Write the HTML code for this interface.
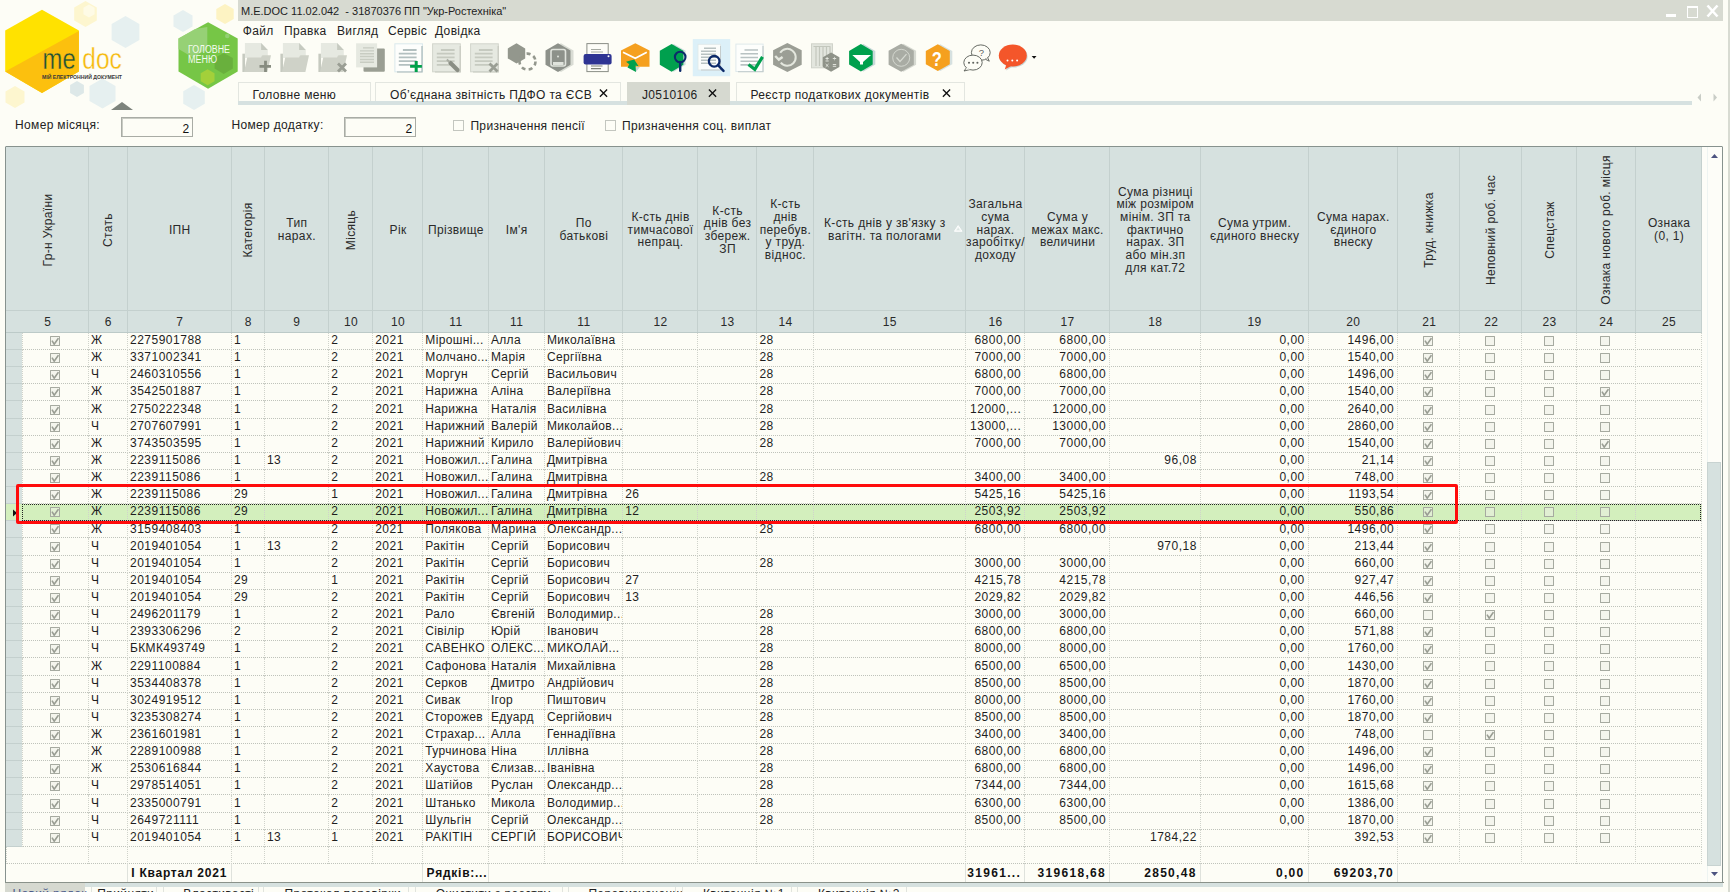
<!DOCTYPE html><html><head><meta charset="utf-8"><style>
html,body{margin:0;padding:0}
body{width:1730px;height:892px;overflow:hidden;position:relative;background:#fdfdf6;font-family:"Liberation Sans",sans-serif;font-size:12px;letter-spacing:0.35px;color:#222;}
svg{letter-spacing:0}
.a{position:absolute}
.t{position:absolute;white-space:pre;}
.hd{position:absolute;top:147px;height:164px;display:flex;align-items:center;justify-content:center;text-align:center;line-height:12.7px;color:#2a2a2a;overflow:hidden;white-space:pre}
.rot{position:absolute;white-space:pre;transform:rotate(-90deg);transform-origin:center center;color:#2a2a2a}
.num{position:absolute;top:312px;height:21px;line-height:21px;text-align:center;color:#2a2a2a}
.row{position:absolute;left:6px;width:1696px;height:17.13px}
.c{position:absolute;top:0;height:14px;line-height:14px;padding-top:0;white-space:pre;overflow:hidden;color:#1e1e1e;font-size:12px;letter-spacing:0.35px}
.r{text-align:right}
.cb{position:absolute;width:8px;height:8px;border:1px solid #a6aaa0;background:rgba(236,239,230,0.55);border-radius:0.5px}
.cb svg{position:absolute;left:0;top:0}
.tb{position:absolute;top:43px;width:29px;height:29px}
</style></head><body><svg class="a" style="left:0;top:0" width="238" height="112" viewBox="0 0 238 112"><polygon points="85.5,1.0 96.8,7.5 96.8,20.5 85.5,27.0 74.2,20.5 74.2,7.5" fill="#fdf6cf"/><polygon points="89.0,4.5 94.6,7.8 94.6,14.2 89.0,17.5 83.4,14.2 83.4,7.7" fill="#fefbe6"/><polygon points="125.5,16.0 139.4,24.0 139.4,40.0 125.5,48.0 111.6,40.0 111.6,24.0" fill="#e6f0f0"/><polygon points="183.0,10.0 192.5,15.5 192.5,26.5 183.0,32.0 173.5,26.5 173.5,15.5" fill="#e6f0f0"/><polygon points="225.0,4.0 233.7,9.0 233.7,19.0 225.0,24.0 216.3,19.0 216.3,9.0" fill="#fdf3c3"/><polygon points="15.0,86.0 24.5,91.5 24.5,102.5 15.0,108.0 5.5,102.5 5.5,91.5" fill="#fdf6cf"/><polygon points="77.0,81.0 83.9,85.0 83.9,93.0 77.0,97.0 70.1,93.0 70.1,85.0" fill="#dde8e8"/><polygon points="102.5,78.5 115.5,86.0 115.5,101.0 102.5,108.5 89.5,101.0 89.5,86.0" fill="#e6f0f0"/><polygon points="194.0,85.0 204.8,91.2 204.8,103.8 194.0,110.0 183.2,103.8 183.2,91.2" fill="#e6f0f0"/><polygon points="42,9.7 78.9,30.6 78.9,71.6 42,92.9 5.2,71.6 5.2,30.6" fill="#ffe200"/><polygon points="78.9,31 78.9,71.6 42,92.9 5.2,71.6" fill="#fcc00e"/><text x="42.6" y="69" font-family="Liberation Sans" font-size="29.5" fill="#1d5236" stroke="#fcc00e" stroke-width="0.35" textLength="33" lengthAdjust="spacingAndGlyphs">me</text><text x="82.3" y="69" font-family="Liberation Sans" font-size="29" fill="#f6b90a" stroke="#fdfdf6" stroke-width="0.35" textLength="39.6" lengthAdjust="spacingAndGlyphs">doc</text><text x="42" y="79" font-family="Liberation Sans" font-size="5.6" font-weight="bold" fill="#3a3a3a" textLength="80" lengthAdjust="spacingAndGlyphs">МІЙ ЕЛЕКТРОННИЙ ДОКУМЕНТ</text><polygon points="208.1,22.2 237.7,38.5 237.7,71.5 208.1,88.7 178.5,71.5 178.5,38.5" fill="#76c646"/><polygon points="207.3,27 207.3,49 193,57.5 178.5,49 178.5,38.5 195,29" fill="#9ad27a" opacity="0.9"/><polygon points="223.7,52.9 232.8,58.1 232.8,68.6 223.7,73.9 214.6,68.6 214.6,58.1" fill="#68ad3c" opacity="0.9"/><polygon points="207.6,69.3 214.5,73.3 214.5,81.3 207.6,85.3 200.7,81.3 200.7,73.3" fill="#a3d03a"/><circle cx="227.3" cy="36" r="2.3" fill="#92d072"/><text x="188" y="53.2" font-family="Liberation Sans" font-size="10" fill="#f4fbef" textLength="42" lengthAdjust="spacingAndGlyphs">ГОЛОВНЕ</text><text x="188" y="63.1" font-family="Liberation Sans" font-size="10" fill="#f4fbef" textLength="29" lengthAdjust="spacingAndGlyphs">МЕНЮ</text><polygon points="122,101.9 133,110 111,110" fill="#7d837c"/></svg><div class="a" style="left:238px;top:0;width:1485px;height:21px;background:#d7dad1"></div><div class="t" style="left:241px;top:4.5px;font-size:11px;letter-spacing:0;line-height:13px;color:#222">M.E.DOC 11.02.042  - 31870376 ПП "Укр-Ростехніка"</div><div class="a" style="left:1666px;top:14px;width:10px;height:3px;background:#fff"></div><div class="a" style="left:1687px;top:6px;width:9px;height:9px;border:1px solid #fff;border-top-width:2px"></div><svg class="a" style="left:1706px;top:4px" width="13" height="14" viewBox="0 0 13 14"><path d="M1.5 1.5 L11.5 12.5 M11.5 1.5 L1.5 12.5" stroke="#fff" stroke-width="2.6"/></svg><div class="a" style="left:1728px;top:0;width:2px;height:892px;background:#d8dbd2"></div><div class="t" style="left:242.8px;top:24px;line-height:14px;color:#222">Файл</div><div class="t" style="left:284.0px;top:24px;line-height:14px;color:#222">Правка</div><div class="t" style="left:337.0px;top:24px;line-height:14px;color:#222">Вигляд</div><div class="t" style="left:388.0px;top:24px;line-height:14px;color:#222">Сервіс</div><div class="t" style="left:435.0px;top:24px;line-height:14px;color:#222">Довідка</div><svg class="a" style="left:0;top:0" width="1050" height="80" viewBox="0 0 1050 80"><path d="M242.4 53.7 h2.6 v18.3 h-2.6z" fill="#c6cac0"/><path d="M244.9 43.1 h16.2 l6.7 6.9 v8 h-22.9z" fill="#e6e9e1"/><path d="M261.1 43.1 l6.7 6.9 h-6.7z" fill="#c6cac0"/><path d="M244.0 72 L247.3 57.4 H261.1 Q261.8 55.3 262.8 55.3 H271.0 L267.4 72z" fill="#cfd2c8"/><path d="M264.1 60.7 h2.8 v11.3 h-2.8z M259.5 65 h11.5 v2.8 h-11.5z" fill="#878c80"/><path d="M280.4 53.7 h2.6 v18.3 h-2.6z" fill="#c6cac0"/><path d="M282.9 43.1 h16.2 l6.7 6.9 v8 h-22.9z" fill="#e6e9e1"/><path d="M299.1 43.1 l6.7 6.9 h-6.7z" fill="#c6cac0"/><path d="M282.0 72 L285.3 57.4 H299.1 Q299.8 55.3 300.8 55.3 H309.0 L305.4 72z" fill="#cfd2c8"/><path d="M318.4 53.7 h2.6 v18.3 h-2.6z" fill="#c6cac0"/><path d="M320.9 43.1 h16.2 l6.7 6.9 v8 h-22.9z" fill="#e6e9e1"/><path d="M337.1 43.1 l6.7 6.9 h-6.7z" fill="#c6cac0"/><path d="M320.0 72 L323.3 57.4 H337.1 Q337.8 55.3 338.8 55.3 H347.0 L343.4 72z" fill="#cfd2c8"/><path d="M338.0 63.5 L346.0 71.5 M346.0 63.5 L338.0 71.5" stroke="#9a9e94" stroke-width="2.8"/><rect x="363.5" y="48.4" width="21.3" height="23.4" rx="1" fill="#9a9e93"/><rect x="356.1" y="43.3" width="21" height="24.1" fill="#e6e9e1"/><path d="M363 47.9 h11 M360 50.9 h14 M360 53.7 h14 M360 56.5 h14 M360 59.5 h14 M360 62.3 h14" stroke="#c8ccc2" stroke-width="1.4"/><rect x="394.9" y="43.8" width="27.5" height="28" fill="#fdfefc" stroke="#d9e8ec" stroke-width="1"/><path d="M422.0 46 V72 H397.0" fill="none" stroke="#a9b8b8" stroke-width="1.2"/><path d="M402.9 50 h13.7 M398.8 53.7 h17.8 M398.8 57.4 h17.8 M398.8 61.1 h17.8 M398.8 64.8 h17.8" stroke="#b3c0c0" stroke-width="1.8"/><path d="M414.7 60.9 h3 v11.1 h-3z M410.1 65 h11.8 v2.8 h-11.8z" fill="#00a04a"/><rect x="432.6" y="43.8" width="27.7" height="28" fill="#e6e9e1" stroke="#d2d5cc" stroke-width="1"/><path d="M460.2 46 V72 H435.0" fill="none" stroke="#c8cbc2" stroke-width="1.2"/><path d="M440.9 50 h13.7 M436.8 53.7 h17.8 M436.8 57.4 h17.8 M436.8 61.1 h17.8 M436.8 64.8 h17.8" stroke="#c6cac0" stroke-width="1.8"/><path d="M450.5 63 L457.5 70" stroke="#8a8e84" stroke-width="4.2" stroke-linecap="round"/><path d="M449.5 62 L446.8 59.5" stroke="#a9ada3" stroke-width="2"/><rect x="470.6" y="43.8" width="27.7" height="28" fill="#e6e9e1" stroke="#d2d5cc" stroke-width="1"/><path d="M498.2 46 V72 H473.0" fill="none" stroke="#c8cbc2" stroke-width="1.2"/><path d="M478.9 50 h13.7 M474.8 53.7 h17.8 M474.8 57.4 h17.8 M474.8 61.1 h17.8 M474.8 64.8 h17.8" stroke="#c6cac0" stroke-width="1.8"/><path d="M489.5 63.5 L497.5 71.5 M497.5 63.5 L489.5 71.5" stroke="#9a9e94" stroke-width="2.8"/><polygon points="516.5,43.3 525.2,48.4 525.2,58.4 516.5,63.5 507.8,58.4 507.8,48.4" fill="#93978d"/><circle cx="527.5" cy="61.6" r="8" fill="none" stroke="#93978d" stroke-width="2.6" stroke-dasharray="4 3.3"/><polygon points="561.0,43.2 573.5,50.4 573.5,64.8 561.0,72.0 548.5,64.8 548.5,50.4" fill="#d9dcd4"/><polygon points="558.0,43.2 570.5,50.4 570.5,64.8 558.0,72.0 545.5,64.8 545.5,50.4" fill="#8d918a"/><rect x="551" y="49.5" width="14.5" height="16.5" rx="2" fill="none" stroke="#e0e3dc" stroke-width="1.6"/><rect x="553" y="62" width="10.5" height="3" fill="#e0e3dc"/><circle cx="558" cy="56.5" r="1" fill="#e0e3dc"/><rect x="586.9" y="43.6" width="21.3" height="28" fill="#fdfdf8" stroke="#8a8e86" stroke-width="1"/><path d="M591 49.5 h10 M591 52 h12" stroke="#a6aaa2" stroke-width="1.2"/><rect x="583.6" y="54" width="28" height="10.4" rx="2" fill="#2e3493"/><circle cx="608.5" cy="56.2" r="1" fill="#fff"/><path d="M591 66 h11.5 M591 68.7 h10" stroke="#7d8179" stroke-width="1.2"/><path d="M635.3 43.2 L649.5 50.6 V66.8 H621 V50.6Z" fill="#f5a01f"/><path d="M623 52.3 L635.3 58.3 L646.8 52.3" fill="none" stroke="#fff" stroke-width="1.8"/><path d="M635.5 67 L640 67 L635.8 72Z" fill="#c9d3d3"/><path d="M626 61.8 L634.2 59.6 L638.6 66.2 L635.6 65.6 L636 72 L627.5 67.6 L629.3 64.3 Z" fill="#00a04e"/><polygon points="673.8,43.9 685.6,50.8 685.6,64.8 673.8,71.7 662.0,64.8 662.0,50.8" fill="#d0dede"/><polygon points="671.6,43.9 683.4,50.8 683.4,64.8 671.6,71.7 659.8,64.8 659.8,50.8" fill="#00a04e"/><circle cx="680.2" cy="57" r="5.3" fill="none" stroke="#0c2a6a" stroke-width="2.1"/><path d="M680.2 62 V70.8" stroke="#0c2a6a" stroke-width="2.4" stroke-linecap="round"/><rect x="692.8" y="39.1" width="37.4" height="37.1" fill="#dcf0f8"/><rect x="698" y="44.3" width="22.5" height="25.7" fill="#fbfdfb" stroke="#dfe8e8" stroke-width="0.8"/><path d="M701 70 H720.5 V46" fill="none" stroke="#c5cccc" stroke-width="1"/><path d="M704 48.3 h12 M701 51.3 h15 M701 54.3 h15 M701 57.3 h15 M701 60.3 h15 M701 63.3 h15" stroke="#b8c2c2" stroke-width="1.4"/><circle cx="714.2" cy="61.3" r="5.3" fill="none" stroke="#0c2a6a" stroke-width="2.3"/><path d="M718 65.2 L723.5 70.8" stroke="#0c2a6a" stroke-width="2.5" stroke-linecap="round"/><rect x="735.9" y="44.1" width="27.2" height="27.4" fill="#fdfefc" stroke="#dfe9ec" stroke-width="1"/><path d="M763 46 V71.8 H738" fill="none" stroke="#c0c9c9" stroke-width="1.1"/><path d="M744.5 50 h13.5 M740.5 53.8 h17.5 M740.5 57.5 h17.5 M740.5 61.2 h17.5 M740.5 64.9 h17.5" stroke="#b8c2c2" stroke-width="1.6"/><path d="M748.5 64.5 L754.8 69.3 L762.5 56.8" fill="none" stroke="#00a04e" stroke-width="3.2"/><polygon points="787.4,43.0 801.7,50.2 801.7,64.8 787.4,72.0 773.1,64.8 773.1,50.2" fill="#9b9e95"/><path d="M780.2 52.8 A8.4 8.4 0 1 1 780.8 62.6" fill="none" stroke="#e4e7de" stroke-width="2"/><polyline points="775.2,56 778.8,59.6 782.6,56.9" fill="none" stroke="#e4e7de" stroke-width="2.4"/><rect x="811.5" y="43.8" width="21" height="24" fill="#e3e6de" stroke="#d0d3ca" stroke-width="1"/><path d="M816 47 V66 M819.5 47 V66 M823 47 V66 M826.5 47 V66 M830 47 V66" stroke="#c3c7bd" stroke-width="1.2"/><path d="M813.5 46.5 h17" stroke="#c3c7bd" stroke-width="1"/><polygon points="831.1,52.5 839.4,57.3 839.4,66.9 831.1,71.7 822.8,66.9 822.8,57.3" fill="#8f9389"/><path d="M825.5 58.5 h3.2 M827.1 57 v3.2 M825.5 61 h3.2 M832.8 58.5 h3.4 M832.8 64.5 h3.4 M832.8 66.3 h3.4 M825.7 64 l2.8 2.8 M828.5 64 l-2.8 2.8" stroke="#e8ebe3" stroke-width="0.9"/><circle cx="834.5" cy="57.3" r="0.5" fill="#e8ebe3"/><circle cx="834.5" cy="59.8" r="0.5" fill="#e8ebe3"/><polygon points="863.5,44.0 875.3,50.9 875.3,64.5 863.5,71.4 851.7,64.5 851.7,50.9" fill="#c9d9d9"/><polygon points="860.9,44.0 872.7,50.9 872.7,64.5 860.9,71.4 849.1,64.5 849.1,50.9" fill="#00a04e"/><path d="M852.3 55 H871 L863 62 V64.5 H860 V62Z" fill="#fff"/><polygon points="903.5,43.8 916.1,50.8 916.1,64.8 903.5,71.8 890.9,64.8 890.9,50.8" fill="#d6d9d1"/><polygon points="901.2,43.8 913.8,50.8 913.8,64.8 901.2,71.8 888.6,64.8 888.6,50.8" fill="#a9aca4"/><circle cx="901.2" cy="57.8" r="8.5" fill="none" stroke="#d7dad2" stroke-width="0.9"/><path d="M896.5 57.5 L900 61.5 L906.5 54.2" fill="none" stroke="#d7dad2" stroke-width="1.2"/><polygon points="940.3,44.2 952.3,50.9 952.3,64.3 940.3,71.0 928.3,64.3 928.3,50.9" fill="#d6e1e0"/><polygon points="937.8,44.2 949.8,50.9 949.8,64.3 937.8,71.0 925.8,64.3 925.8,50.9" fill="#f5a01f"/><text x="0" y="0" font-family="Liberation Sans" font-weight="bold" font-size="21" fill="#fff" transform="translate(931.8 66.2) scale(0.78 1)">?</text><ellipse cx="980.8" cy="52.6" rx="9.4" ry="7.7" fill="#fdfdf6" stroke="#5f635d" stroke-width="0.95"/><path d="M985.5 59.3 L989.3 61.2 L987.6 57.6" fill="#fdfdf6" stroke="#5f635d" stroke-width="0.95"/><text x="978.8" y="56.3" font-family="Liberation Sans" font-size="9.5" fill="#5f635d">?</text><ellipse cx="973" cy="62.6" rx="9.2" ry="7.5" fill="#fdfdf6" stroke="#5f635d" stroke-width="0.95"/><path d="M966.3 68 L964 71 L969.8 69.6" fill="#fdfdf6" stroke="#5f635d" stroke-width="0.95"/><path d="M966.5 68.2 L969.5 69.2" stroke="#fdfdf6" stroke-width="1.2"/><circle cx="969" cy="62.8" r="1.05" fill="#5f635d"/><circle cx="973.2" cy="62.8" r="1.05" fill="#5f635d"/><circle cx="977.4" cy="62.8" r="1.05" fill="#5f635d"/><ellipse cx="1013.6" cy="56.5" rx="14" ry="11" fill="#c8d8d8"/><path d="M1007.5 65 L1006 70.5 L1013 66.5Z" fill="#c8d8d8"/><ellipse cx="1012.8" cy="55.5" rx="14" ry="11" fill="#f4562a"/><path d="M1006.5 64 L1004.8 69.5 L1012 65.5Z" fill="#f4562a"/><circle cx="1007.5" cy="60.5" r="1" fill="#fff"/><circle cx="1012.3" cy="60.5" r="1" fill="#fff"/><circle cx="1017.1" cy="60.5" r="1" fill="#fff"/><path d="M1031.7 56 L1036.5 56 L1034.1 58.8Z" fill="#111"/></svg><div class="a" style="left:238px;top:101px;width:1454px;height:4px;background:#d6e1e0"></div><div class="a" style="left:238.0px;top:81.5px;width:132.5px;height:19.5px;background:#fdfdf6;border:1px solid #e3e6e0;border-bottom:none;box-sizing:border-box"></div><div class="t" style="left:252.5px;top:88px;line-height:14px;color:#222">Головне меню</div><div class="a" style="left:375.3px;top:81.5px;width:246.1px;height:19.5px;background:#fdfdf6;border:1px solid #e3e6e0;border-bottom:none;box-sizing:border-box"></div><div class="t" style="left:390.0px;top:88px;line-height:14px;color:#222">Об’єднана звітність ПДФО та ЄСВ</div><svg class="a" style="left:598.8px;top:89px" width="9" height="9" viewBox="0 0 9 9"><path d="M0.9 0.6 L8.1 7.8 M8.1 0.6 L0.9 7.8" stroke="#111" stroke-width="1.35"/></svg><div class="a" style="left:627.1px;top:81.5px;width:103.2px;height:23.0px;background:#d6d9d0;border:1px solid #d6d9d0;border-bottom:none;box-sizing:border-box"></div><div class="t" style="left:642.0px;top:88px;line-height:14px;color:#222">J0510106</div><svg class="a" style="left:708.0px;top:89px" width="9" height="9" viewBox="0 0 9 9"><path d="M0.9 0.6 L8.1 7.8 M8.1 0.6 L0.9 7.8" stroke="#111" stroke-width="1.35"/></svg><div class="a" style="left:736.3px;top:81.5px;width:229.2px;height:19.5px;background:#fdfdf6;border:1px solid #e3e6e0;border-bottom:none;box-sizing:border-box"></div><div class="t" style="left:750.5px;top:88px;line-height:14px;color:#222">Реєстр податкових документів</div><svg class="a" style="left:942.4px;top:89px" width="9" height="9" viewBox="0 0 9 9"><path d="M0.9 0.6 L8.1 7.8 M8.1 0.6 L0.9 7.8" stroke="#111" stroke-width="1.35"/></svg><svg class="a" style="left:1697px;top:93px" width="22" height="9" viewBox="0 0 22 9"><path d="M4 0.5 L0.5 4.5 L4 8.5Z" fill="#c9cdc6"/><path d="M16.5 0.5 L20 4.5 L16.5 8.5Z" fill="#c9cdc6"/></svg><div class="t" style="left:15px;top:118px;line-height:14px;color:#222">Номер місяця:</div><div class="a" style="left:121px;top:117px;width:72px;height:20px;border:1px solid #a9aca5;box-sizing:border-box;background:#fdfdf6;box-shadow:inset 1px 1px 0 #c9ccc4"></div><div class="t" style="left:182.5px;top:121.5px;line-height:14px;color:#111">2</div><div class="t" style="left:231.4px;top:118px;line-height:14px;color:#222">Номер додатку:</div><div class="a" style="left:344px;top:117px;width:72px;height:20px;border:1px solid #a9aca5;box-sizing:border-box;background:#fdfdf6;box-shadow:inset 1px 1px 0 #c9ccc4"></div><div class="t" style="left:405.5px;top:121.5px;line-height:14px;color:#111">2</div><div class="a" style="left:453px;top:120px;width:9px;height:9px;border:1px solid #c3c6bf;background:#fdfdf6"></div><div class="t" style="left:470.4px;top:119px;line-height:14px;color:#222">Призначення пенсії</div><div class="a" style="left:605px;top:120px;width:9px;height:9px;border:1px solid #c3c6bf;background:#fdfdf6"></div><div class="t" style="left:622px;top:119px;line-height:14px;color:#222">Призначення соц. виплат</div><div class="a" style="left:5px;top:146px;width:1718px;height:737.5px;border:1.5px solid #87928e;box-sizing:border-box;background:#fdfdf6;border-radius:1px"></div><div class="a" style="left:6px;top:147px;width:1696px;height:185.5px;background:#d6e1df"></div><div class="a" style="left:88px;top:147px;width:1px;height:185.5px;background:#c4d0ce"></div><div class="a" style="left:127px;top:147px;width:1px;height:185.5px;background:#c4d0ce"></div><div class="a" style="left:231px;top:147px;width:1px;height:185.5px;background:#c4d0ce"></div><div class="a" style="left:264px;top:147px;width:1px;height:185.5px;background:#c4d0ce"></div><div class="a" style="left:328px;top:147px;width:1px;height:185.5px;background:#c4d0ce"></div><div class="a" style="left:372px;top:147px;width:1px;height:185.5px;background:#c4d0ce"></div><div class="a" style="left:422px;top:147px;width:1px;height:185.5px;background:#c4d0ce"></div><div class="a" style="left:488px;top:147px;width:1px;height:185.5px;background:#c4d0ce"></div><div class="a" style="left:544px;top:147px;width:1px;height:185.5px;background:#c4d0ce"></div><div class="a" style="left:622px;top:147px;width:1px;height:185.5px;background:#c4d0ce"></div><div class="a" style="left:697px;top:147px;width:1px;height:185.5px;background:#c4d0ce"></div><div class="a" style="left:756px;top:147px;width:1px;height:185.5px;background:#c4d0ce"></div><div class="a" style="left:813px;top:147px;width:1px;height:185.5px;background:#c4d0ce"></div><div class="a" style="left:965px;top:147px;width:1px;height:185.5px;background:#c4d0ce"></div><div class="a" style="left:1024px;top:147px;width:1px;height:185.5px;background:#c4d0ce"></div><div class="a" style="left:1109px;top:147px;width:1px;height:185.5px;background:#c4d0ce"></div><div class="a" style="left:1200px;top:147px;width:1px;height:185.5px;background:#c4d0ce"></div><div class="a" style="left:1308px;top:147px;width:1px;height:185.5px;background:#c4d0ce"></div><div class="a" style="left:1397px;top:147px;width:1px;height:185.5px;background:#c4d0ce"></div><div class="a" style="left:1459px;top:147px;width:1px;height:185.5px;background:#c4d0ce"></div><div class="a" style="left:1521px;top:147px;width:1px;height:185.5px;background:#c4d0ce"></div><div class="a" style="left:1576px;top:147px;width:1px;height:185.5px;background:#c4d0ce"></div><div class="a" style="left:1635px;top:147px;width:1px;height:185.5px;background:#c4d0ce"></div><div class="a" style="left:1701px;top:147px;width:1px;height:185.5px;background:#c4d0ce"></div><div class="a" style="left:6px;top:310px;width:1696px;height:1px;background:#c4d0ce"></div><div class="a" style="left:6px;top:332px;width:1696px;height:1px;background:#bccac8"></div><div class="rot" style="left:-52.4px;top:222px;width:200px;height:16px;line-height:16px;text-align:center">Гр-н України</div><div class="num" style="left:7.0px;width:81.3px">5</div><div class="rot" style="left:8.3px;top:222px;width:200px;height:16px;line-height:16px;text-align:center">Стать</div><div class="num" style="left:89.3px;width:38.0px">6</div><div class="hd" style="left:128.3px;width:102.9px;padding-top:2px;box-sizing:border-box">ІПН</div><div class="num" style="left:128.3px;width:102.9px">7</div><div class="rot" style="left:148.2px;top:222px;width:200px;height:16px;line-height:16px;text-align:center">Категорія</div><div class="num" style="left:232.2px;width:32.0px">8</div><div class="hd" style="left:265.2px;width:63.4px;padding-top:2px;box-sizing:border-box">Тип
нарах.</div><div class="num" style="left:265.2px;width:63.4px">9</div><div class="rot" style="left:251.1px;top:222px;width:200px;height:16px;line-height:16px;text-align:center">Місяць</div><div class="num" style="left:329.6px;width:42.9px">10</div><div class="hd" style="left:373.5px;width:49.1px;padding-top:2px;box-sizing:border-box">Рік</div><div class="num" style="left:373.5px;width:49.1px">10</div><div class="hd" style="left:423.6px;width:64.6px;padding-top:2px;box-sizing:border-box">Прізвище</div><div class="num" style="left:423.6px;width:64.6px">11</div><div class="hd" style="left:489.2px;width:55.0px;padding-top:2px;box-sizing:border-box">Ім&#x27;я</div><div class="num" style="left:489.2px;width:55.0px">11</div><div class="hd" style="left:545.2px;width:77.3px;padding-top:2px;box-sizing:border-box">По
батькові</div><div class="num" style="left:545.2px;width:77.3px">11</div><div class="hd" style="left:623.5px;width:74.0px;padding-top:2px;box-sizing:border-box">К-сть днів
тимчасової
непрац.</div><div class="num" style="left:623.5px;width:74.0px">12</div><div class="hd" style="left:698.5px;width:58.2px;padding-top:2px;box-sizing:border-box">К-сть
днів без
збереж.
ЗП</div><div class="num" style="left:698.5px;width:58.2px">13</div><div class="hd" style="left:757.7px;width:55.5px;padding-top:2px;box-sizing:border-box">К-сть
днів
перебув.
у труд.
віднос.</div><div class="num" style="left:757.7px;width:55.5px">14</div><div class="hd" style="left:814.2px;width:141.1px;padding-top:2px;box-sizing:border-box">К-сть днів у зв&#x27;язку з
вагітн. та пологами</div><div class="num" style="left:814.2px;width:151.1px">15</div><div class="hd" style="left:966.3px;width:58.3px;padding-top:2px;box-sizing:border-box">Загальна
сума
нарах.
заробітку/
доходу</div><div class="num" style="left:966.3px;width:58.3px">16</div><div class="hd" style="left:1025.6px;width:83.9px;padding-top:2px;box-sizing:border-box">Сума у
межах макс.
величини</div><div class="num" style="left:1025.6px;width:83.9px">17</div><div class="hd" style="left:1110.5px;width:89.7px;padding-top:2px;box-sizing:border-box">Сума різниці
між розміром
мінім. ЗП та
фактично
нарах. ЗП
або мін.зп
для кат.72</div><div class="num" style="left:1110.5px;width:89.7px">18</div><div class="hd" style="left:1201.2px;width:106.9px;padding-top:2px;box-sizing:border-box">Сума утрим.
єдиного внеску</div><div class="num" style="left:1201.2px;width:106.9px">19</div><div class="hd" style="left:1309.1px;width:88.5px;padding-top:2px;box-sizing:border-box">Сума нарах.
єдиного
внеску</div><div class="num" style="left:1309.1px;width:88.5px">20</div><div class="rot" style="left:1329.2px;top:222px;width:200px;height:16px;line-height:16px;text-align:center">Труд. книжка</div><div class="num" style="left:1398.6px;width:61.2px">21</div><div class="rot" style="left:1391.2px;top:222px;width:200px;height:16px;line-height:16px;text-align:center">Неповний роб. час</div><div class="num" style="left:1460.8px;width:60.9px">22</div><div class="rot" style="left:1449.5px;top:222px;width:200px;height:16px;line-height:16px;text-align:center">Спецстаж</div><div class="num" style="left:1522.7px;width:53.5px">23</div><div class="rot" style="left:1506.4px;top:222px;width:200px;height:16px;line-height:16px;text-align:center">Ознака нового роб. місця</div><div class="num" style="left:1577.2px;width:58.4px">24</div><div class="hd" style="left:1636.6px;width:65.0px;padding-top:2px;box-sizing:border-box">Ознака
(0, 1)</div><div class="num" style="left:1636.6px;width:65.0px">25</div><svg class="a" style="left:953.8px;top:224.8px" width="9" height="7" viewBox="0 0 9 7"><path d="M4.2 0.6 L8 6.3 L0.4 6.3Z" fill="#f4f7f6" stroke="#ffffff" stroke-width="0.9"/><path d="M4.2 2.8 L5.8 5.2 L2.6 5.2Z" fill="#dde6e4"/></svg><div class="row" style="top:333px;height:17px;"><div class="a" style="left:0;top:0;width:16px;height:17px;background:#d6e1df;border-bottom:1px solid #c4d0ce;box-sizing:border-box"></div><div class="a" style="left:16px;top:16px;width:1680px;height:0;border-top:1px dotted #bfc3bb"></div><div class="a" style="left:82px;top:0;width:0;height:17px;border-left:1px dotted #d0d3cb"></div><div class="a" style="left:121px;top:0;width:0;height:17px;border-left:1px dotted #d0d3cb"></div><div class="a" style="left:225px;top:0;width:0;height:17px;border-left:1px dotted #d0d3cb"></div><div class="a" style="left:258px;top:0;width:0;height:17px;border-left:1px dotted #d0d3cb"></div><div class="a" style="left:322px;top:0;width:0;height:17px;border-left:1px dotted #d0d3cb"></div><div class="a" style="left:366px;top:0;width:0;height:17px;border-left:1px dotted #d0d3cb"></div><div class="a" style="left:416px;top:0;width:0;height:17px;border-left:1px dotted #d0d3cb"></div><div class="a" style="left:482px;top:0;width:0;height:17px;border-left:1px dotted #d0d3cb"></div><div class="a" style="left:538px;top:0;width:0;height:17px;border-left:1px dotted #d0d3cb"></div><div class="a" style="left:616px;top:0;width:0;height:17px;border-left:1px dotted #d0d3cb"></div><div class="a" style="left:691px;top:0;width:0;height:17px;border-left:1px dotted #d0d3cb"></div><div class="a" style="left:750px;top:0;width:0;height:17px;border-left:1px dotted #d0d3cb"></div><div class="a" style="left:807px;top:0;width:0;height:17px;border-left:1px dotted #d0d3cb"></div><div class="a" style="left:959px;top:0;width:0;height:17px;border-left:1px dotted #d0d3cb"></div><div class="a" style="left:1018px;top:0;width:0;height:17px;border-left:1px dotted #d0d3cb"></div><div class="a" style="left:1103px;top:0;width:0;height:17px;border-left:1px dotted #d0d3cb"></div><div class="a" style="left:1194px;top:0;width:0;height:17px;border-left:1px dotted #d0d3cb"></div><div class="a" style="left:1302px;top:0;width:0;height:17px;border-left:1px dotted #d0d3cb"></div><div class="a" style="left:1391px;top:0;width:0;height:17px;border-left:1px dotted #d0d3cb"></div><div class="a" style="left:1453px;top:0;width:0;height:17px;border-left:1px dotted #d0d3cb"></div><div class="a" style="left:1515px;top:0;width:0;height:17px;border-left:1px dotted #d0d3cb"></div><div class="a" style="left:1570px;top:0;width:0;height:17px;border-left:1px dotted #d0d3cb"></div><div class="a" style="left:1629px;top:0;width:0;height:17px;border-left:1px dotted #d0d3cb"></div><div class="a" style="left:1695px;top:0;width:0;height:17px;border-left:1px dotted #d0d3cb"></div><div class="a" style="left:16px;top:0;width:0;height:17px;border-left:1px dotted #d0d3cb"></div><div class="a" style="left:0;top:0.10px;width:1696px;height:14px"><div class="cb" style="left:43.8px;top:2.9px"><svg width="8" height="8" viewBox="0 0 8 8"><path d="M1 3.6 L3.2 7.2 L7.4 1.2" fill="none" stroke="#999d93" stroke-width="1.6"/></svg></div><div class="c" style="left:82.8px;width:36.3px;padding-left:2.2px">Ж</div><div class="c" style="left:121.8px;width:101.2px;padding-left:2.2px;letter-spacing:0.5px">2275901788</div><div class="c" style="left:225.7px;width:30.3px;padding-left:2.2px;letter-spacing:0.5px">1</div><div class="c" style="left:258.7px;width:61.7px;padding-left:2.2px"></div><div class="c" style="left:323.1px;width:41.2px;padding-left:2.2px;letter-spacing:0.5px">2</div><div class="c" style="left:367.0px;width:47.4px;padding-left:2.2px;letter-spacing:0.5px">2021</div><div class="c" style="left:417.1px;width:62.9px;padding-left:2.2px">Мірошні...</div><div class="c" style="left:482.7px;width:53.3px;padding-left:2.2px">Алла</div><div class="c" style="left:538.7px;width:75.6px;padding-left:2.2px">Миколаївна</div><div class="c" style="left:617.0px;width:72.3px;padding-left:2.2px"></div><div class="c" style="left:751.2px;width:53.8px;padding-left:2.2px;letter-spacing:0.5px">28</div><div class="c r" style="left:959.8px;width:59.3px;padding-right:3.8px;box-sizing:border-box;letter-spacing:0.5px">6800,00</div><div class="c r" style="left:1019.1px;width:84.9px;padding-right:3.8px;box-sizing:border-box;letter-spacing:0.5px">6800,00</div><div class="c r" style="left:1104.0px;width:90.7px;padding-right:3.8px;box-sizing:border-box"></div><div class="c r" style="left:1194.7px;width:107.9px;padding-right:3.8px;box-sizing:border-box;letter-spacing:0.5px">0,00</div><div class="c r" style="left:1302.6px;width:89.5px;padding-right:3.8px;box-sizing:border-box;letter-spacing:0.5px">1496,00</div><div class="cb" style="left:1417.2px;top:2.9px"><svg width="8" height="8" viewBox="0 0 8 8"><path d="M1 3.6 L3.2 7.2 L7.4 1.2" fill="none" stroke="#999d93" stroke-width="1.6"/></svg></div><div class="cb" style="left:1479.2px;top:2.9px"></div><div class="cb" style="left:1537.5px;top:2.9px"></div><div class="cb" style="left:1594.4px;top:2.9px"></div></div></div><div class="row" style="top:350px;height:17px;"><div class="a" style="left:0;top:0;width:16px;height:17px;background:#d6e1df;border-bottom:1px solid #c4d0ce;box-sizing:border-box"></div><div class="a" style="left:16px;top:16px;width:1680px;height:0;border-top:1px dotted #bfc3bb"></div><div class="a" style="left:82px;top:0;width:0;height:17px;border-left:1px dotted #d0d3cb"></div><div class="a" style="left:121px;top:0;width:0;height:17px;border-left:1px dotted #d0d3cb"></div><div class="a" style="left:225px;top:0;width:0;height:17px;border-left:1px dotted #d0d3cb"></div><div class="a" style="left:258px;top:0;width:0;height:17px;border-left:1px dotted #d0d3cb"></div><div class="a" style="left:322px;top:0;width:0;height:17px;border-left:1px dotted #d0d3cb"></div><div class="a" style="left:366px;top:0;width:0;height:17px;border-left:1px dotted #d0d3cb"></div><div class="a" style="left:416px;top:0;width:0;height:17px;border-left:1px dotted #d0d3cb"></div><div class="a" style="left:482px;top:0;width:0;height:17px;border-left:1px dotted #d0d3cb"></div><div class="a" style="left:538px;top:0;width:0;height:17px;border-left:1px dotted #d0d3cb"></div><div class="a" style="left:616px;top:0;width:0;height:17px;border-left:1px dotted #d0d3cb"></div><div class="a" style="left:691px;top:0;width:0;height:17px;border-left:1px dotted #d0d3cb"></div><div class="a" style="left:750px;top:0;width:0;height:17px;border-left:1px dotted #d0d3cb"></div><div class="a" style="left:807px;top:0;width:0;height:17px;border-left:1px dotted #d0d3cb"></div><div class="a" style="left:959px;top:0;width:0;height:17px;border-left:1px dotted #d0d3cb"></div><div class="a" style="left:1018px;top:0;width:0;height:17px;border-left:1px dotted #d0d3cb"></div><div class="a" style="left:1103px;top:0;width:0;height:17px;border-left:1px dotted #d0d3cb"></div><div class="a" style="left:1194px;top:0;width:0;height:17px;border-left:1px dotted #d0d3cb"></div><div class="a" style="left:1302px;top:0;width:0;height:17px;border-left:1px dotted #d0d3cb"></div><div class="a" style="left:1391px;top:0;width:0;height:17px;border-left:1px dotted #d0d3cb"></div><div class="a" style="left:1453px;top:0;width:0;height:17px;border-left:1px dotted #d0d3cb"></div><div class="a" style="left:1515px;top:0;width:0;height:17px;border-left:1px dotted #d0d3cb"></div><div class="a" style="left:1570px;top:0;width:0;height:17px;border-left:1px dotted #d0d3cb"></div><div class="a" style="left:1629px;top:0;width:0;height:17px;border-left:1px dotted #d0d3cb"></div><div class="a" style="left:1695px;top:0;width:0;height:17px;border-left:1px dotted #d0d3cb"></div><div class="a" style="left:16px;top:0;width:0;height:17px;border-left:1px dotted #d0d3cb"></div><div class="a" style="left:0;top:0.23px;width:1696px;height:14px"><div class="cb" style="left:43.8px;top:2.9px"><svg width="8" height="8" viewBox="0 0 8 8"><path d="M1 3.6 L3.2 7.2 L7.4 1.2" fill="none" stroke="#999d93" stroke-width="1.6"/></svg></div><div class="c" style="left:82.8px;width:36.3px;padding-left:2.2px">Ж</div><div class="c" style="left:121.8px;width:101.2px;padding-left:2.2px;letter-spacing:0.5px">3371002341</div><div class="c" style="left:225.7px;width:30.3px;padding-left:2.2px;letter-spacing:0.5px">1</div><div class="c" style="left:258.7px;width:61.7px;padding-left:2.2px"></div><div class="c" style="left:323.1px;width:41.2px;padding-left:2.2px;letter-spacing:0.5px">2</div><div class="c" style="left:367.0px;width:47.4px;padding-left:2.2px;letter-spacing:0.5px">2021</div><div class="c" style="left:417.1px;width:62.9px;padding-left:2.2px">Молчано...</div><div class="c" style="left:482.7px;width:53.3px;padding-left:2.2px">Марія</div><div class="c" style="left:538.7px;width:75.6px;padding-left:2.2px">Сергіївна</div><div class="c" style="left:617.0px;width:72.3px;padding-left:2.2px"></div><div class="c" style="left:751.2px;width:53.8px;padding-left:2.2px;letter-spacing:0.5px">28</div><div class="c r" style="left:959.8px;width:59.3px;padding-right:3.8px;box-sizing:border-box;letter-spacing:0.5px">7000,00</div><div class="c r" style="left:1019.1px;width:84.9px;padding-right:3.8px;box-sizing:border-box;letter-spacing:0.5px">7000,00</div><div class="c r" style="left:1104.0px;width:90.7px;padding-right:3.8px;box-sizing:border-box"></div><div class="c r" style="left:1194.7px;width:107.9px;padding-right:3.8px;box-sizing:border-box;letter-spacing:0.5px">0,00</div><div class="c r" style="left:1302.6px;width:89.5px;padding-right:3.8px;box-sizing:border-box;letter-spacing:0.5px">1540,00</div><div class="cb" style="left:1417.2px;top:2.9px"><svg width="8" height="8" viewBox="0 0 8 8"><path d="M1 3.6 L3.2 7.2 L7.4 1.2" fill="none" stroke="#999d93" stroke-width="1.6"/></svg></div><div class="cb" style="left:1479.2px;top:2.9px"></div><div class="cb" style="left:1537.5px;top:2.9px"></div><div class="cb" style="left:1594.4px;top:2.9px"></div></div></div><div class="row" style="top:367px;height:17px;"><div class="a" style="left:0;top:0;width:16px;height:17px;background:#d6e1df;border-bottom:1px solid #c4d0ce;box-sizing:border-box"></div><div class="a" style="left:16px;top:16px;width:1680px;height:0;border-top:1px dotted #bfc3bb"></div><div class="a" style="left:82px;top:0;width:0;height:17px;border-left:1px dotted #d0d3cb"></div><div class="a" style="left:121px;top:0;width:0;height:17px;border-left:1px dotted #d0d3cb"></div><div class="a" style="left:225px;top:0;width:0;height:17px;border-left:1px dotted #d0d3cb"></div><div class="a" style="left:258px;top:0;width:0;height:17px;border-left:1px dotted #d0d3cb"></div><div class="a" style="left:322px;top:0;width:0;height:17px;border-left:1px dotted #d0d3cb"></div><div class="a" style="left:366px;top:0;width:0;height:17px;border-left:1px dotted #d0d3cb"></div><div class="a" style="left:416px;top:0;width:0;height:17px;border-left:1px dotted #d0d3cb"></div><div class="a" style="left:482px;top:0;width:0;height:17px;border-left:1px dotted #d0d3cb"></div><div class="a" style="left:538px;top:0;width:0;height:17px;border-left:1px dotted #d0d3cb"></div><div class="a" style="left:616px;top:0;width:0;height:17px;border-left:1px dotted #d0d3cb"></div><div class="a" style="left:691px;top:0;width:0;height:17px;border-left:1px dotted #d0d3cb"></div><div class="a" style="left:750px;top:0;width:0;height:17px;border-left:1px dotted #d0d3cb"></div><div class="a" style="left:807px;top:0;width:0;height:17px;border-left:1px dotted #d0d3cb"></div><div class="a" style="left:959px;top:0;width:0;height:17px;border-left:1px dotted #d0d3cb"></div><div class="a" style="left:1018px;top:0;width:0;height:17px;border-left:1px dotted #d0d3cb"></div><div class="a" style="left:1103px;top:0;width:0;height:17px;border-left:1px dotted #d0d3cb"></div><div class="a" style="left:1194px;top:0;width:0;height:17px;border-left:1px dotted #d0d3cb"></div><div class="a" style="left:1302px;top:0;width:0;height:17px;border-left:1px dotted #d0d3cb"></div><div class="a" style="left:1391px;top:0;width:0;height:17px;border-left:1px dotted #d0d3cb"></div><div class="a" style="left:1453px;top:0;width:0;height:17px;border-left:1px dotted #d0d3cb"></div><div class="a" style="left:1515px;top:0;width:0;height:17px;border-left:1px dotted #d0d3cb"></div><div class="a" style="left:1570px;top:0;width:0;height:17px;border-left:1px dotted #d0d3cb"></div><div class="a" style="left:1629px;top:0;width:0;height:17px;border-left:1px dotted #d0d3cb"></div><div class="a" style="left:1695px;top:0;width:0;height:17px;border-left:1px dotted #d0d3cb"></div><div class="a" style="left:16px;top:0;width:0;height:17px;border-left:1px dotted #d0d3cb"></div><div class="a" style="left:0;top:0.36px;width:1696px;height:14px"><div class="cb" style="left:43.8px;top:2.9px"><svg width="8" height="8" viewBox="0 0 8 8"><path d="M1 3.6 L3.2 7.2 L7.4 1.2" fill="none" stroke="#999d93" stroke-width="1.6"/></svg></div><div class="c" style="left:82.8px;width:36.3px;padding-left:2.2px">Ч</div><div class="c" style="left:121.8px;width:101.2px;padding-left:2.2px;letter-spacing:0.5px">2460310556</div><div class="c" style="left:225.7px;width:30.3px;padding-left:2.2px;letter-spacing:0.5px">1</div><div class="c" style="left:258.7px;width:61.7px;padding-left:2.2px"></div><div class="c" style="left:323.1px;width:41.2px;padding-left:2.2px;letter-spacing:0.5px">2</div><div class="c" style="left:367.0px;width:47.4px;padding-left:2.2px;letter-spacing:0.5px">2021</div><div class="c" style="left:417.1px;width:62.9px;padding-left:2.2px">Моргун</div><div class="c" style="left:482.7px;width:53.3px;padding-left:2.2px">Сергій</div><div class="c" style="left:538.7px;width:75.6px;padding-left:2.2px">Васильович</div><div class="c" style="left:617.0px;width:72.3px;padding-left:2.2px"></div><div class="c" style="left:751.2px;width:53.8px;padding-left:2.2px;letter-spacing:0.5px">28</div><div class="c r" style="left:959.8px;width:59.3px;padding-right:3.8px;box-sizing:border-box;letter-spacing:0.5px">6800,00</div><div class="c r" style="left:1019.1px;width:84.9px;padding-right:3.8px;box-sizing:border-box;letter-spacing:0.5px">6800,00</div><div class="c r" style="left:1104.0px;width:90.7px;padding-right:3.8px;box-sizing:border-box"></div><div class="c r" style="left:1194.7px;width:107.9px;padding-right:3.8px;box-sizing:border-box;letter-spacing:0.5px">0,00</div><div class="c r" style="left:1302.6px;width:89.5px;padding-right:3.8px;box-sizing:border-box;letter-spacing:0.5px">1496,00</div><div class="cb" style="left:1417.2px;top:2.9px"><svg width="8" height="8" viewBox="0 0 8 8"><path d="M1 3.6 L3.2 7.2 L7.4 1.2" fill="none" stroke="#999d93" stroke-width="1.6"/></svg></div><div class="cb" style="left:1479.2px;top:2.9px"></div><div class="cb" style="left:1537.5px;top:2.9px"></div><div class="cb" style="left:1594.4px;top:2.9px"></div></div></div><div class="row" style="top:384px;height:17px;"><div class="a" style="left:0;top:0;width:16px;height:17px;background:#d6e1df;border-bottom:1px solid #c4d0ce;box-sizing:border-box"></div><div class="a" style="left:16px;top:16px;width:1680px;height:0;border-top:1px dotted #bfc3bb"></div><div class="a" style="left:82px;top:0;width:0;height:17px;border-left:1px dotted #d0d3cb"></div><div class="a" style="left:121px;top:0;width:0;height:17px;border-left:1px dotted #d0d3cb"></div><div class="a" style="left:225px;top:0;width:0;height:17px;border-left:1px dotted #d0d3cb"></div><div class="a" style="left:258px;top:0;width:0;height:17px;border-left:1px dotted #d0d3cb"></div><div class="a" style="left:322px;top:0;width:0;height:17px;border-left:1px dotted #d0d3cb"></div><div class="a" style="left:366px;top:0;width:0;height:17px;border-left:1px dotted #d0d3cb"></div><div class="a" style="left:416px;top:0;width:0;height:17px;border-left:1px dotted #d0d3cb"></div><div class="a" style="left:482px;top:0;width:0;height:17px;border-left:1px dotted #d0d3cb"></div><div class="a" style="left:538px;top:0;width:0;height:17px;border-left:1px dotted #d0d3cb"></div><div class="a" style="left:616px;top:0;width:0;height:17px;border-left:1px dotted #d0d3cb"></div><div class="a" style="left:691px;top:0;width:0;height:17px;border-left:1px dotted #d0d3cb"></div><div class="a" style="left:750px;top:0;width:0;height:17px;border-left:1px dotted #d0d3cb"></div><div class="a" style="left:807px;top:0;width:0;height:17px;border-left:1px dotted #d0d3cb"></div><div class="a" style="left:959px;top:0;width:0;height:17px;border-left:1px dotted #d0d3cb"></div><div class="a" style="left:1018px;top:0;width:0;height:17px;border-left:1px dotted #d0d3cb"></div><div class="a" style="left:1103px;top:0;width:0;height:17px;border-left:1px dotted #d0d3cb"></div><div class="a" style="left:1194px;top:0;width:0;height:17px;border-left:1px dotted #d0d3cb"></div><div class="a" style="left:1302px;top:0;width:0;height:17px;border-left:1px dotted #d0d3cb"></div><div class="a" style="left:1391px;top:0;width:0;height:17px;border-left:1px dotted #d0d3cb"></div><div class="a" style="left:1453px;top:0;width:0;height:17px;border-left:1px dotted #d0d3cb"></div><div class="a" style="left:1515px;top:0;width:0;height:17px;border-left:1px dotted #d0d3cb"></div><div class="a" style="left:1570px;top:0;width:0;height:17px;border-left:1px dotted #d0d3cb"></div><div class="a" style="left:1629px;top:0;width:0;height:17px;border-left:1px dotted #d0d3cb"></div><div class="a" style="left:1695px;top:0;width:0;height:17px;border-left:1px dotted #d0d3cb"></div><div class="a" style="left:16px;top:0;width:0;height:17px;border-left:1px dotted #d0d3cb"></div><div class="a" style="left:0;top:0.49px;width:1696px;height:14px"><div class="cb" style="left:43.8px;top:2.9px"><svg width="8" height="8" viewBox="0 0 8 8"><path d="M1 3.6 L3.2 7.2 L7.4 1.2" fill="none" stroke="#999d93" stroke-width="1.6"/></svg></div><div class="c" style="left:82.8px;width:36.3px;padding-left:2.2px">Ж</div><div class="c" style="left:121.8px;width:101.2px;padding-left:2.2px;letter-spacing:0.5px">3542501887</div><div class="c" style="left:225.7px;width:30.3px;padding-left:2.2px;letter-spacing:0.5px">1</div><div class="c" style="left:258.7px;width:61.7px;padding-left:2.2px"></div><div class="c" style="left:323.1px;width:41.2px;padding-left:2.2px;letter-spacing:0.5px">2</div><div class="c" style="left:367.0px;width:47.4px;padding-left:2.2px;letter-spacing:0.5px">2021</div><div class="c" style="left:417.1px;width:62.9px;padding-left:2.2px">Нарижна</div><div class="c" style="left:482.7px;width:53.3px;padding-left:2.2px">Аліна</div><div class="c" style="left:538.7px;width:75.6px;padding-left:2.2px">Валеріївна</div><div class="c" style="left:617.0px;width:72.3px;padding-left:2.2px"></div><div class="c" style="left:751.2px;width:53.8px;padding-left:2.2px;letter-spacing:0.5px">28</div><div class="c r" style="left:959.8px;width:59.3px;padding-right:3.8px;box-sizing:border-box;letter-spacing:0.5px">7000,00</div><div class="c r" style="left:1019.1px;width:84.9px;padding-right:3.8px;box-sizing:border-box;letter-spacing:0.5px">7000,00</div><div class="c r" style="left:1104.0px;width:90.7px;padding-right:3.8px;box-sizing:border-box"></div><div class="c r" style="left:1194.7px;width:107.9px;padding-right:3.8px;box-sizing:border-box;letter-spacing:0.5px">0,00</div><div class="c r" style="left:1302.6px;width:89.5px;padding-right:3.8px;box-sizing:border-box;letter-spacing:0.5px">1540,00</div><div class="cb" style="left:1417.2px;top:2.9px"><svg width="8" height="8" viewBox="0 0 8 8"><path d="M1 3.6 L3.2 7.2 L7.4 1.2" fill="none" stroke="#999d93" stroke-width="1.6"/></svg></div><div class="cb" style="left:1479.2px;top:2.9px"></div><div class="cb" style="left:1537.5px;top:2.9px"></div><div class="cb" style="left:1594.4px;top:2.9px"><svg width="8" height="8" viewBox="0 0 8 8"><path d="M1 3.6 L3.2 7.2 L7.4 1.2" fill="none" stroke="#999d93" stroke-width="1.6"/></svg></div></div></div><div class="row" style="top:401px;height:18px;"><div class="a" style="left:0;top:0;width:16px;height:18px;background:#d6e1df;border-bottom:1px solid #c4d0ce;box-sizing:border-box"></div><div class="a" style="left:16px;top:17px;width:1680px;height:0;border-top:1px dotted #bfc3bb"></div><div class="a" style="left:82px;top:0;width:0;height:18px;border-left:1px dotted #d0d3cb"></div><div class="a" style="left:121px;top:0;width:0;height:18px;border-left:1px dotted #d0d3cb"></div><div class="a" style="left:225px;top:0;width:0;height:18px;border-left:1px dotted #d0d3cb"></div><div class="a" style="left:258px;top:0;width:0;height:18px;border-left:1px dotted #d0d3cb"></div><div class="a" style="left:322px;top:0;width:0;height:18px;border-left:1px dotted #d0d3cb"></div><div class="a" style="left:366px;top:0;width:0;height:18px;border-left:1px dotted #d0d3cb"></div><div class="a" style="left:416px;top:0;width:0;height:18px;border-left:1px dotted #d0d3cb"></div><div class="a" style="left:482px;top:0;width:0;height:18px;border-left:1px dotted #d0d3cb"></div><div class="a" style="left:538px;top:0;width:0;height:18px;border-left:1px dotted #d0d3cb"></div><div class="a" style="left:616px;top:0;width:0;height:18px;border-left:1px dotted #d0d3cb"></div><div class="a" style="left:691px;top:0;width:0;height:18px;border-left:1px dotted #d0d3cb"></div><div class="a" style="left:750px;top:0;width:0;height:18px;border-left:1px dotted #d0d3cb"></div><div class="a" style="left:807px;top:0;width:0;height:18px;border-left:1px dotted #d0d3cb"></div><div class="a" style="left:959px;top:0;width:0;height:18px;border-left:1px dotted #d0d3cb"></div><div class="a" style="left:1018px;top:0;width:0;height:18px;border-left:1px dotted #d0d3cb"></div><div class="a" style="left:1103px;top:0;width:0;height:18px;border-left:1px dotted #d0d3cb"></div><div class="a" style="left:1194px;top:0;width:0;height:18px;border-left:1px dotted #d0d3cb"></div><div class="a" style="left:1302px;top:0;width:0;height:18px;border-left:1px dotted #d0d3cb"></div><div class="a" style="left:1391px;top:0;width:0;height:18px;border-left:1px dotted #d0d3cb"></div><div class="a" style="left:1453px;top:0;width:0;height:18px;border-left:1px dotted #d0d3cb"></div><div class="a" style="left:1515px;top:0;width:0;height:18px;border-left:1px dotted #d0d3cb"></div><div class="a" style="left:1570px;top:0;width:0;height:18px;border-left:1px dotted #d0d3cb"></div><div class="a" style="left:1629px;top:0;width:0;height:18px;border-left:1px dotted #d0d3cb"></div><div class="a" style="left:1695px;top:0;width:0;height:18px;border-left:1px dotted #d0d3cb"></div><div class="a" style="left:16px;top:0;width:0;height:18px;border-left:1px dotted #d0d3cb"></div><div class="a" style="left:0;top:0.62px;width:1696px;height:14px"><div class="cb" style="left:43.8px;top:2.9px"><svg width="8" height="8" viewBox="0 0 8 8"><path d="M1 3.6 L3.2 7.2 L7.4 1.2" fill="none" stroke="#999d93" stroke-width="1.6"/></svg></div><div class="c" style="left:82.8px;width:36.3px;padding-left:2.2px">Ж</div><div class="c" style="left:121.8px;width:101.2px;padding-left:2.2px;letter-spacing:0.5px">2750222348</div><div class="c" style="left:225.7px;width:30.3px;padding-left:2.2px;letter-spacing:0.5px">1</div><div class="c" style="left:258.7px;width:61.7px;padding-left:2.2px"></div><div class="c" style="left:323.1px;width:41.2px;padding-left:2.2px;letter-spacing:0.5px">2</div><div class="c" style="left:367.0px;width:47.4px;padding-left:2.2px;letter-spacing:0.5px">2021</div><div class="c" style="left:417.1px;width:62.9px;padding-left:2.2px">Нарижна</div><div class="c" style="left:482.7px;width:53.3px;padding-left:2.2px">Наталія</div><div class="c" style="left:538.7px;width:75.6px;padding-left:2.2px">Василівна</div><div class="c" style="left:617.0px;width:72.3px;padding-left:2.2px"></div><div class="c" style="left:751.2px;width:53.8px;padding-left:2.2px;letter-spacing:0.5px">28</div><div class="c r" style="left:959.8px;width:59.3px;padding-right:3.8px;box-sizing:border-box;letter-spacing:0.5px">12000,...</div><div class="c r" style="left:1019.1px;width:84.9px;padding-right:3.8px;box-sizing:border-box;letter-spacing:0.5px">12000,00</div><div class="c r" style="left:1104.0px;width:90.7px;padding-right:3.8px;box-sizing:border-box"></div><div class="c r" style="left:1194.7px;width:107.9px;padding-right:3.8px;box-sizing:border-box;letter-spacing:0.5px">0,00</div><div class="c r" style="left:1302.6px;width:89.5px;padding-right:3.8px;box-sizing:border-box;letter-spacing:0.5px">2640,00</div><div class="cb" style="left:1417.2px;top:2.9px"><svg width="8" height="8" viewBox="0 0 8 8"><path d="M1 3.6 L3.2 7.2 L7.4 1.2" fill="none" stroke="#999d93" stroke-width="1.6"/></svg></div><div class="cb" style="left:1479.2px;top:2.9px"></div><div class="cb" style="left:1537.5px;top:2.9px"></div><div class="cb" style="left:1594.4px;top:2.9px"></div></div></div><div class="row" style="top:419px;height:17px;"><div class="a" style="left:0;top:0;width:16px;height:17px;background:#d6e1df;border-bottom:1px solid #c4d0ce;box-sizing:border-box"></div><div class="a" style="left:16px;top:16px;width:1680px;height:0;border-top:1px dotted #bfc3bb"></div><div class="a" style="left:82px;top:0;width:0;height:17px;border-left:1px dotted #d0d3cb"></div><div class="a" style="left:121px;top:0;width:0;height:17px;border-left:1px dotted #d0d3cb"></div><div class="a" style="left:225px;top:0;width:0;height:17px;border-left:1px dotted #d0d3cb"></div><div class="a" style="left:258px;top:0;width:0;height:17px;border-left:1px dotted #d0d3cb"></div><div class="a" style="left:322px;top:0;width:0;height:17px;border-left:1px dotted #d0d3cb"></div><div class="a" style="left:366px;top:0;width:0;height:17px;border-left:1px dotted #d0d3cb"></div><div class="a" style="left:416px;top:0;width:0;height:17px;border-left:1px dotted #d0d3cb"></div><div class="a" style="left:482px;top:0;width:0;height:17px;border-left:1px dotted #d0d3cb"></div><div class="a" style="left:538px;top:0;width:0;height:17px;border-left:1px dotted #d0d3cb"></div><div class="a" style="left:616px;top:0;width:0;height:17px;border-left:1px dotted #d0d3cb"></div><div class="a" style="left:691px;top:0;width:0;height:17px;border-left:1px dotted #d0d3cb"></div><div class="a" style="left:750px;top:0;width:0;height:17px;border-left:1px dotted #d0d3cb"></div><div class="a" style="left:807px;top:0;width:0;height:17px;border-left:1px dotted #d0d3cb"></div><div class="a" style="left:959px;top:0;width:0;height:17px;border-left:1px dotted #d0d3cb"></div><div class="a" style="left:1018px;top:0;width:0;height:17px;border-left:1px dotted #d0d3cb"></div><div class="a" style="left:1103px;top:0;width:0;height:17px;border-left:1px dotted #d0d3cb"></div><div class="a" style="left:1194px;top:0;width:0;height:17px;border-left:1px dotted #d0d3cb"></div><div class="a" style="left:1302px;top:0;width:0;height:17px;border-left:1px dotted #d0d3cb"></div><div class="a" style="left:1391px;top:0;width:0;height:17px;border-left:1px dotted #d0d3cb"></div><div class="a" style="left:1453px;top:0;width:0;height:17px;border-left:1px dotted #d0d3cb"></div><div class="a" style="left:1515px;top:0;width:0;height:17px;border-left:1px dotted #d0d3cb"></div><div class="a" style="left:1570px;top:0;width:0;height:17px;border-left:1px dotted #d0d3cb"></div><div class="a" style="left:1629px;top:0;width:0;height:17px;border-left:1px dotted #d0d3cb"></div><div class="a" style="left:1695px;top:0;width:0;height:17px;border-left:1px dotted #d0d3cb"></div><div class="a" style="left:16px;top:0;width:0;height:17px;border-left:1px dotted #d0d3cb"></div><div class="a" style="left:0;top:-0.25px;width:1696px;height:14px"><div class="cb" style="left:43.8px;top:2.9px"><svg width="8" height="8" viewBox="0 0 8 8"><path d="M1 3.6 L3.2 7.2 L7.4 1.2" fill="none" stroke="#999d93" stroke-width="1.6"/></svg></div><div class="c" style="left:82.8px;width:36.3px;padding-left:2.2px">Ч</div><div class="c" style="left:121.8px;width:101.2px;padding-left:2.2px;letter-spacing:0.5px">2707607991</div><div class="c" style="left:225.7px;width:30.3px;padding-left:2.2px;letter-spacing:0.5px">1</div><div class="c" style="left:258.7px;width:61.7px;padding-left:2.2px"></div><div class="c" style="left:323.1px;width:41.2px;padding-left:2.2px;letter-spacing:0.5px">2</div><div class="c" style="left:367.0px;width:47.4px;padding-left:2.2px;letter-spacing:0.5px">2021</div><div class="c" style="left:417.1px;width:62.9px;padding-left:2.2px">Нарижний</div><div class="c" style="left:482.7px;width:53.3px;padding-left:2.2px">Валерій</div><div class="c" style="left:538.7px;width:75.6px;padding-left:2.2px">Миколайов...</div><div class="c" style="left:617.0px;width:72.3px;padding-left:2.2px"></div><div class="c" style="left:751.2px;width:53.8px;padding-left:2.2px;letter-spacing:0.5px">28</div><div class="c r" style="left:959.8px;width:59.3px;padding-right:3.8px;box-sizing:border-box;letter-spacing:0.5px">13000,...</div><div class="c r" style="left:1019.1px;width:84.9px;padding-right:3.8px;box-sizing:border-box;letter-spacing:0.5px">13000,00</div><div class="c r" style="left:1104.0px;width:90.7px;padding-right:3.8px;box-sizing:border-box"></div><div class="c r" style="left:1194.7px;width:107.9px;padding-right:3.8px;box-sizing:border-box;letter-spacing:0.5px">0,00</div><div class="c r" style="left:1302.6px;width:89.5px;padding-right:3.8px;box-sizing:border-box;letter-spacing:0.5px">2860,00</div><div class="cb" style="left:1417.2px;top:2.9px"><svg width="8" height="8" viewBox="0 0 8 8"><path d="M1 3.6 L3.2 7.2 L7.4 1.2" fill="none" stroke="#999d93" stroke-width="1.6"/></svg></div><div class="cb" style="left:1479.2px;top:2.9px"></div><div class="cb" style="left:1537.5px;top:2.9px"></div><div class="cb" style="left:1594.4px;top:2.9px"></div></div></div><div class="row" style="top:436px;height:17px;"><div class="a" style="left:0;top:0;width:16px;height:17px;background:#d6e1df;border-bottom:1px solid #c4d0ce;box-sizing:border-box"></div><div class="a" style="left:16px;top:16px;width:1680px;height:0;border-top:1px dotted #bfc3bb"></div><div class="a" style="left:82px;top:0;width:0;height:17px;border-left:1px dotted #d0d3cb"></div><div class="a" style="left:121px;top:0;width:0;height:17px;border-left:1px dotted #d0d3cb"></div><div class="a" style="left:225px;top:0;width:0;height:17px;border-left:1px dotted #d0d3cb"></div><div class="a" style="left:258px;top:0;width:0;height:17px;border-left:1px dotted #d0d3cb"></div><div class="a" style="left:322px;top:0;width:0;height:17px;border-left:1px dotted #d0d3cb"></div><div class="a" style="left:366px;top:0;width:0;height:17px;border-left:1px dotted #d0d3cb"></div><div class="a" style="left:416px;top:0;width:0;height:17px;border-left:1px dotted #d0d3cb"></div><div class="a" style="left:482px;top:0;width:0;height:17px;border-left:1px dotted #d0d3cb"></div><div class="a" style="left:538px;top:0;width:0;height:17px;border-left:1px dotted #d0d3cb"></div><div class="a" style="left:616px;top:0;width:0;height:17px;border-left:1px dotted #d0d3cb"></div><div class="a" style="left:691px;top:0;width:0;height:17px;border-left:1px dotted #d0d3cb"></div><div class="a" style="left:750px;top:0;width:0;height:17px;border-left:1px dotted #d0d3cb"></div><div class="a" style="left:807px;top:0;width:0;height:17px;border-left:1px dotted #d0d3cb"></div><div class="a" style="left:959px;top:0;width:0;height:17px;border-left:1px dotted #d0d3cb"></div><div class="a" style="left:1018px;top:0;width:0;height:17px;border-left:1px dotted #d0d3cb"></div><div class="a" style="left:1103px;top:0;width:0;height:17px;border-left:1px dotted #d0d3cb"></div><div class="a" style="left:1194px;top:0;width:0;height:17px;border-left:1px dotted #d0d3cb"></div><div class="a" style="left:1302px;top:0;width:0;height:17px;border-left:1px dotted #d0d3cb"></div><div class="a" style="left:1391px;top:0;width:0;height:17px;border-left:1px dotted #d0d3cb"></div><div class="a" style="left:1453px;top:0;width:0;height:17px;border-left:1px dotted #d0d3cb"></div><div class="a" style="left:1515px;top:0;width:0;height:17px;border-left:1px dotted #d0d3cb"></div><div class="a" style="left:1570px;top:0;width:0;height:17px;border-left:1px dotted #d0d3cb"></div><div class="a" style="left:1629px;top:0;width:0;height:17px;border-left:1px dotted #d0d3cb"></div><div class="a" style="left:1695px;top:0;width:0;height:17px;border-left:1px dotted #d0d3cb"></div><div class="a" style="left:16px;top:0;width:0;height:17px;border-left:1px dotted #d0d3cb"></div><div class="a" style="left:0;top:-0.12px;width:1696px;height:14px"><div class="cb" style="left:43.8px;top:2.9px"><svg width="8" height="8" viewBox="0 0 8 8"><path d="M1 3.6 L3.2 7.2 L7.4 1.2" fill="none" stroke="#999d93" stroke-width="1.6"/></svg></div><div class="c" style="left:82.8px;width:36.3px;padding-left:2.2px">Ж</div><div class="c" style="left:121.8px;width:101.2px;padding-left:2.2px;letter-spacing:0.5px">3743503595</div><div class="c" style="left:225.7px;width:30.3px;padding-left:2.2px;letter-spacing:0.5px">1</div><div class="c" style="left:258.7px;width:61.7px;padding-left:2.2px"></div><div class="c" style="left:323.1px;width:41.2px;padding-left:2.2px;letter-spacing:0.5px">2</div><div class="c" style="left:367.0px;width:47.4px;padding-left:2.2px;letter-spacing:0.5px">2021</div><div class="c" style="left:417.1px;width:62.9px;padding-left:2.2px">Нарижний</div><div class="c" style="left:482.7px;width:53.3px;padding-left:2.2px">Кирило</div><div class="c" style="left:538.7px;width:75.6px;padding-left:2.2px">Валерійович</div><div class="c" style="left:617.0px;width:72.3px;padding-left:2.2px"></div><div class="c" style="left:751.2px;width:53.8px;padding-left:2.2px;letter-spacing:0.5px">28</div><div class="c r" style="left:959.8px;width:59.3px;padding-right:3.8px;box-sizing:border-box;letter-spacing:0.5px">7000,00</div><div class="c r" style="left:1019.1px;width:84.9px;padding-right:3.8px;box-sizing:border-box;letter-spacing:0.5px">7000,00</div><div class="c r" style="left:1104.0px;width:90.7px;padding-right:3.8px;box-sizing:border-box"></div><div class="c r" style="left:1194.7px;width:107.9px;padding-right:3.8px;box-sizing:border-box;letter-spacing:0.5px">0,00</div><div class="c r" style="left:1302.6px;width:89.5px;padding-right:3.8px;box-sizing:border-box;letter-spacing:0.5px">1540,00</div><div class="cb" style="left:1417.2px;top:2.9px"><svg width="8" height="8" viewBox="0 0 8 8"><path d="M1 3.6 L3.2 7.2 L7.4 1.2" fill="none" stroke="#999d93" stroke-width="1.6"/></svg></div><div class="cb" style="left:1479.2px;top:2.9px"></div><div class="cb" style="left:1537.5px;top:2.9px"></div><div class="cb" style="left:1594.4px;top:2.9px"><svg width="8" height="8" viewBox="0 0 8 8"><path d="M1 3.6 L3.2 7.2 L7.4 1.2" fill="none" stroke="#999d93" stroke-width="1.6"/></svg></div></div></div><div class="row" style="top:453px;height:17px;"><div class="a" style="left:0;top:0;width:16px;height:17px;background:#d6e1df;border-bottom:1px solid #c4d0ce;box-sizing:border-box"></div><div class="a" style="left:16px;top:16px;width:1680px;height:0;border-top:1px dotted #bfc3bb"></div><div class="a" style="left:82px;top:0;width:0;height:17px;border-left:1px dotted #d0d3cb"></div><div class="a" style="left:121px;top:0;width:0;height:17px;border-left:1px dotted #d0d3cb"></div><div class="a" style="left:225px;top:0;width:0;height:17px;border-left:1px dotted #d0d3cb"></div><div class="a" style="left:258px;top:0;width:0;height:17px;border-left:1px dotted #d0d3cb"></div><div class="a" style="left:322px;top:0;width:0;height:17px;border-left:1px dotted #d0d3cb"></div><div class="a" style="left:366px;top:0;width:0;height:17px;border-left:1px dotted #d0d3cb"></div><div class="a" style="left:416px;top:0;width:0;height:17px;border-left:1px dotted #d0d3cb"></div><div class="a" style="left:482px;top:0;width:0;height:17px;border-left:1px dotted #d0d3cb"></div><div class="a" style="left:538px;top:0;width:0;height:17px;border-left:1px dotted #d0d3cb"></div><div class="a" style="left:616px;top:0;width:0;height:17px;border-left:1px dotted #d0d3cb"></div><div class="a" style="left:691px;top:0;width:0;height:17px;border-left:1px dotted #d0d3cb"></div><div class="a" style="left:750px;top:0;width:0;height:17px;border-left:1px dotted #d0d3cb"></div><div class="a" style="left:807px;top:0;width:0;height:17px;border-left:1px dotted #d0d3cb"></div><div class="a" style="left:959px;top:0;width:0;height:17px;border-left:1px dotted #d0d3cb"></div><div class="a" style="left:1018px;top:0;width:0;height:17px;border-left:1px dotted #d0d3cb"></div><div class="a" style="left:1103px;top:0;width:0;height:17px;border-left:1px dotted #d0d3cb"></div><div class="a" style="left:1194px;top:0;width:0;height:17px;border-left:1px dotted #d0d3cb"></div><div class="a" style="left:1302px;top:0;width:0;height:17px;border-left:1px dotted #d0d3cb"></div><div class="a" style="left:1391px;top:0;width:0;height:17px;border-left:1px dotted #d0d3cb"></div><div class="a" style="left:1453px;top:0;width:0;height:17px;border-left:1px dotted #d0d3cb"></div><div class="a" style="left:1515px;top:0;width:0;height:17px;border-left:1px dotted #d0d3cb"></div><div class="a" style="left:1570px;top:0;width:0;height:17px;border-left:1px dotted #d0d3cb"></div><div class="a" style="left:1629px;top:0;width:0;height:17px;border-left:1px dotted #d0d3cb"></div><div class="a" style="left:1695px;top:0;width:0;height:17px;border-left:1px dotted #d0d3cb"></div><div class="a" style="left:16px;top:0;width:0;height:17px;border-left:1px dotted #d0d3cb"></div><div class="a" style="left:0;top:0.01px;width:1696px;height:14px"><div class="cb" style="left:43.8px;top:2.9px"><svg width="8" height="8" viewBox="0 0 8 8"><path d="M1 3.6 L3.2 7.2 L7.4 1.2" fill="none" stroke="#999d93" stroke-width="1.6"/></svg></div><div class="c" style="left:82.8px;width:36.3px;padding-left:2.2px">Ж</div><div class="c" style="left:121.8px;width:101.2px;padding-left:2.2px;letter-spacing:0.5px">2239115086</div><div class="c" style="left:225.7px;width:30.3px;padding-left:2.2px;letter-spacing:0.5px">1</div><div class="c" style="left:258.7px;width:61.7px;padding-left:2.2px;letter-spacing:0.5px">13</div><div class="c" style="left:323.1px;width:41.2px;padding-left:2.2px;letter-spacing:0.5px">2</div><div class="c" style="left:367.0px;width:47.4px;padding-left:2.2px;letter-spacing:0.5px">2021</div><div class="c" style="left:417.1px;width:62.9px;padding-left:2.2px">Новожил...</div><div class="c" style="left:482.7px;width:53.3px;padding-left:2.2px">Галина</div><div class="c" style="left:538.7px;width:75.6px;padding-left:2.2px">Дмитрівна</div><div class="c" style="left:617.0px;width:72.3px;padding-left:2.2px"></div><div class="c" style="left:751.2px;width:53.8px;padding-left:2.2px"></div><div class="c r" style="left:959.8px;width:59.3px;padding-right:3.8px;box-sizing:border-box"></div><div class="c r" style="left:1019.1px;width:84.9px;padding-right:3.8px;box-sizing:border-box"></div><div class="c r" style="left:1104.0px;width:90.7px;padding-right:3.8px;box-sizing:border-box;letter-spacing:0.5px">96,08</div><div class="c r" style="left:1194.7px;width:107.9px;padding-right:3.8px;box-sizing:border-box;letter-spacing:0.5px">0,00</div><div class="c r" style="left:1302.6px;width:89.5px;padding-right:3.8px;box-sizing:border-box;letter-spacing:0.5px">21,14</div><div class="cb" style="left:1417.2px;top:2.9px"><svg width="8" height="8" viewBox="0 0 8 8"><path d="M1 3.6 L3.2 7.2 L7.4 1.2" fill="none" stroke="#999d93" stroke-width="1.6"/></svg></div><div class="cb" style="left:1479.2px;top:2.9px"></div><div class="cb" style="left:1537.5px;top:2.9px"></div><div class="cb" style="left:1594.4px;top:2.9px"></div></div></div><div class="row" style="top:470px;height:17px;"><div class="a" style="left:0;top:0;width:16px;height:17px;background:#d6e1df;border-bottom:1px solid #c4d0ce;box-sizing:border-box"></div><div class="a" style="left:16px;top:16px;width:1680px;height:0;border-top:1px dotted #bfc3bb"></div><div class="a" style="left:82px;top:0;width:0;height:17px;border-left:1px dotted #d0d3cb"></div><div class="a" style="left:121px;top:0;width:0;height:17px;border-left:1px dotted #d0d3cb"></div><div class="a" style="left:225px;top:0;width:0;height:17px;border-left:1px dotted #d0d3cb"></div><div class="a" style="left:258px;top:0;width:0;height:17px;border-left:1px dotted #d0d3cb"></div><div class="a" style="left:322px;top:0;width:0;height:17px;border-left:1px dotted #d0d3cb"></div><div class="a" style="left:366px;top:0;width:0;height:17px;border-left:1px dotted #d0d3cb"></div><div class="a" style="left:416px;top:0;width:0;height:17px;border-left:1px dotted #d0d3cb"></div><div class="a" style="left:482px;top:0;width:0;height:17px;border-left:1px dotted #d0d3cb"></div><div class="a" style="left:538px;top:0;width:0;height:17px;border-left:1px dotted #d0d3cb"></div><div class="a" style="left:616px;top:0;width:0;height:17px;border-left:1px dotted #d0d3cb"></div><div class="a" style="left:691px;top:0;width:0;height:17px;border-left:1px dotted #d0d3cb"></div><div class="a" style="left:750px;top:0;width:0;height:17px;border-left:1px dotted #d0d3cb"></div><div class="a" style="left:807px;top:0;width:0;height:17px;border-left:1px dotted #d0d3cb"></div><div class="a" style="left:959px;top:0;width:0;height:17px;border-left:1px dotted #d0d3cb"></div><div class="a" style="left:1018px;top:0;width:0;height:17px;border-left:1px dotted #d0d3cb"></div><div class="a" style="left:1103px;top:0;width:0;height:17px;border-left:1px dotted #d0d3cb"></div><div class="a" style="left:1194px;top:0;width:0;height:17px;border-left:1px dotted #d0d3cb"></div><div class="a" style="left:1302px;top:0;width:0;height:17px;border-left:1px dotted #d0d3cb"></div><div class="a" style="left:1391px;top:0;width:0;height:17px;border-left:1px dotted #d0d3cb"></div><div class="a" style="left:1453px;top:0;width:0;height:17px;border-left:1px dotted #d0d3cb"></div><div class="a" style="left:1515px;top:0;width:0;height:17px;border-left:1px dotted #d0d3cb"></div><div class="a" style="left:1570px;top:0;width:0;height:17px;border-left:1px dotted #d0d3cb"></div><div class="a" style="left:1629px;top:0;width:0;height:17px;border-left:1px dotted #d0d3cb"></div><div class="a" style="left:1695px;top:0;width:0;height:17px;border-left:1px dotted #d0d3cb"></div><div class="a" style="left:16px;top:0;width:0;height:17px;border-left:1px dotted #d0d3cb"></div><div class="a" style="left:0;top:0.14px;width:1696px;height:14px"><div class="cb" style="left:43.8px;top:2.9px"><svg width="8" height="8" viewBox="0 0 8 8"><path d="M1 3.6 L3.2 7.2 L7.4 1.2" fill="none" stroke="#999d93" stroke-width="1.6"/></svg></div><div class="c" style="left:82.8px;width:36.3px;padding-left:2.2px">Ж</div><div class="c" style="left:121.8px;width:101.2px;padding-left:2.2px;letter-spacing:0.5px">2239115086</div><div class="c" style="left:225.7px;width:30.3px;padding-left:2.2px;letter-spacing:0.5px">1</div><div class="c" style="left:258.7px;width:61.7px;padding-left:2.2px"></div><div class="c" style="left:323.1px;width:41.2px;padding-left:2.2px;letter-spacing:0.5px">2</div><div class="c" style="left:367.0px;width:47.4px;padding-left:2.2px;letter-spacing:0.5px">2021</div><div class="c" style="left:417.1px;width:62.9px;padding-left:2.2px">Новожил...</div><div class="c" style="left:482.7px;width:53.3px;padding-left:2.2px">Галина</div><div class="c" style="left:538.7px;width:75.6px;padding-left:2.2px">Дмитрівна</div><div class="c" style="left:617.0px;width:72.3px;padding-left:2.2px"></div><div class="c" style="left:751.2px;width:53.8px;padding-left:2.2px;letter-spacing:0.5px">28</div><div class="c r" style="left:959.8px;width:59.3px;padding-right:3.8px;box-sizing:border-box;letter-spacing:0.5px">3400,00</div><div class="c r" style="left:1019.1px;width:84.9px;padding-right:3.8px;box-sizing:border-box;letter-spacing:0.5px">3400,00</div><div class="c r" style="left:1104.0px;width:90.7px;padding-right:3.8px;box-sizing:border-box"></div><div class="c r" style="left:1194.7px;width:107.9px;padding-right:3.8px;box-sizing:border-box;letter-spacing:0.5px">0,00</div><div class="c r" style="left:1302.6px;width:89.5px;padding-right:3.8px;box-sizing:border-box;letter-spacing:0.5px">748,00</div><div class="cb" style="left:1417.2px;top:2.9px"><svg width="8" height="8" viewBox="0 0 8 8"><path d="M1 3.6 L3.2 7.2 L7.4 1.2" fill="none" stroke="#999d93" stroke-width="1.6"/></svg></div><div class="cb" style="left:1479.2px;top:2.9px"></div><div class="cb" style="left:1537.5px;top:2.9px"></div><div class="cb" style="left:1594.4px;top:2.9px"></div></div></div><div class="row" style="top:487px;height:17px;"><div class="a" style="left:0;top:0;width:16px;height:17px;background:#d6e1df;border-bottom:1px solid #c4d0ce;box-sizing:border-box"></div><div class="a" style="left:16px;top:16px;width:1680px;height:0;border-top:1px dotted #bfc3bb"></div><div class="a" style="left:82px;top:0;width:0;height:17px;border-left:1px dotted #d0d3cb"></div><div class="a" style="left:121px;top:0;width:0;height:17px;border-left:1px dotted #d0d3cb"></div><div class="a" style="left:225px;top:0;width:0;height:17px;border-left:1px dotted #d0d3cb"></div><div class="a" style="left:258px;top:0;width:0;height:17px;border-left:1px dotted #d0d3cb"></div><div class="a" style="left:322px;top:0;width:0;height:17px;border-left:1px dotted #d0d3cb"></div><div class="a" style="left:366px;top:0;width:0;height:17px;border-left:1px dotted #d0d3cb"></div><div class="a" style="left:416px;top:0;width:0;height:17px;border-left:1px dotted #d0d3cb"></div><div class="a" style="left:482px;top:0;width:0;height:17px;border-left:1px dotted #d0d3cb"></div><div class="a" style="left:538px;top:0;width:0;height:17px;border-left:1px dotted #d0d3cb"></div><div class="a" style="left:616px;top:0;width:0;height:17px;border-left:1px dotted #d0d3cb"></div><div class="a" style="left:691px;top:0;width:0;height:17px;border-left:1px dotted #d0d3cb"></div><div class="a" style="left:750px;top:0;width:0;height:17px;border-left:1px dotted #d0d3cb"></div><div class="a" style="left:807px;top:0;width:0;height:17px;border-left:1px dotted #d0d3cb"></div><div class="a" style="left:959px;top:0;width:0;height:17px;border-left:1px dotted #d0d3cb"></div><div class="a" style="left:1018px;top:0;width:0;height:17px;border-left:1px dotted #d0d3cb"></div><div class="a" style="left:1103px;top:0;width:0;height:17px;border-left:1px dotted #d0d3cb"></div><div class="a" style="left:1194px;top:0;width:0;height:17px;border-left:1px dotted #d0d3cb"></div><div class="a" style="left:1302px;top:0;width:0;height:17px;border-left:1px dotted #d0d3cb"></div><div class="a" style="left:1391px;top:0;width:0;height:17px;border-left:1px dotted #d0d3cb"></div><div class="a" style="left:1453px;top:0;width:0;height:17px;border-left:1px dotted #d0d3cb"></div><div class="a" style="left:1515px;top:0;width:0;height:17px;border-left:1px dotted #d0d3cb"></div><div class="a" style="left:1570px;top:0;width:0;height:17px;border-left:1px dotted #d0d3cb"></div><div class="a" style="left:1629px;top:0;width:0;height:17px;border-left:1px dotted #d0d3cb"></div><div class="a" style="left:1695px;top:0;width:0;height:17px;border-left:1px dotted #d0d3cb"></div><div class="a" style="left:16px;top:0;width:0;height:17px;border-left:1px dotted #d0d3cb"></div><div class="a" style="left:0;top:0.27px;width:1696px;height:14px"><div class="cb" style="left:43.8px;top:2.9px"><svg width="8" height="8" viewBox="0 0 8 8"><path d="M1 3.6 L3.2 7.2 L7.4 1.2" fill="none" stroke="#999d93" stroke-width="1.6"/></svg></div><div class="c" style="left:82.8px;width:36.3px;padding-left:2.2px">Ж</div><div class="c" style="left:121.8px;width:101.2px;padding-left:2.2px;letter-spacing:0.5px">2239115086</div><div class="c" style="left:225.7px;width:30.3px;padding-left:2.2px;letter-spacing:0.5px">29</div><div class="c" style="left:258.7px;width:61.7px;padding-left:2.2px"></div><div class="c" style="left:323.1px;width:41.2px;padding-left:2.2px;letter-spacing:0.5px">1</div><div class="c" style="left:367.0px;width:47.4px;padding-left:2.2px;letter-spacing:0.5px">2021</div><div class="c" style="left:417.1px;width:62.9px;padding-left:2.2px">Новожил...</div><div class="c" style="left:482.7px;width:53.3px;padding-left:2.2px">Галина</div><div class="c" style="left:538.7px;width:75.6px;padding-left:2.2px">Дмитрівна</div><div class="c" style="left:617.0px;width:72.3px;padding-left:2.2px;letter-spacing:0.5px">26</div><div class="c" style="left:751.2px;width:53.8px;padding-left:2.2px"></div><div class="c r" style="left:959.8px;width:59.3px;padding-right:3.8px;box-sizing:border-box;letter-spacing:0.5px">5425,16</div><div class="c r" style="left:1019.1px;width:84.9px;padding-right:3.8px;box-sizing:border-box;letter-spacing:0.5px">5425,16</div><div class="c r" style="left:1104.0px;width:90.7px;padding-right:3.8px;box-sizing:border-box"></div><div class="c r" style="left:1194.7px;width:107.9px;padding-right:3.8px;box-sizing:border-box;letter-spacing:0.5px">0,00</div><div class="c r" style="left:1302.6px;width:89.5px;padding-right:3.8px;box-sizing:border-box;letter-spacing:0.5px">1193,54</div><div class="cb" style="left:1417.2px;top:2.9px"><svg width="8" height="8" viewBox="0 0 8 8"><path d="M1 3.6 L3.2 7.2 L7.4 1.2" fill="none" stroke="#999d93" stroke-width="1.6"/></svg></div><div class="cb" style="left:1479.2px;top:2.9px"></div><div class="cb" style="left:1537.5px;top:2.9px"></div><div class="cb" style="left:1594.4px;top:2.9px"></div></div></div><div class="row" style="top:504px;height:17px;background:#d3efbd;"><div class="a" style="left:0;top:0;width:16px;height:17px;background:#d3efbd;border-bottom:1px solid #c4d0ce;box-sizing:border-box"></div><div class="a" style="left:16px;top:16px;width:1680px;height:0;border-top:1px dotted #bfc3bb"></div><div class="a" style="left:82px;top:0;width:0;height:17px;border-left:1px dotted #d0d3cb"></div><div class="a" style="left:121px;top:0;width:0;height:17px;border-left:1px dotted #d0d3cb"></div><div class="a" style="left:225px;top:0;width:0;height:17px;border-left:1px dotted #d0d3cb"></div><div class="a" style="left:258px;top:0;width:0;height:17px;border-left:1px dotted #d0d3cb"></div><div class="a" style="left:322px;top:0;width:0;height:17px;border-left:1px dotted #d0d3cb"></div><div class="a" style="left:366px;top:0;width:0;height:17px;border-left:1px dotted #d0d3cb"></div><div class="a" style="left:416px;top:0;width:0;height:17px;border-left:1px dotted #d0d3cb"></div><div class="a" style="left:482px;top:0;width:0;height:17px;border-left:1px dotted #d0d3cb"></div><div class="a" style="left:538px;top:0;width:0;height:17px;border-left:1px dotted #d0d3cb"></div><div class="a" style="left:616px;top:0;width:0;height:17px;border-left:1px dotted #d0d3cb"></div><div class="a" style="left:691px;top:0;width:0;height:17px;border-left:1px dotted #d0d3cb"></div><div class="a" style="left:750px;top:0;width:0;height:17px;border-left:1px dotted #d0d3cb"></div><div class="a" style="left:807px;top:0;width:0;height:17px;border-left:1px dotted #d0d3cb"></div><div class="a" style="left:959px;top:0;width:0;height:17px;border-left:1px dotted #d0d3cb"></div><div class="a" style="left:1018px;top:0;width:0;height:17px;border-left:1px dotted #d0d3cb"></div><div class="a" style="left:1103px;top:0;width:0;height:17px;border-left:1px dotted #d0d3cb"></div><div class="a" style="left:1194px;top:0;width:0;height:17px;border-left:1px dotted #d0d3cb"></div><div class="a" style="left:1302px;top:0;width:0;height:17px;border-left:1px dotted #d0d3cb"></div><div class="a" style="left:1391px;top:0;width:0;height:17px;border-left:1px dotted #d0d3cb"></div><div class="a" style="left:1453px;top:0;width:0;height:17px;border-left:1px dotted #d0d3cb"></div><div class="a" style="left:1515px;top:0;width:0;height:17px;border-left:1px dotted #d0d3cb"></div><div class="a" style="left:1570px;top:0;width:0;height:17px;border-left:1px dotted #d0d3cb"></div><div class="a" style="left:1629px;top:0;width:0;height:17px;border-left:1px dotted #d0d3cb"></div><div class="a" style="left:1695px;top:0;width:0;height:17px;border-left:1px dotted #d0d3cb"></div><div class="a" style="left:16px;top:0;width:0;height:17px;border-left:1px dotted #d0d3cb"></div><div class="a" style="left:0;top:0.40px;width:1696px;height:14px"><div class="cb" style="left:43.8px;top:2.9px"><svg width="8" height="8" viewBox="0 0 8 8"><path d="M1 3.6 L3.2 7.2 L7.4 1.2" fill="none" stroke="#999d93" stroke-width="1.6"/></svg></div><div class="c" style="left:82.8px;width:36.3px;padding-left:2.2px">Ж</div><div class="c" style="left:121.8px;width:101.2px;padding-left:2.2px;letter-spacing:0.5px">2239115086</div><div class="c" style="left:225.7px;width:30.3px;padding-left:2.2px;letter-spacing:0.5px">29</div><div class="c" style="left:258.7px;width:61.7px;padding-left:2.2px"></div><div class="c" style="left:323.1px;width:41.2px;padding-left:2.2px;letter-spacing:0.5px">2</div><div class="c" style="left:367.0px;width:47.4px;padding-left:2.2px;letter-spacing:0.5px">2021</div><div class="c" style="left:417.1px;width:62.9px;padding-left:2.2px">Новожил...</div><div class="c" style="left:482.7px;width:53.3px;padding-left:2.2px">Галина</div><div class="c" style="left:538.7px;width:75.6px;padding-left:2.2px">Дмитрівна</div><div class="c" style="left:617.0px;width:72.3px;padding-left:2.2px;letter-spacing:0.5px">12</div><div class="c" style="left:751.2px;width:53.8px;padding-left:2.2px"></div><div class="c r" style="left:959.8px;width:59.3px;padding-right:3.8px;box-sizing:border-box;letter-spacing:0.5px">2503,92</div><div class="c r" style="left:1019.1px;width:84.9px;padding-right:3.8px;box-sizing:border-box;letter-spacing:0.5px">2503,92</div><div class="c r" style="left:1104.0px;width:90.7px;padding-right:3.8px;box-sizing:border-box"></div><div class="c r" style="left:1194.7px;width:107.9px;padding-right:3.8px;box-sizing:border-box;letter-spacing:0.5px">0,00</div><div class="c r" style="left:1302.6px;width:89.5px;padding-right:3.8px;box-sizing:border-box;letter-spacing:0.5px">550,86</div><div class="cb" style="left:1417.2px;top:2.9px"><svg width="8" height="8" viewBox="0 0 8 8"><path d="M1 3.6 L3.2 7.2 L7.4 1.2" fill="none" stroke="#999d93" stroke-width="1.6"/></svg></div><div class="cb" style="left:1479.2px;top:2.9px"></div><div class="cb" style="left:1537.5px;top:2.9px"></div><div class="cb" style="left:1594.4px;top:2.9px"></div></div><div class="a" style="left:16px;top:0;width:1679px;height:17px;border:1px dotted #222;box-sizing:border-box"></div><svg class="a" style="left:6px;top:5px" width="6" height="8" viewBox="0 0 6 8"><path d="M1 0.5 L5 4 L1 7.5Z" fill="#111"/></svg></div><div class="row" style="top:521px;height:17px;"><div class="a" style="left:0;top:0;width:16px;height:17px;background:#d6e1df;border-bottom:1px solid #c4d0ce;box-sizing:border-box"></div><div class="a" style="left:16px;top:16px;width:1680px;height:0;border-top:1px dotted #bfc3bb"></div><div class="a" style="left:82px;top:0;width:0;height:17px;border-left:1px dotted #d0d3cb"></div><div class="a" style="left:121px;top:0;width:0;height:17px;border-left:1px dotted #d0d3cb"></div><div class="a" style="left:225px;top:0;width:0;height:17px;border-left:1px dotted #d0d3cb"></div><div class="a" style="left:258px;top:0;width:0;height:17px;border-left:1px dotted #d0d3cb"></div><div class="a" style="left:322px;top:0;width:0;height:17px;border-left:1px dotted #d0d3cb"></div><div class="a" style="left:366px;top:0;width:0;height:17px;border-left:1px dotted #d0d3cb"></div><div class="a" style="left:416px;top:0;width:0;height:17px;border-left:1px dotted #d0d3cb"></div><div class="a" style="left:482px;top:0;width:0;height:17px;border-left:1px dotted #d0d3cb"></div><div class="a" style="left:538px;top:0;width:0;height:17px;border-left:1px dotted #d0d3cb"></div><div class="a" style="left:616px;top:0;width:0;height:17px;border-left:1px dotted #d0d3cb"></div><div class="a" style="left:691px;top:0;width:0;height:17px;border-left:1px dotted #d0d3cb"></div><div class="a" style="left:750px;top:0;width:0;height:17px;border-left:1px dotted #d0d3cb"></div><div class="a" style="left:807px;top:0;width:0;height:17px;border-left:1px dotted #d0d3cb"></div><div class="a" style="left:959px;top:0;width:0;height:17px;border-left:1px dotted #d0d3cb"></div><div class="a" style="left:1018px;top:0;width:0;height:17px;border-left:1px dotted #d0d3cb"></div><div class="a" style="left:1103px;top:0;width:0;height:17px;border-left:1px dotted #d0d3cb"></div><div class="a" style="left:1194px;top:0;width:0;height:17px;border-left:1px dotted #d0d3cb"></div><div class="a" style="left:1302px;top:0;width:0;height:17px;border-left:1px dotted #d0d3cb"></div><div class="a" style="left:1391px;top:0;width:0;height:17px;border-left:1px dotted #d0d3cb"></div><div class="a" style="left:1453px;top:0;width:0;height:17px;border-left:1px dotted #d0d3cb"></div><div class="a" style="left:1515px;top:0;width:0;height:17px;border-left:1px dotted #d0d3cb"></div><div class="a" style="left:1570px;top:0;width:0;height:17px;border-left:1px dotted #d0d3cb"></div><div class="a" style="left:1629px;top:0;width:0;height:17px;border-left:1px dotted #d0d3cb"></div><div class="a" style="left:1695px;top:0;width:0;height:17px;border-left:1px dotted #d0d3cb"></div><div class="a" style="left:16px;top:0;width:0;height:17px;border-left:1px dotted #d0d3cb"></div><div class="a" style="left:0;top:0.53px;width:1696px;height:14px"><div class="cb" style="left:43.8px;top:2.9px"><svg width="8" height="8" viewBox="0 0 8 8"><path d="M1 3.6 L3.2 7.2 L7.4 1.2" fill="none" stroke="#999d93" stroke-width="1.6"/></svg></div><div class="c" style="left:82.8px;width:36.3px;padding-left:2.2px">Ж</div><div class="c" style="left:121.8px;width:101.2px;padding-left:2.2px;letter-spacing:0.5px">3159408403</div><div class="c" style="left:225.7px;width:30.3px;padding-left:2.2px;letter-spacing:0.5px">1</div><div class="c" style="left:258.7px;width:61.7px;padding-left:2.2px"></div><div class="c" style="left:323.1px;width:41.2px;padding-left:2.2px;letter-spacing:0.5px">2</div><div class="c" style="left:367.0px;width:47.4px;padding-left:2.2px;letter-spacing:0.5px">2021</div><div class="c" style="left:417.1px;width:62.9px;padding-left:2.2px">Полякова</div><div class="c" style="left:482.7px;width:53.3px;padding-left:2.2px">Марина</div><div class="c" style="left:538.7px;width:75.6px;padding-left:2.2px">Олександр...</div><div class="c" style="left:617.0px;width:72.3px;padding-left:2.2px"></div><div class="c" style="left:751.2px;width:53.8px;padding-left:2.2px;letter-spacing:0.5px">28</div><div class="c r" style="left:959.8px;width:59.3px;padding-right:3.8px;box-sizing:border-box;letter-spacing:0.5px">6800,00</div><div class="c r" style="left:1019.1px;width:84.9px;padding-right:3.8px;box-sizing:border-box;letter-spacing:0.5px">6800,00</div><div class="c r" style="left:1104.0px;width:90.7px;padding-right:3.8px;box-sizing:border-box"></div><div class="c r" style="left:1194.7px;width:107.9px;padding-right:3.8px;box-sizing:border-box;letter-spacing:0.5px">0,00</div><div class="c r" style="left:1302.6px;width:89.5px;padding-right:3.8px;box-sizing:border-box;letter-spacing:0.5px">1496,00</div><div class="cb" style="left:1417.2px;top:2.9px"><svg width="8" height="8" viewBox="0 0 8 8"><path d="M1 3.6 L3.2 7.2 L7.4 1.2" fill="none" stroke="#999d93" stroke-width="1.6"/></svg></div><div class="cb" style="left:1479.2px;top:2.9px"></div><div class="cb" style="left:1537.5px;top:2.9px"></div><div class="cb" style="left:1594.4px;top:2.9px"></div></div></div><div class="row" style="top:538px;height:18px;"><div class="a" style="left:0;top:0;width:16px;height:18px;background:#d6e1df;border-bottom:1px solid #c4d0ce;box-sizing:border-box"></div><div class="a" style="left:16px;top:17px;width:1680px;height:0;border-top:1px dotted #bfc3bb"></div><div class="a" style="left:82px;top:0;width:0;height:18px;border-left:1px dotted #d0d3cb"></div><div class="a" style="left:121px;top:0;width:0;height:18px;border-left:1px dotted #d0d3cb"></div><div class="a" style="left:225px;top:0;width:0;height:18px;border-left:1px dotted #d0d3cb"></div><div class="a" style="left:258px;top:0;width:0;height:18px;border-left:1px dotted #d0d3cb"></div><div class="a" style="left:322px;top:0;width:0;height:18px;border-left:1px dotted #d0d3cb"></div><div class="a" style="left:366px;top:0;width:0;height:18px;border-left:1px dotted #d0d3cb"></div><div class="a" style="left:416px;top:0;width:0;height:18px;border-left:1px dotted #d0d3cb"></div><div class="a" style="left:482px;top:0;width:0;height:18px;border-left:1px dotted #d0d3cb"></div><div class="a" style="left:538px;top:0;width:0;height:18px;border-left:1px dotted #d0d3cb"></div><div class="a" style="left:616px;top:0;width:0;height:18px;border-left:1px dotted #d0d3cb"></div><div class="a" style="left:691px;top:0;width:0;height:18px;border-left:1px dotted #d0d3cb"></div><div class="a" style="left:750px;top:0;width:0;height:18px;border-left:1px dotted #d0d3cb"></div><div class="a" style="left:807px;top:0;width:0;height:18px;border-left:1px dotted #d0d3cb"></div><div class="a" style="left:959px;top:0;width:0;height:18px;border-left:1px dotted #d0d3cb"></div><div class="a" style="left:1018px;top:0;width:0;height:18px;border-left:1px dotted #d0d3cb"></div><div class="a" style="left:1103px;top:0;width:0;height:18px;border-left:1px dotted #d0d3cb"></div><div class="a" style="left:1194px;top:0;width:0;height:18px;border-left:1px dotted #d0d3cb"></div><div class="a" style="left:1302px;top:0;width:0;height:18px;border-left:1px dotted #d0d3cb"></div><div class="a" style="left:1391px;top:0;width:0;height:18px;border-left:1px dotted #d0d3cb"></div><div class="a" style="left:1453px;top:0;width:0;height:18px;border-left:1px dotted #d0d3cb"></div><div class="a" style="left:1515px;top:0;width:0;height:18px;border-left:1px dotted #d0d3cb"></div><div class="a" style="left:1570px;top:0;width:0;height:18px;border-left:1px dotted #d0d3cb"></div><div class="a" style="left:1629px;top:0;width:0;height:18px;border-left:1px dotted #d0d3cb"></div><div class="a" style="left:1695px;top:0;width:0;height:18px;border-left:1px dotted #d0d3cb"></div><div class="a" style="left:16px;top:0;width:0;height:18px;border-left:1px dotted #d0d3cb"></div><div class="a" style="left:0;top:0.66px;width:1696px;height:14px"><div class="cb" style="left:43.8px;top:2.9px"><svg width="8" height="8" viewBox="0 0 8 8"><path d="M1 3.6 L3.2 7.2 L7.4 1.2" fill="none" stroke="#999d93" stroke-width="1.6"/></svg></div><div class="c" style="left:82.8px;width:36.3px;padding-left:2.2px">Ч</div><div class="c" style="left:121.8px;width:101.2px;padding-left:2.2px;letter-spacing:0.5px">2019401054</div><div class="c" style="left:225.7px;width:30.3px;padding-left:2.2px;letter-spacing:0.5px">1</div><div class="c" style="left:258.7px;width:61.7px;padding-left:2.2px;letter-spacing:0.5px">13</div><div class="c" style="left:323.1px;width:41.2px;padding-left:2.2px;letter-spacing:0.5px">2</div><div class="c" style="left:367.0px;width:47.4px;padding-left:2.2px;letter-spacing:0.5px">2021</div><div class="c" style="left:417.1px;width:62.9px;padding-left:2.2px">Ракітін</div><div class="c" style="left:482.7px;width:53.3px;padding-left:2.2px">Сергій</div><div class="c" style="left:538.7px;width:75.6px;padding-left:2.2px">Борисович</div><div class="c" style="left:617.0px;width:72.3px;padding-left:2.2px"></div><div class="c" style="left:751.2px;width:53.8px;padding-left:2.2px"></div><div class="c r" style="left:959.8px;width:59.3px;padding-right:3.8px;box-sizing:border-box"></div><div class="c r" style="left:1019.1px;width:84.9px;padding-right:3.8px;box-sizing:border-box"></div><div class="c r" style="left:1104.0px;width:90.7px;padding-right:3.8px;box-sizing:border-box;letter-spacing:0.5px">970,18</div><div class="c r" style="left:1194.7px;width:107.9px;padding-right:3.8px;box-sizing:border-box;letter-spacing:0.5px">0,00</div><div class="c r" style="left:1302.6px;width:89.5px;padding-right:3.8px;box-sizing:border-box;letter-spacing:0.5px">213,44</div><div class="cb" style="left:1417.2px;top:2.9px"><svg width="8" height="8" viewBox="0 0 8 8"><path d="M1 3.6 L3.2 7.2 L7.4 1.2" fill="none" stroke="#999d93" stroke-width="1.6"/></svg></div><div class="cb" style="left:1479.2px;top:2.9px"></div><div class="cb" style="left:1537.5px;top:2.9px"></div><div class="cb" style="left:1594.4px;top:2.9px"></div></div></div><div class="row" style="top:556px;height:17px;"><div class="a" style="left:0;top:0;width:16px;height:17px;background:#d6e1df;border-bottom:1px solid #c4d0ce;box-sizing:border-box"></div><div class="a" style="left:16px;top:16px;width:1680px;height:0;border-top:1px dotted #bfc3bb"></div><div class="a" style="left:82px;top:0;width:0;height:17px;border-left:1px dotted #d0d3cb"></div><div class="a" style="left:121px;top:0;width:0;height:17px;border-left:1px dotted #d0d3cb"></div><div class="a" style="left:225px;top:0;width:0;height:17px;border-left:1px dotted #d0d3cb"></div><div class="a" style="left:258px;top:0;width:0;height:17px;border-left:1px dotted #d0d3cb"></div><div class="a" style="left:322px;top:0;width:0;height:17px;border-left:1px dotted #d0d3cb"></div><div class="a" style="left:366px;top:0;width:0;height:17px;border-left:1px dotted #d0d3cb"></div><div class="a" style="left:416px;top:0;width:0;height:17px;border-left:1px dotted #d0d3cb"></div><div class="a" style="left:482px;top:0;width:0;height:17px;border-left:1px dotted #d0d3cb"></div><div class="a" style="left:538px;top:0;width:0;height:17px;border-left:1px dotted #d0d3cb"></div><div class="a" style="left:616px;top:0;width:0;height:17px;border-left:1px dotted #d0d3cb"></div><div class="a" style="left:691px;top:0;width:0;height:17px;border-left:1px dotted #d0d3cb"></div><div class="a" style="left:750px;top:0;width:0;height:17px;border-left:1px dotted #d0d3cb"></div><div class="a" style="left:807px;top:0;width:0;height:17px;border-left:1px dotted #d0d3cb"></div><div class="a" style="left:959px;top:0;width:0;height:17px;border-left:1px dotted #d0d3cb"></div><div class="a" style="left:1018px;top:0;width:0;height:17px;border-left:1px dotted #d0d3cb"></div><div class="a" style="left:1103px;top:0;width:0;height:17px;border-left:1px dotted #d0d3cb"></div><div class="a" style="left:1194px;top:0;width:0;height:17px;border-left:1px dotted #d0d3cb"></div><div class="a" style="left:1302px;top:0;width:0;height:17px;border-left:1px dotted #d0d3cb"></div><div class="a" style="left:1391px;top:0;width:0;height:17px;border-left:1px dotted #d0d3cb"></div><div class="a" style="left:1453px;top:0;width:0;height:17px;border-left:1px dotted #d0d3cb"></div><div class="a" style="left:1515px;top:0;width:0;height:17px;border-left:1px dotted #d0d3cb"></div><div class="a" style="left:1570px;top:0;width:0;height:17px;border-left:1px dotted #d0d3cb"></div><div class="a" style="left:1629px;top:0;width:0;height:17px;border-left:1px dotted #d0d3cb"></div><div class="a" style="left:1695px;top:0;width:0;height:17px;border-left:1px dotted #d0d3cb"></div><div class="a" style="left:16px;top:0;width:0;height:17px;border-left:1px dotted #d0d3cb"></div><div class="a" style="left:0;top:-0.21px;width:1696px;height:14px"><div class="cb" style="left:43.8px;top:2.9px"><svg width="8" height="8" viewBox="0 0 8 8"><path d="M1 3.6 L3.2 7.2 L7.4 1.2" fill="none" stroke="#999d93" stroke-width="1.6"/></svg></div><div class="c" style="left:82.8px;width:36.3px;padding-left:2.2px">Ч</div><div class="c" style="left:121.8px;width:101.2px;padding-left:2.2px;letter-spacing:0.5px">2019401054</div><div class="c" style="left:225.7px;width:30.3px;padding-left:2.2px;letter-spacing:0.5px">1</div><div class="c" style="left:258.7px;width:61.7px;padding-left:2.2px"></div><div class="c" style="left:323.1px;width:41.2px;padding-left:2.2px;letter-spacing:0.5px">2</div><div class="c" style="left:367.0px;width:47.4px;padding-left:2.2px;letter-spacing:0.5px">2021</div><div class="c" style="left:417.1px;width:62.9px;padding-left:2.2px">Ракітін</div><div class="c" style="left:482.7px;width:53.3px;padding-left:2.2px">Сергій</div><div class="c" style="left:538.7px;width:75.6px;padding-left:2.2px">Борисович</div><div class="c" style="left:617.0px;width:72.3px;padding-left:2.2px"></div><div class="c" style="left:751.2px;width:53.8px;padding-left:2.2px;letter-spacing:0.5px">28</div><div class="c r" style="left:959.8px;width:59.3px;padding-right:3.8px;box-sizing:border-box;letter-spacing:0.5px">3000,00</div><div class="c r" style="left:1019.1px;width:84.9px;padding-right:3.8px;box-sizing:border-box;letter-spacing:0.5px">3000,00</div><div class="c r" style="left:1104.0px;width:90.7px;padding-right:3.8px;box-sizing:border-box"></div><div class="c r" style="left:1194.7px;width:107.9px;padding-right:3.8px;box-sizing:border-box;letter-spacing:0.5px">0,00</div><div class="c r" style="left:1302.6px;width:89.5px;padding-right:3.8px;box-sizing:border-box;letter-spacing:0.5px">660,00</div><div class="cb" style="left:1417.2px;top:2.9px"><svg width="8" height="8" viewBox="0 0 8 8"><path d="M1 3.6 L3.2 7.2 L7.4 1.2" fill="none" stroke="#999d93" stroke-width="1.6"/></svg></div><div class="cb" style="left:1479.2px;top:2.9px"></div><div class="cb" style="left:1537.5px;top:2.9px"></div><div class="cb" style="left:1594.4px;top:2.9px"></div></div></div><div class="row" style="top:573px;height:17px;"><div class="a" style="left:0;top:0;width:16px;height:17px;background:#d6e1df;border-bottom:1px solid #c4d0ce;box-sizing:border-box"></div><div class="a" style="left:16px;top:16px;width:1680px;height:0;border-top:1px dotted #bfc3bb"></div><div class="a" style="left:82px;top:0;width:0;height:17px;border-left:1px dotted #d0d3cb"></div><div class="a" style="left:121px;top:0;width:0;height:17px;border-left:1px dotted #d0d3cb"></div><div class="a" style="left:225px;top:0;width:0;height:17px;border-left:1px dotted #d0d3cb"></div><div class="a" style="left:258px;top:0;width:0;height:17px;border-left:1px dotted #d0d3cb"></div><div class="a" style="left:322px;top:0;width:0;height:17px;border-left:1px dotted #d0d3cb"></div><div class="a" style="left:366px;top:0;width:0;height:17px;border-left:1px dotted #d0d3cb"></div><div class="a" style="left:416px;top:0;width:0;height:17px;border-left:1px dotted #d0d3cb"></div><div class="a" style="left:482px;top:0;width:0;height:17px;border-left:1px dotted #d0d3cb"></div><div class="a" style="left:538px;top:0;width:0;height:17px;border-left:1px dotted #d0d3cb"></div><div class="a" style="left:616px;top:0;width:0;height:17px;border-left:1px dotted #d0d3cb"></div><div class="a" style="left:691px;top:0;width:0;height:17px;border-left:1px dotted #d0d3cb"></div><div class="a" style="left:750px;top:0;width:0;height:17px;border-left:1px dotted #d0d3cb"></div><div class="a" style="left:807px;top:0;width:0;height:17px;border-left:1px dotted #d0d3cb"></div><div class="a" style="left:959px;top:0;width:0;height:17px;border-left:1px dotted #d0d3cb"></div><div class="a" style="left:1018px;top:0;width:0;height:17px;border-left:1px dotted #d0d3cb"></div><div class="a" style="left:1103px;top:0;width:0;height:17px;border-left:1px dotted #d0d3cb"></div><div class="a" style="left:1194px;top:0;width:0;height:17px;border-left:1px dotted #d0d3cb"></div><div class="a" style="left:1302px;top:0;width:0;height:17px;border-left:1px dotted #d0d3cb"></div><div class="a" style="left:1391px;top:0;width:0;height:17px;border-left:1px dotted #d0d3cb"></div><div class="a" style="left:1453px;top:0;width:0;height:17px;border-left:1px dotted #d0d3cb"></div><div class="a" style="left:1515px;top:0;width:0;height:17px;border-left:1px dotted #d0d3cb"></div><div class="a" style="left:1570px;top:0;width:0;height:17px;border-left:1px dotted #d0d3cb"></div><div class="a" style="left:1629px;top:0;width:0;height:17px;border-left:1px dotted #d0d3cb"></div><div class="a" style="left:1695px;top:0;width:0;height:17px;border-left:1px dotted #d0d3cb"></div><div class="a" style="left:16px;top:0;width:0;height:17px;border-left:1px dotted #d0d3cb"></div><div class="a" style="left:0;top:-0.08px;width:1696px;height:14px"><div class="cb" style="left:43.8px;top:2.9px"><svg width="8" height="8" viewBox="0 0 8 8"><path d="M1 3.6 L3.2 7.2 L7.4 1.2" fill="none" stroke="#999d93" stroke-width="1.6"/></svg></div><div class="c" style="left:82.8px;width:36.3px;padding-left:2.2px">Ч</div><div class="c" style="left:121.8px;width:101.2px;padding-left:2.2px;letter-spacing:0.5px">2019401054</div><div class="c" style="left:225.7px;width:30.3px;padding-left:2.2px;letter-spacing:0.5px">29</div><div class="c" style="left:258.7px;width:61.7px;padding-left:2.2px"></div><div class="c" style="left:323.1px;width:41.2px;padding-left:2.2px;letter-spacing:0.5px">1</div><div class="c" style="left:367.0px;width:47.4px;padding-left:2.2px;letter-spacing:0.5px">2021</div><div class="c" style="left:417.1px;width:62.9px;padding-left:2.2px">Ракітін</div><div class="c" style="left:482.7px;width:53.3px;padding-left:2.2px">Сергій</div><div class="c" style="left:538.7px;width:75.6px;padding-left:2.2px">Борисович</div><div class="c" style="left:617.0px;width:72.3px;padding-left:2.2px;letter-spacing:0.5px">27</div><div class="c" style="left:751.2px;width:53.8px;padding-left:2.2px"></div><div class="c r" style="left:959.8px;width:59.3px;padding-right:3.8px;box-sizing:border-box;letter-spacing:0.5px">4215,78</div><div class="c r" style="left:1019.1px;width:84.9px;padding-right:3.8px;box-sizing:border-box;letter-spacing:0.5px">4215,78</div><div class="c r" style="left:1104.0px;width:90.7px;padding-right:3.8px;box-sizing:border-box"></div><div class="c r" style="left:1194.7px;width:107.9px;padding-right:3.8px;box-sizing:border-box;letter-spacing:0.5px">0,00</div><div class="c r" style="left:1302.6px;width:89.5px;padding-right:3.8px;box-sizing:border-box;letter-spacing:0.5px">927,47</div><div class="cb" style="left:1417.2px;top:2.9px"><svg width="8" height="8" viewBox="0 0 8 8"><path d="M1 3.6 L3.2 7.2 L7.4 1.2" fill="none" stroke="#999d93" stroke-width="1.6"/></svg></div><div class="cb" style="left:1479.2px;top:2.9px"></div><div class="cb" style="left:1537.5px;top:2.9px"></div><div class="cb" style="left:1594.4px;top:2.9px"></div></div></div><div class="row" style="top:590px;height:17px;"><div class="a" style="left:0;top:0;width:16px;height:17px;background:#d6e1df;border-bottom:1px solid #c4d0ce;box-sizing:border-box"></div><div class="a" style="left:16px;top:16px;width:1680px;height:0;border-top:1px dotted #bfc3bb"></div><div class="a" style="left:82px;top:0;width:0;height:17px;border-left:1px dotted #d0d3cb"></div><div class="a" style="left:121px;top:0;width:0;height:17px;border-left:1px dotted #d0d3cb"></div><div class="a" style="left:225px;top:0;width:0;height:17px;border-left:1px dotted #d0d3cb"></div><div class="a" style="left:258px;top:0;width:0;height:17px;border-left:1px dotted #d0d3cb"></div><div class="a" style="left:322px;top:0;width:0;height:17px;border-left:1px dotted #d0d3cb"></div><div class="a" style="left:366px;top:0;width:0;height:17px;border-left:1px dotted #d0d3cb"></div><div class="a" style="left:416px;top:0;width:0;height:17px;border-left:1px dotted #d0d3cb"></div><div class="a" style="left:482px;top:0;width:0;height:17px;border-left:1px dotted #d0d3cb"></div><div class="a" style="left:538px;top:0;width:0;height:17px;border-left:1px dotted #d0d3cb"></div><div class="a" style="left:616px;top:0;width:0;height:17px;border-left:1px dotted #d0d3cb"></div><div class="a" style="left:691px;top:0;width:0;height:17px;border-left:1px dotted #d0d3cb"></div><div class="a" style="left:750px;top:0;width:0;height:17px;border-left:1px dotted #d0d3cb"></div><div class="a" style="left:807px;top:0;width:0;height:17px;border-left:1px dotted #d0d3cb"></div><div class="a" style="left:959px;top:0;width:0;height:17px;border-left:1px dotted #d0d3cb"></div><div class="a" style="left:1018px;top:0;width:0;height:17px;border-left:1px dotted #d0d3cb"></div><div class="a" style="left:1103px;top:0;width:0;height:17px;border-left:1px dotted #d0d3cb"></div><div class="a" style="left:1194px;top:0;width:0;height:17px;border-left:1px dotted #d0d3cb"></div><div class="a" style="left:1302px;top:0;width:0;height:17px;border-left:1px dotted #d0d3cb"></div><div class="a" style="left:1391px;top:0;width:0;height:17px;border-left:1px dotted #d0d3cb"></div><div class="a" style="left:1453px;top:0;width:0;height:17px;border-left:1px dotted #d0d3cb"></div><div class="a" style="left:1515px;top:0;width:0;height:17px;border-left:1px dotted #d0d3cb"></div><div class="a" style="left:1570px;top:0;width:0;height:17px;border-left:1px dotted #d0d3cb"></div><div class="a" style="left:1629px;top:0;width:0;height:17px;border-left:1px dotted #d0d3cb"></div><div class="a" style="left:1695px;top:0;width:0;height:17px;border-left:1px dotted #d0d3cb"></div><div class="a" style="left:16px;top:0;width:0;height:17px;border-left:1px dotted #d0d3cb"></div><div class="a" style="left:0;top:0.05px;width:1696px;height:14px"><div class="cb" style="left:43.8px;top:2.9px"><svg width="8" height="8" viewBox="0 0 8 8"><path d="M1 3.6 L3.2 7.2 L7.4 1.2" fill="none" stroke="#999d93" stroke-width="1.6"/></svg></div><div class="c" style="left:82.8px;width:36.3px;padding-left:2.2px">Ч</div><div class="c" style="left:121.8px;width:101.2px;padding-left:2.2px;letter-spacing:0.5px">2019401054</div><div class="c" style="left:225.7px;width:30.3px;padding-left:2.2px;letter-spacing:0.5px">29</div><div class="c" style="left:258.7px;width:61.7px;padding-left:2.2px"></div><div class="c" style="left:323.1px;width:41.2px;padding-left:2.2px;letter-spacing:0.5px">2</div><div class="c" style="left:367.0px;width:47.4px;padding-left:2.2px;letter-spacing:0.5px">2021</div><div class="c" style="left:417.1px;width:62.9px;padding-left:2.2px">Ракітін</div><div class="c" style="left:482.7px;width:53.3px;padding-left:2.2px">Сергій</div><div class="c" style="left:538.7px;width:75.6px;padding-left:2.2px">Борисович</div><div class="c" style="left:617.0px;width:72.3px;padding-left:2.2px;letter-spacing:0.5px">13</div><div class="c" style="left:751.2px;width:53.8px;padding-left:2.2px"></div><div class="c r" style="left:959.8px;width:59.3px;padding-right:3.8px;box-sizing:border-box;letter-spacing:0.5px">2029,82</div><div class="c r" style="left:1019.1px;width:84.9px;padding-right:3.8px;box-sizing:border-box;letter-spacing:0.5px">2029,82</div><div class="c r" style="left:1104.0px;width:90.7px;padding-right:3.8px;box-sizing:border-box"></div><div class="c r" style="left:1194.7px;width:107.9px;padding-right:3.8px;box-sizing:border-box;letter-spacing:0.5px">0,00</div><div class="c r" style="left:1302.6px;width:89.5px;padding-right:3.8px;box-sizing:border-box;letter-spacing:0.5px">446,56</div><div class="cb" style="left:1417.2px;top:2.9px"><svg width="8" height="8" viewBox="0 0 8 8"><path d="M1 3.6 L3.2 7.2 L7.4 1.2" fill="none" stroke="#999d93" stroke-width="1.6"/></svg></div><div class="cb" style="left:1479.2px;top:2.9px"></div><div class="cb" style="left:1537.5px;top:2.9px"></div><div class="cb" style="left:1594.4px;top:2.9px"></div></div></div><div class="row" style="top:607px;height:17px;"><div class="a" style="left:0;top:0;width:16px;height:17px;background:#d6e1df;border-bottom:1px solid #c4d0ce;box-sizing:border-box"></div><div class="a" style="left:16px;top:16px;width:1680px;height:0;border-top:1px dotted #bfc3bb"></div><div class="a" style="left:82px;top:0;width:0;height:17px;border-left:1px dotted #d0d3cb"></div><div class="a" style="left:121px;top:0;width:0;height:17px;border-left:1px dotted #d0d3cb"></div><div class="a" style="left:225px;top:0;width:0;height:17px;border-left:1px dotted #d0d3cb"></div><div class="a" style="left:258px;top:0;width:0;height:17px;border-left:1px dotted #d0d3cb"></div><div class="a" style="left:322px;top:0;width:0;height:17px;border-left:1px dotted #d0d3cb"></div><div class="a" style="left:366px;top:0;width:0;height:17px;border-left:1px dotted #d0d3cb"></div><div class="a" style="left:416px;top:0;width:0;height:17px;border-left:1px dotted #d0d3cb"></div><div class="a" style="left:482px;top:0;width:0;height:17px;border-left:1px dotted #d0d3cb"></div><div class="a" style="left:538px;top:0;width:0;height:17px;border-left:1px dotted #d0d3cb"></div><div class="a" style="left:616px;top:0;width:0;height:17px;border-left:1px dotted #d0d3cb"></div><div class="a" style="left:691px;top:0;width:0;height:17px;border-left:1px dotted #d0d3cb"></div><div class="a" style="left:750px;top:0;width:0;height:17px;border-left:1px dotted #d0d3cb"></div><div class="a" style="left:807px;top:0;width:0;height:17px;border-left:1px dotted #d0d3cb"></div><div class="a" style="left:959px;top:0;width:0;height:17px;border-left:1px dotted #d0d3cb"></div><div class="a" style="left:1018px;top:0;width:0;height:17px;border-left:1px dotted #d0d3cb"></div><div class="a" style="left:1103px;top:0;width:0;height:17px;border-left:1px dotted #d0d3cb"></div><div class="a" style="left:1194px;top:0;width:0;height:17px;border-left:1px dotted #d0d3cb"></div><div class="a" style="left:1302px;top:0;width:0;height:17px;border-left:1px dotted #d0d3cb"></div><div class="a" style="left:1391px;top:0;width:0;height:17px;border-left:1px dotted #d0d3cb"></div><div class="a" style="left:1453px;top:0;width:0;height:17px;border-left:1px dotted #d0d3cb"></div><div class="a" style="left:1515px;top:0;width:0;height:17px;border-left:1px dotted #d0d3cb"></div><div class="a" style="left:1570px;top:0;width:0;height:17px;border-left:1px dotted #d0d3cb"></div><div class="a" style="left:1629px;top:0;width:0;height:17px;border-left:1px dotted #d0d3cb"></div><div class="a" style="left:1695px;top:0;width:0;height:17px;border-left:1px dotted #d0d3cb"></div><div class="a" style="left:16px;top:0;width:0;height:17px;border-left:1px dotted #d0d3cb"></div><div class="a" style="left:0;top:0.18px;width:1696px;height:14px"><div class="cb" style="left:43.8px;top:2.9px"><svg width="8" height="8" viewBox="0 0 8 8"><path d="M1 3.6 L3.2 7.2 L7.4 1.2" fill="none" stroke="#999d93" stroke-width="1.6"/></svg></div><div class="c" style="left:82.8px;width:36.3px;padding-left:2.2px">Ч</div><div class="c" style="left:121.8px;width:101.2px;padding-left:2.2px;letter-spacing:0.5px">2496201179</div><div class="c" style="left:225.7px;width:30.3px;padding-left:2.2px;letter-spacing:0.5px">1</div><div class="c" style="left:258.7px;width:61.7px;padding-left:2.2px"></div><div class="c" style="left:323.1px;width:41.2px;padding-left:2.2px;letter-spacing:0.5px">2</div><div class="c" style="left:367.0px;width:47.4px;padding-left:2.2px;letter-spacing:0.5px">2021</div><div class="c" style="left:417.1px;width:62.9px;padding-left:2.2px">Рало</div><div class="c" style="left:482.7px;width:53.3px;padding-left:2.2px">Євгеній</div><div class="c" style="left:538.7px;width:75.6px;padding-left:2.2px">Володимир...</div><div class="c" style="left:617.0px;width:72.3px;padding-left:2.2px"></div><div class="c" style="left:751.2px;width:53.8px;padding-left:2.2px;letter-spacing:0.5px">28</div><div class="c r" style="left:959.8px;width:59.3px;padding-right:3.8px;box-sizing:border-box;letter-spacing:0.5px">3000,00</div><div class="c r" style="left:1019.1px;width:84.9px;padding-right:3.8px;box-sizing:border-box;letter-spacing:0.5px">3000,00</div><div class="c r" style="left:1104.0px;width:90.7px;padding-right:3.8px;box-sizing:border-box"></div><div class="c r" style="left:1194.7px;width:107.9px;padding-right:3.8px;box-sizing:border-box;letter-spacing:0.5px">0,00</div><div class="c r" style="left:1302.6px;width:89.5px;padding-right:3.8px;box-sizing:border-box;letter-spacing:0.5px">660,00</div><div class="cb" style="left:1417.2px;top:2.9px"></div><div class="cb" style="left:1479.2px;top:2.9px"><svg width="8" height="8" viewBox="0 0 8 8"><path d="M1 3.6 L3.2 7.2 L7.4 1.2" fill="none" stroke="#999d93" stroke-width="1.6"/></svg></div><div class="cb" style="left:1537.5px;top:2.9px"></div><div class="cb" style="left:1594.4px;top:2.9px"></div></div></div><div class="row" style="top:624px;height:17px;"><div class="a" style="left:0;top:0;width:16px;height:17px;background:#d6e1df;border-bottom:1px solid #c4d0ce;box-sizing:border-box"></div><div class="a" style="left:16px;top:16px;width:1680px;height:0;border-top:1px dotted #bfc3bb"></div><div class="a" style="left:82px;top:0;width:0;height:17px;border-left:1px dotted #d0d3cb"></div><div class="a" style="left:121px;top:0;width:0;height:17px;border-left:1px dotted #d0d3cb"></div><div class="a" style="left:225px;top:0;width:0;height:17px;border-left:1px dotted #d0d3cb"></div><div class="a" style="left:258px;top:0;width:0;height:17px;border-left:1px dotted #d0d3cb"></div><div class="a" style="left:322px;top:0;width:0;height:17px;border-left:1px dotted #d0d3cb"></div><div class="a" style="left:366px;top:0;width:0;height:17px;border-left:1px dotted #d0d3cb"></div><div class="a" style="left:416px;top:0;width:0;height:17px;border-left:1px dotted #d0d3cb"></div><div class="a" style="left:482px;top:0;width:0;height:17px;border-left:1px dotted #d0d3cb"></div><div class="a" style="left:538px;top:0;width:0;height:17px;border-left:1px dotted #d0d3cb"></div><div class="a" style="left:616px;top:0;width:0;height:17px;border-left:1px dotted #d0d3cb"></div><div class="a" style="left:691px;top:0;width:0;height:17px;border-left:1px dotted #d0d3cb"></div><div class="a" style="left:750px;top:0;width:0;height:17px;border-left:1px dotted #d0d3cb"></div><div class="a" style="left:807px;top:0;width:0;height:17px;border-left:1px dotted #d0d3cb"></div><div class="a" style="left:959px;top:0;width:0;height:17px;border-left:1px dotted #d0d3cb"></div><div class="a" style="left:1018px;top:0;width:0;height:17px;border-left:1px dotted #d0d3cb"></div><div class="a" style="left:1103px;top:0;width:0;height:17px;border-left:1px dotted #d0d3cb"></div><div class="a" style="left:1194px;top:0;width:0;height:17px;border-left:1px dotted #d0d3cb"></div><div class="a" style="left:1302px;top:0;width:0;height:17px;border-left:1px dotted #d0d3cb"></div><div class="a" style="left:1391px;top:0;width:0;height:17px;border-left:1px dotted #d0d3cb"></div><div class="a" style="left:1453px;top:0;width:0;height:17px;border-left:1px dotted #d0d3cb"></div><div class="a" style="left:1515px;top:0;width:0;height:17px;border-left:1px dotted #d0d3cb"></div><div class="a" style="left:1570px;top:0;width:0;height:17px;border-left:1px dotted #d0d3cb"></div><div class="a" style="left:1629px;top:0;width:0;height:17px;border-left:1px dotted #d0d3cb"></div><div class="a" style="left:1695px;top:0;width:0;height:17px;border-left:1px dotted #d0d3cb"></div><div class="a" style="left:16px;top:0;width:0;height:17px;border-left:1px dotted #d0d3cb"></div><div class="a" style="left:0;top:0.31px;width:1696px;height:14px"><div class="cb" style="left:43.8px;top:2.9px"><svg width="8" height="8" viewBox="0 0 8 8"><path d="M1 3.6 L3.2 7.2 L7.4 1.2" fill="none" stroke="#999d93" stroke-width="1.6"/></svg></div><div class="c" style="left:82.8px;width:36.3px;padding-left:2.2px">Ч</div><div class="c" style="left:121.8px;width:101.2px;padding-left:2.2px;letter-spacing:0.5px">2393306296</div><div class="c" style="left:225.7px;width:30.3px;padding-left:2.2px;letter-spacing:0.5px">2</div><div class="c" style="left:258.7px;width:61.7px;padding-left:2.2px"></div><div class="c" style="left:323.1px;width:41.2px;padding-left:2.2px;letter-spacing:0.5px">2</div><div class="c" style="left:367.0px;width:47.4px;padding-left:2.2px;letter-spacing:0.5px">2021</div><div class="c" style="left:417.1px;width:62.9px;padding-left:2.2px">Сівілір</div><div class="c" style="left:482.7px;width:53.3px;padding-left:2.2px">Юрій</div><div class="c" style="left:538.7px;width:75.6px;padding-left:2.2px">Іванович</div><div class="c" style="left:617.0px;width:72.3px;padding-left:2.2px"></div><div class="c" style="left:751.2px;width:53.8px;padding-left:2.2px;letter-spacing:0.5px">28</div><div class="c r" style="left:959.8px;width:59.3px;padding-right:3.8px;box-sizing:border-box;letter-spacing:0.5px">6800,00</div><div class="c r" style="left:1019.1px;width:84.9px;padding-right:3.8px;box-sizing:border-box;letter-spacing:0.5px">6800,00</div><div class="c r" style="left:1104.0px;width:90.7px;padding-right:3.8px;box-sizing:border-box"></div><div class="c r" style="left:1194.7px;width:107.9px;padding-right:3.8px;box-sizing:border-box;letter-spacing:0.5px">0,00</div><div class="c r" style="left:1302.6px;width:89.5px;padding-right:3.8px;box-sizing:border-box;letter-spacing:0.5px">571,88</div><div class="cb" style="left:1417.2px;top:2.9px"><svg width="8" height="8" viewBox="0 0 8 8"><path d="M1 3.6 L3.2 7.2 L7.4 1.2" fill="none" stroke="#999d93" stroke-width="1.6"/></svg></div><div class="cb" style="left:1479.2px;top:2.9px"></div><div class="cb" style="left:1537.5px;top:2.9px"></div><div class="cb" style="left:1594.4px;top:2.9px"></div></div></div><div class="row" style="top:641px;height:17px;"><div class="a" style="left:0;top:0;width:16px;height:17px;background:#d6e1df;border-bottom:1px solid #c4d0ce;box-sizing:border-box"></div><div class="a" style="left:16px;top:16px;width:1680px;height:0;border-top:1px dotted #bfc3bb"></div><div class="a" style="left:82px;top:0;width:0;height:17px;border-left:1px dotted #d0d3cb"></div><div class="a" style="left:121px;top:0;width:0;height:17px;border-left:1px dotted #d0d3cb"></div><div class="a" style="left:225px;top:0;width:0;height:17px;border-left:1px dotted #d0d3cb"></div><div class="a" style="left:258px;top:0;width:0;height:17px;border-left:1px dotted #d0d3cb"></div><div class="a" style="left:322px;top:0;width:0;height:17px;border-left:1px dotted #d0d3cb"></div><div class="a" style="left:366px;top:0;width:0;height:17px;border-left:1px dotted #d0d3cb"></div><div class="a" style="left:416px;top:0;width:0;height:17px;border-left:1px dotted #d0d3cb"></div><div class="a" style="left:482px;top:0;width:0;height:17px;border-left:1px dotted #d0d3cb"></div><div class="a" style="left:538px;top:0;width:0;height:17px;border-left:1px dotted #d0d3cb"></div><div class="a" style="left:616px;top:0;width:0;height:17px;border-left:1px dotted #d0d3cb"></div><div class="a" style="left:691px;top:0;width:0;height:17px;border-left:1px dotted #d0d3cb"></div><div class="a" style="left:750px;top:0;width:0;height:17px;border-left:1px dotted #d0d3cb"></div><div class="a" style="left:807px;top:0;width:0;height:17px;border-left:1px dotted #d0d3cb"></div><div class="a" style="left:959px;top:0;width:0;height:17px;border-left:1px dotted #d0d3cb"></div><div class="a" style="left:1018px;top:0;width:0;height:17px;border-left:1px dotted #d0d3cb"></div><div class="a" style="left:1103px;top:0;width:0;height:17px;border-left:1px dotted #d0d3cb"></div><div class="a" style="left:1194px;top:0;width:0;height:17px;border-left:1px dotted #d0d3cb"></div><div class="a" style="left:1302px;top:0;width:0;height:17px;border-left:1px dotted #d0d3cb"></div><div class="a" style="left:1391px;top:0;width:0;height:17px;border-left:1px dotted #d0d3cb"></div><div class="a" style="left:1453px;top:0;width:0;height:17px;border-left:1px dotted #d0d3cb"></div><div class="a" style="left:1515px;top:0;width:0;height:17px;border-left:1px dotted #d0d3cb"></div><div class="a" style="left:1570px;top:0;width:0;height:17px;border-left:1px dotted #d0d3cb"></div><div class="a" style="left:1629px;top:0;width:0;height:17px;border-left:1px dotted #d0d3cb"></div><div class="a" style="left:1695px;top:0;width:0;height:17px;border-left:1px dotted #d0d3cb"></div><div class="a" style="left:16px;top:0;width:0;height:17px;border-left:1px dotted #d0d3cb"></div><div class="a" style="left:0;top:0.44px;width:1696px;height:14px"><div class="cb" style="left:43.8px;top:2.9px"><svg width="8" height="8" viewBox="0 0 8 8"><path d="M1 3.6 L3.2 7.2 L7.4 1.2" fill="none" stroke="#999d93" stroke-width="1.6"/></svg></div><div class="c" style="left:82.8px;width:36.3px;padding-left:2.2px">Ч</div><div class="c" style="left:121.8px;width:101.2px;padding-left:2.2px">БКМК493749</div><div class="c" style="left:225.7px;width:30.3px;padding-left:2.2px;letter-spacing:0.5px">1</div><div class="c" style="left:258.7px;width:61.7px;padding-left:2.2px"></div><div class="c" style="left:323.1px;width:41.2px;padding-left:2.2px;letter-spacing:0.5px">2</div><div class="c" style="left:367.0px;width:47.4px;padding-left:2.2px;letter-spacing:0.5px">2021</div><div class="c" style="left:417.1px;width:62.9px;padding-left:2.2px">САВЕНКО</div><div class="c" style="left:482.7px;width:53.3px;padding-left:2.2px">ОЛЕКС...</div><div class="c" style="left:538.7px;width:75.6px;padding-left:2.2px">МИКОЛАЙ...</div><div class="c" style="left:617.0px;width:72.3px;padding-left:2.2px"></div><div class="c" style="left:751.2px;width:53.8px;padding-left:2.2px;letter-spacing:0.5px">28</div><div class="c r" style="left:959.8px;width:59.3px;padding-right:3.8px;box-sizing:border-box;letter-spacing:0.5px">8000,00</div><div class="c r" style="left:1019.1px;width:84.9px;padding-right:3.8px;box-sizing:border-box;letter-spacing:0.5px">8000,00</div><div class="c r" style="left:1104.0px;width:90.7px;padding-right:3.8px;box-sizing:border-box"></div><div class="c r" style="left:1194.7px;width:107.9px;padding-right:3.8px;box-sizing:border-box;letter-spacing:0.5px">0,00</div><div class="c r" style="left:1302.6px;width:89.5px;padding-right:3.8px;box-sizing:border-box;letter-spacing:0.5px">1760,00</div><div class="cb" style="left:1417.2px;top:2.9px"><svg width="8" height="8" viewBox="0 0 8 8"><path d="M1 3.6 L3.2 7.2 L7.4 1.2" fill="none" stroke="#999d93" stroke-width="1.6"/></svg></div><div class="cb" style="left:1479.2px;top:2.9px"></div><div class="cb" style="left:1537.5px;top:2.9px"></div><div class="cb" style="left:1594.4px;top:2.9px"></div></div></div><div class="row" style="top:658px;height:18px;"><div class="a" style="left:0;top:0;width:16px;height:18px;background:#d6e1df;border-bottom:1px solid #c4d0ce;box-sizing:border-box"></div><div class="a" style="left:16px;top:17px;width:1680px;height:0;border-top:1px dotted #bfc3bb"></div><div class="a" style="left:82px;top:0;width:0;height:18px;border-left:1px dotted #d0d3cb"></div><div class="a" style="left:121px;top:0;width:0;height:18px;border-left:1px dotted #d0d3cb"></div><div class="a" style="left:225px;top:0;width:0;height:18px;border-left:1px dotted #d0d3cb"></div><div class="a" style="left:258px;top:0;width:0;height:18px;border-left:1px dotted #d0d3cb"></div><div class="a" style="left:322px;top:0;width:0;height:18px;border-left:1px dotted #d0d3cb"></div><div class="a" style="left:366px;top:0;width:0;height:18px;border-left:1px dotted #d0d3cb"></div><div class="a" style="left:416px;top:0;width:0;height:18px;border-left:1px dotted #d0d3cb"></div><div class="a" style="left:482px;top:0;width:0;height:18px;border-left:1px dotted #d0d3cb"></div><div class="a" style="left:538px;top:0;width:0;height:18px;border-left:1px dotted #d0d3cb"></div><div class="a" style="left:616px;top:0;width:0;height:18px;border-left:1px dotted #d0d3cb"></div><div class="a" style="left:691px;top:0;width:0;height:18px;border-left:1px dotted #d0d3cb"></div><div class="a" style="left:750px;top:0;width:0;height:18px;border-left:1px dotted #d0d3cb"></div><div class="a" style="left:807px;top:0;width:0;height:18px;border-left:1px dotted #d0d3cb"></div><div class="a" style="left:959px;top:0;width:0;height:18px;border-left:1px dotted #d0d3cb"></div><div class="a" style="left:1018px;top:0;width:0;height:18px;border-left:1px dotted #d0d3cb"></div><div class="a" style="left:1103px;top:0;width:0;height:18px;border-left:1px dotted #d0d3cb"></div><div class="a" style="left:1194px;top:0;width:0;height:18px;border-left:1px dotted #d0d3cb"></div><div class="a" style="left:1302px;top:0;width:0;height:18px;border-left:1px dotted #d0d3cb"></div><div class="a" style="left:1391px;top:0;width:0;height:18px;border-left:1px dotted #d0d3cb"></div><div class="a" style="left:1453px;top:0;width:0;height:18px;border-left:1px dotted #d0d3cb"></div><div class="a" style="left:1515px;top:0;width:0;height:18px;border-left:1px dotted #d0d3cb"></div><div class="a" style="left:1570px;top:0;width:0;height:18px;border-left:1px dotted #d0d3cb"></div><div class="a" style="left:1629px;top:0;width:0;height:18px;border-left:1px dotted #d0d3cb"></div><div class="a" style="left:1695px;top:0;width:0;height:18px;border-left:1px dotted #d0d3cb"></div><div class="a" style="left:16px;top:0;width:0;height:18px;border-left:1px dotted #d0d3cb"></div><div class="a" style="left:0;top:0.57px;width:1696px;height:14px"><div class="cb" style="left:43.8px;top:2.9px"><svg width="8" height="8" viewBox="0 0 8 8"><path d="M1 3.6 L3.2 7.2 L7.4 1.2" fill="none" stroke="#999d93" stroke-width="1.6"/></svg></div><div class="c" style="left:82.8px;width:36.3px;padding-left:2.2px">Ж</div><div class="c" style="left:121.8px;width:101.2px;padding-left:2.2px;letter-spacing:0.5px">2291100884</div><div class="c" style="left:225.7px;width:30.3px;padding-left:2.2px;letter-spacing:0.5px">1</div><div class="c" style="left:258.7px;width:61.7px;padding-left:2.2px"></div><div class="c" style="left:323.1px;width:41.2px;padding-left:2.2px;letter-spacing:0.5px">2</div><div class="c" style="left:367.0px;width:47.4px;padding-left:2.2px;letter-spacing:0.5px">2021</div><div class="c" style="left:417.1px;width:62.9px;padding-left:2.2px">Сафонова</div><div class="c" style="left:482.7px;width:53.3px;padding-left:2.2px">Наталія</div><div class="c" style="left:538.7px;width:75.6px;padding-left:2.2px">Михайлівна</div><div class="c" style="left:617.0px;width:72.3px;padding-left:2.2px"></div><div class="c" style="left:751.2px;width:53.8px;padding-left:2.2px;letter-spacing:0.5px">28</div><div class="c r" style="left:959.8px;width:59.3px;padding-right:3.8px;box-sizing:border-box;letter-spacing:0.5px">6500,00</div><div class="c r" style="left:1019.1px;width:84.9px;padding-right:3.8px;box-sizing:border-box;letter-spacing:0.5px">6500,00</div><div class="c r" style="left:1104.0px;width:90.7px;padding-right:3.8px;box-sizing:border-box"></div><div class="c r" style="left:1194.7px;width:107.9px;padding-right:3.8px;box-sizing:border-box;letter-spacing:0.5px">0,00</div><div class="c r" style="left:1302.6px;width:89.5px;padding-right:3.8px;box-sizing:border-box;letter-spacing:0.5px">1430,00</div><div class="cb" style="left:1417.2px;top:2.9px"><svg width="8" height="8" viewBox="0 0 8 8"><path d="M1 3.6 L3.2 7.2 L7.4 1.2" fill="none" stroke="#999d93" stroke-width="1.6"/></svg></div><div class="cb" style="left:1479.2px;top:2.9px"></div><div class="cb" style="left:1537.5px;top:2.9px"></div><div class="cb" style="left:1594.4px;top:2.9px"></div></div></div><div class="row" style="top:676px;height:17px;"><div class="a" style="left:0;top:0;width:16px;height:17px;background:#d6e1df;border-bottom:1px solid #c4d0ce;box-sizing:border-box"></div><div class="a" style="left:16px;top:16px;width:1680px;height:0;border-top:1px dotted #bfc3bb"></div><div class="a" style="left:82px;top:0;width:0;height:17px;border-left:1px dotted #d0d3cb"></div><div class="a" style="left:121px;top:0;width:0;height:17px;border-left:1px dotted #d0d3cb"></div><div class="a" style="left:225px;top:0;width:0;height:17px;border-left:1px dotted #d0d3cb"></div><div class="a" style="left:258px;top:0;width:0;height:17px;border-left:1px dotted #d0d3cb"></div><div class="a" style="left:322px;top:0;width:0;height:17px;border-left:1px dotted #d0d3cb"></div><div class="a" style="left:366px;top:0;width:0;height:17px;border-left:1px dotted #d0d3cb"></div><div class="a" style="left:416px;top:0;width:0;height:17px;border-left:1px dotted #d0d3cb"></div><div class="a" style="left:482px;top:0;width:0;height:17px;border-left:1px dotted #d0d3cb"></div><div class="a" style="left:538px;top:0;width:0;height:17px;border-left:1px dotted #d0d3cb"></div><div class="a" style="left:616px;top:0;width:0;height:17px;border-left:1px dotted #d0d3cb"></div><div class="a" style="left:691px;top:0;width:0;height:17px;border-left:1px dotted #d0d3cb"></div><div class="a" style="left:750px;top:0;width:0;height:17px;border-left:1px dotted #d0d3cb"></div><div class="a" style="left:807px;top:0;width:0;height:17px;border-left:1px dotted #d0d3cb"></div><div class="a" style="left:959px;top:0;width:0;height:17px;border-left:1px dotted #d0d3cb"></div><div class="a" style="left:1018px;top:0;width:0;height:17px;border-left:1px dotted #d0d3cb"></div><div class="a" style="left:1103px;top:0;width:0;height:17px;border-left:1px dotted #d0d3cb"></div><div class="a" style="left:1194px;top:0;width:0;height:17px;border-left:1px dotted #d0d3cb"></div><div class="a" style="left:1302px;top:0;width:0;height:17px;border-left:1px dotted #d0d3cb"></div><div class="a" style="left:1391px;top:0;width:0;height:17px;border-left:1px dotted #d0d3cb"></div><div class="a" style="left:1453px;top:0;width:0;height:17px;border-left:1px dotted #d0d3cb"></div><div class="a" style="left:1515px;top:0;width:0;height:17px;border-left:1px dotted #d0d3cb"></div><div class="a" style="left:1570px;top:0;width:0;height:17px;border-left:1px dotted #d0d3cb"></div><div class="a" style="left:1629px;top:0;width:0;height:17px;border-left:1px dotted #d0d3cb"></div><div class="a" style="left:1695px;top:0;width:0;height:17px;border-left:1px dotted #d0d3cb"></div><div class="a" style="left:16px;top:0;width:0;height:17px;border-left:1px dotted #d0d3cb"></div><div class="a" style="left:0;top:-0.30px;width:1696px;height:14px"><div class="cb" style="left:43.8px;top:2.9px"><svg width="8" height="8" viewBox="0 0 8 8"><path d="M1 3.6 L3.2 7.2 L7.4 1.2" fill="none" stroke="#999d93" stroke-width="1.6"/></svg></div><div class="c" style="left:82.8px;width:36.3px;padding-left:2.2px">Ч</div><div class="c" style="left:121.8px;width:101.2px;padding-left:2.2px;letter-spacing:0.5px">3534408378</div><div class="c" style="left:225.7px;width:30.3px;padding-left:2.2px;letter-spacing:0.5px">1</div><div class="c" style="left:258.7px;width:61.7px;padding-left:2.2px"></div><div class="c" style="left:323.1px;width:41.2px;padding-left:2.2px;letter-spacing:0.5px">2</div><div class="c" style="left:367.0px;width:47.4px;padding-left:2.2px;letter-spacing:0.5px">2021</div><div class="c" style="left:417.1px;width:62.9px;padding-left:2.2px">Серков</div><div class="c" style="left:482.7px;width:53.3px;padding-left:2.2px">Дмитро</div><div class="c" style="left:538.7px;width:75.6px;padding-left:2.2px">Андрійович</div><div class="c" style="left:617.0px;width:72.3px;padding-left:2.2px"></div><div class="c" style="left:751.2px;width:53.8px;padding-left:2.2px;letter-spacing:0.5px">28</div><div class="c r" style="left:959.8px;width:59.3px;padding-right:3.8px;box-sizing:border-box;letter-spacing:0.5px">8500,00</div><div class="c r" style="left:1019.1px;width:84.9px;padding-right:3.8px;box-sizing:border-box;letter-spacing:0.5px">8500,00</div><div class="c r" style="left:1104.0px;width:90.7px;padding-right:3.8px;box-sizing:border-box"></div><div class="c r" style="left:1194.7px;width:107.9px;padding-right:3.8px;box-sizing:border-box;letter-spacing:0.5px">0,00</div><div class="c r" style="left:1302.6px;width:89.5px;padding-right:3.8px;box-sizing:border-box;letter-spacing:0.5px">1870,00</div><div class="cb" style="left:1417.2px;top:2.9px"><svg width="8" height="8" viewBox="0 0 8 8"><path d="M1 3.6 L3.2 7.2 L7.4 1.2" fill="none" stroke="#999d93" stroke-width="1.6"/></svg></div><div class="cb" style="left:1479.2px;top:2.9px"></div><div class="cb" style="left:1537.5px;top:2.9px"></div><div class="cb" style="left:1594.4px;top:2.9px"></div></div></div><div class="row" style="top:693px;height:17px;"><div class="a" style="left:0;top:0;width:16px;height:17px;background:#d6e1df;border-bottom:1px solid #c4d0ce;box-sizing:border-box"></div><div class="a" style="left:16px;top:16px;width:1680px;height:0;border-top:1px dotted #bfc3bb"></div><div class="a" style="left:82px;top:0;width:0;height:17px;border-left:1px dotted #d0d3cb"></div><div class="a" style="left:121px;top:0;width:0;height:17px;border-left:1px dotted #d0d3cb"></div><div class="a" style="left:225px;top:0;width:0;height:17px;border-left:1px dotted #d0d3cb"></div><div class="a" style="left:258px;top:0;width:0;height:17px;border-left:1px dotted #d0d3cb"></div><div class="a" style="left:322px;top:0;width:0;height:17px;border-left:1px dotted #d0d3cb"></div><div class="a" style="left:366px;top:0;width:0;height:17px;border-left:1px dotted #d0d3cb"></div><div class="a" style="left:416px;top:0;width:0;height:17px;border-left:1px dotted #d0d3cb"></div><div class="a" style="left:482px;top:0;width:0;height:17px;border-left:1px dotted #d0d3cb"></div><div class="a" style="left:538px;top:0;width:0;height:17px;border-left:1px dotted #d0d3cb"></div><div class="a" style="left:616px;top:0;width:0;height:17px;border-left:1px dotted #d0d3cb"></div><div class="a" style="left:691px;top:0;width:0;height:17px;border-left:1px dotted #d0d3cb"></div><div class="a" style="left:750px;top:0;width:0;height:17px;border-left:1px dotted #d0d3cb"></div><div class="a" style="left:807px;top:0;width:0;height:17px;border-left:1px dotted #d0d3cb"></div><div class="a" style="left:959px;top:0;width:0;height:17px;border-left:1px dotted #d0d3cb"></div><div class="a" style="left:1018px;top:0;width:0;height:17px;border-left:1px dotted #d0d3cb"></div><div class="a" style="left:1103px;top:0;width:0;height:17px;border-left:1px dotted #d0d3cb"></div><div class="a" style="left:1194px;top:0;width:0;height:17px;border-left:1px dotted #d0d3cb"></div><div class="a" style="left:1302px;top:0;width:0;height:17px;border-left:1px dotted #d0d3cb"></div><div class="a" style="left:1391px;top:0;width:0;height:17px;border-left:1px dotted #d0d3cb"></div><div class="a" style="left:1453px;top:0;width:0;height:17px;border-left:1px dotted #d0d3cb"></div><div class="a" style="left:1515px;top:0;width:0;height:17px;border-left:1px dotted #d0d3cb"></div><div class="a" style="left:1570px;top:0;width:0;height:17px;border-left:1px dotted #d0d3cb"></div><div class="a" style="left:1629px;top:0;width:0;height:17px;border-left:1px dotted #d0d3cb"></div><div class="a" style="left:1695px;top:0;width:0;height:17px;border-left:1px dotted #d0d3cb"></div><div class="a" style="left:16px;top:0;width:0;height:17px;border-left:1px dotted #d0d3cb"></div><div class="a" style="left:0;top:-0.17px;width:1696px;height:14px"><div class="cb" style="left:43.8px;top:2.9px"><svg width="8" height="8" viewBox="0 0 8 8"><path d="M1 3.6 L3.2 7.2 L7.4 1.2" fill="none" stroke="#999d93" stroke-width="1.6"/></svg></div><div class="c" style="left:82.8px;width:36.3px;padding-left:2.2px">Ч</div><div class="c" style="left:121.8px;width:101.2px;padding-left:2.2px;letter-spacing:0.5px">3024919512</div><div class="c" style="left:225.7px;width:30.3px;padding-left:2.2px;letter-spacing:0.5px">1</div><div class="c" style="left:258.7px;width:61.7px;padding-left:2.2px"></div><div class="c" style="left:323.1px;width:41.2px;padding-left:2.2px;letter-spacing:0.5px">2</div><div class="c" style="left:367.0px;width:47.4px;padding-left:2.2px;letter-spacing:0.5px">2021</div><div class="c" style="left:417.1px;width:62.9px;padding-left:2.2px">Сивак</div><div class="c" style="left:482.7px;width:53.3px;padding-left:2.2px">Ігор</div><div class="c" style="left:538.7px;width:75.6px;padding-left:2.2px">Пиштович</div><div class="c" style="left:617.0px;width:72.3px;padding-left:2.2px"></div><div class="c" style="left:751.2px;width:53.8px;padding-left:2.2px;letter-spacing:0.5px">28</div><div class="c r" style="left:959.8px;width:59.3px;padding-right:3.8px;box-sizing:border-box;letter-spacing:0.5px">8000,00</div><div class="c r" style="left:1019.1px;width:84.9px;padding-right:3.8px;box-sizing:border-box;letter-spacing:0.5px">8000,00</div><div class="c r" style="left:1104.0px;width:90.7px;padding-right:3.8px;box-sizing:border-box"></div><div class="c r" style="left:1194.7px;width:107.9px;padding-right:3.8px;box-sizing:border-box;letter-spacing:0.5px">0,00</div><div class="c r" style="left:1302.6px;width:89.5px;padding-right:3.8px;box-sizing:border-box;letter-spacing:0.5px">1760,00</div><div class="cb" style="left:1417.2px;top:2.9px"><svg width="8" height="8" viewBox="0 0 8 8"><path d="M1 3.6 L3.2 7.2 L7.4 1.2" fill="none" stroke="#999d93" stroke-width="1.6"/></svg></div><div class="cb" style="left:1479.2px;top:2.9px"></div><div class="cb" style="left:1537.5px;top:2.9px"></div><div class="cb" style="left:1594.4px;top:2.9px"></div></div></div><div class="row" style="top:710px;height:17px;"><div class="a" style="left:0;top:0;width:16px;height:17px;background:#d6e1df;border-bottom:1px solid #c4d0ce;box-sizing:border-box"></div><div class="a" style="left:16px;top:16px;width:1680px;height:0;border-top:1px dotted #bfc3bb"></div><div class="a" style="left:82px;top:0;width:0;height:17px;border-left:1px dotted #d0d3cb"></div><div class="a" style="left:121px;top:0;width:0;height:17px;border-left:1px dotted #d0d3cb"></div><div class="a" style="left:225px;top:0;width:0;height:17px;border-left:1px dotted #d0d3cb"></div><div class="a" style="left:258px;top:0;width:0;height:17px;border-left:1px dotted #d0d3cb"></div><div class="a" style="left:322px;top:0;width:0;height:17px;border-left:1px dotted #d0d3cb"></div><div class="a" style="left:366px;top:0;width:0;height:17px;border-left:1px dotted #d0d3cb"></div><div class="a" style="left:416px;top:0;width:0;height:17px;border-left:1px dotted #d0d3cb"></div><div class="a" style="left:482px;top:0;width:0;height:17px;border-left:1px dotted #d0d3cb"></div><div class="a" style="left:538px;top:0;width:0;height:17px;border-left:1px dotted #d0d3cb"></div><div class="a" style="left:616px;top:0;width:0;height:17px;border-left:1px dotted #d0d3cb"></div><div class="a" style="left:691px;top:0;width:0;height:17px;border-left:1px dotted #d0d3cb"></div><div class="a" style="left:750px;top:0;width:0;height:17px;border-left:1px dotted #d0d3cb"></div><div class="a" style="left:807px;top:0;width:0;height:17px;border-left:1px dotted #d0d3cb"></div><div class="a" style="left:959px;top:0;width:0;height:17px;border-left:1px dotted #d0d3cb"></div><div class="a" style="left:1018px;top:0;width:0;height:17px;border-left:1px dotted #d0d3cb"></div><div class="a" style="left:1103px;top:0;width:0;height:17px;border-left:1px dotted #d0d3cb"></div><div class="a" style="left:1194px;top:0;width:0;height:17px;border-left:1px dotted #d0d3cb"></div><div class="a" style="left:1302px;top:0;width:0;height:17px;border-left:1px dotted #d0d3cb"></div><div class="a" style="left:1391px;top:0;width:0;height:17px;border-left:1px dotted #d0d3cb"></div><div class="a" style="left:1453px;top:0;width:0;height:17px;border-left:1px dotted #d0d3cb"></div><div class="a" style="left:1515px;top:0;width:0;height:17px;border-left:1px dotted #d0d3cb"></div><div class="a" style="left:1570px;top:0;width:0;height:17px;border-left:1px dotted #d0d3cb"></div><div class="a" style="left:1629px;top:0;width:0;height:17px;border-left:1px dotted #d0d3cb"></div><div class="a" style="left:1695px;top:0;width:0;height:17px;border-left:1px dotted #d0d3cb"></div><div class="a" style="left:16px;top:0;width:0;height:17px;border-left:1px dotted #d0d3cb"></div><div class="a" style="left:0;top:-0.04px;width:1696px;height:14px"><div class="cb" style="left:43.8px;top:2.9px"><svg width="8" height="8" viewBox="0 0 8 8"><path d="M1 3.6 L3.2 7.2 L7.4 1.2" fill="none" stroke="#999d93" stroke-width="1.6"/></svg></div><div class="c" style="left:82.8px;width:36.3px;padding-left:2.2px">Ч</div><div class="c" style="left:121.8px;width:101.2px;padding-left:2.2px;letter-spacing:0.5px">3235308274</div><div class="c" style="left:225.7px;width:30.3px;padding-left:2.2px;letter-spacing:0.5px">1</div><div class="c" style="left:258.7px;width:61.7px;padding-left:2.2px"></div><div class="c" style="left:323.1px;width:41.2px;padding-left:2.2px;letter-spacing:0.5px">2</div><div class="c" style="left:367.0px;width:47.4px;padding-left:2.2px;letter-spacing:0.5px">2021</div><div class="c" style="left:417.1px;width:62.9px;padding-left:2.2px">Сторожев</div><div class="c" style="left:482.7px;width:53.3px;padding-left:2.2px">Едуард</div><div class="c" style="left:538.7px;width:75.6px;padding-left:2.2px">Сергійович</div><div class="c" style="left:617.0px;width:72.3px;padding-left:2.2px"></div><div class="c" style="left:751.2px;width:53.8px;padding-left:2.2px;letter-spacing:0.5px">28</div><div class="c r" style="left:959.8px;width:59.3px;padding-right:3.8px;box-sizing:border-box;letter-spacing:0.5px">8500,00</div><div class="c r" style="left:1019.1px;width:84.9px;padding-right:3.8px;box-sizing:border-box;letter-spacing:0.5px">8500,00</div><div class="c r" style="left:1104.0px;width:90.7px;padding-right:3.8px;box-sizing:border-box"></div><div class="c r" style="left:1194.7px;width:107.9px;padding-right:3.8px;box-sizing:border-box;letter-spacing:0.5px">0,00</div><div class="c r" style="left:1302.6px;width:89.5px;padding-right:3.8px;box-sizing:border-box;letter-spacing:0.5px">1870,00</div><div class="cb" style="left:1417.2px;top:2.9px"><svg width="8" height="8" viewBox="0 0 8 8"><path d="M1 3.6 L3.2 7.2 L7.4 1.2" fill="none" stroke="#999d93" stroke-width="1.6"/></svg></div><div class="cb" style="left:1479.2px;top:2.9px"></div><div class="cb" style="left:1537.5px;top:2.9px"></div><div class="cb" style="left:1594.4px;top:2.9px"></div></div></div><div class="row" style="top:727px;height:17px;"><div class="a" style="left:0;top:0;width:16px;height:17px;background:#d6e1df;border-bottom:1px solid #c4d0ce;box-sizing:border-box"></div><div class="a" style="left:16px;top:16px;width:1680px;height:0;border-top:1px dotted #bfc3bb"></div><div class="a" style="left:82px;top:0;width:0;height:17px;border-left:1px dotted #d0d3cb"></div><div class="a" style="left:121px;top:0;width:0;height:17px;border-left:1px dotted #d0d3cb"></div><div class="a" style="left:225px;top:0;width:0;height:17px;border-left:1px dotted #d0d3cb"></div><div class="a" style="left:258px;top:0;width:0;height:17px;border-left:1px dotted #d0d3cb"></div><div class="a" style="left:322px;top:0;width:0;height:17px;border-left:1px dotted #d0d3cb"></div><div class="a" style="left:366px;top:0;width:0;height:17px;border-left:1px dotted #d0d3cb"></div><div class="a" style="left:416px;top:0;width:0;height:17px;border-left:1px dotted #d0d3cb"></div><div class="a" style="left:482px;top:0;width:0;height:17px;border-left:1px dotted #d0d3cb"></div><div class="a" style="left:538px;top:0;width:0;height:17px;border-left:1px dotted #d0d3cb"></div><div class="a" style="left:616px;top:0;width:0;height:17px;border-left:1px dotted #d0d3cb"></div><div class="a" style="left:691px;top:0;width:0;height:17px;border-left:1px dotted #d0d3cb"></div><div class="a" style="left:750px;top:0;width:0;height:17px;border-left:1px dotted #d0d3cb"></div><div class="a" style="left:807px;top:0;width:0;height:17px;border-left:1px dotted #d0d3cb"></div><div class="a" style="left:959px;top:0;width:0;height:17px;border-left:1px dotted #d0d3cb"></div><div class="a" style="left:1018px;top:0;width:0;height:17px;border-left:1px dotted #d0d3cb"></div><div class="a" style="left:1103px;top:0;width:0;height:17px;border-left:1px dotted #d0d3cb"></div><div class="a" style="left:1194px;top:0;width:0;height:17px;border-left:1px dotted #d0d3cb"></div><div class="a" style="left:1302px;top:0;width:0;height:17px;border-left:1px dotted #d0d3cb"></div><div class="a" style="left:1391px;top:0;width:0;height:17px;border-left:1px dotted #d0d3cb"></div><div class="a" style="left:1453px;top:0;width:0;height:17px;border-left:1px dotted #d0d3cb"></div><div class="a" style="left:1515px;top:0;width:0;height:17px;border-left:1px dotted #d0d3cb"></div><div class="a" style="left:1570px;top:0;width:0;height:17px;border-left:1px dotted #d0d3cb"></div><div class="a" style="left:1629px;top:0;width:0;height:17px;border-left:1px dotted #d0d3cb"></div><div class="a" style="left:1695px;top:0;width:0;height:17px;border-left:1px dotted #d0d3cb"></div><div class="a" style="left:16px;top:0;width:0;height:17px;border-left:1px dotted #d0d3cb"></div><div class="a" style="left:0;top:0.09px;width:1696px;height:14px"><div class="cb" style="left:43.8px;top:2.9px"><svg width="8" height="8" viewBox="0 0 8 8"><path d="M1 3.6 L3.2 7.2 L7.4 1.2" fill="none" stroke="#999d93" stroke-width="1.6"/></svg></div><div class="c" style="left:82.8px;width:36.3px;padding-left:2.2px">Ж</div><div class="c" style="left:121.8px;width:101.2px;padding-left:2.2px;letter-spacing:0.5px">2361601981</div><div class="c" style="left:225.7px;width:30.3px;padding-left:2.2px;letter-spacing:0.5px">1</div><div class="c" style="left:258.7px;width:61.7px;padding-left:2.2px"></div><div class="c" style="left:323.1px;width:41.2px;padding-left:2.2px;letter-spacing:0.5px">2</div><div class="c" style="left:367.0px;width:47.4px;padding-left:2.2px;letter-spacing:0.5px">2021</div><div class="c" style="left:417.1px;width:62.9px;padding-left:2.2px">Страхар...</div><div class="c" style="left:482.7px;width:53.3px;padding-left:2.2px">Алла</div><div class="c" style="left:538.7px;width:75.6px;padding-left:2.2px">Геннадіївна</div><div class="c" style="left:617.0px;width:72.3px;padding-left:2.2px"></div><div class="c" style="left:751.2px;width:53.8px;padding-left:2.2px;letter-spacing:0.5px">28</div><div class="c r" style="left:959.8px;width:59.3px;padding-right:3.8px;box-sizing:border-box;letter-spacing:0.5px">3400,00</div><div class="c r" style="left:1019.1px;width:84.9px;padding-right:3.8px;box-sizing:border-box;letter-spacing:0.5px">3400,00</div><div class="c r" style="left:1104.0px;width:90.7px;padding-right:3.8px;box-sizing:border-box"></div><div class="c r" style="left:1194.7px;width:107.9px;padding-right:3.8px;box-sizing:border-box;letter-spacing:0.5px">0,00</div><div class="c r" style="left:1302.6px;width:89.5px;padding-right:3.8px;box-sizing:border-box;letter-spacing:0.5px">748,00</div><div class="cb" style="left:1417.2px;top:2.9px"></div><div class="cb" style="left:1479.2px;top:2.9px"><svg width="8" height="8" viewBox="0 0 8 8"><path d="M1 3.6 L3.2 7.2 L7.4 1.2" fill="none" stroke="#999d93" stroke-width="1.6"/></svg></div><div class="cb" style="left:1537.5px;top:2.9px"></div><div class="cb" style="left:1594.4px;top:2.9px"></div></div></div><div class="row" style="top:744px;height:17px;"><div class="a" style="left:0;top:0;width:16px;height:17px;background:#d6e1df;border-bottom:1px solid #c4d0ce;box-sizing:border-box"></div><div class="a" style="left:16px;top:16px;width:1680px;height:0;border-top:1px dotted #bfc3bb"></div><div class="a" style="left:82px;top:0;width:0;height:17px;border-left:1px dotted #d0d3cb"></div><div class="a" style="left:121px;top:0;width:0;height:17px;border-left:1px dotted #d0d3cb"></div><div class="a" style="left:225px;top:0;width:0;height:17px;border-left:1px dotted #d0d3cb"></div><div class="a" style="left:258px;top:0;width:0;height:17px;border-left:1px dotted #d0d3cb"></div><div class="a" style="left:322px;top:0;width:0;height:17px;border-left:1px dotted #d0d3cb"></div><div class="a" style="left:366px;top:0;width:0;height:17px;border-left:1px dotted #d0d3cb"></div><div class="a" style="left:416px;top:0;width:0;height:17px;border-left:1px dotted #d0d3cb"></div><div class="a" style="left:482px;top:0;width:0;height:17px;border-left:1px dotted #d0d3cb"></div><div class="a" style="left:538px;top:0;width:0;height:17px;border-left:1px dotted #d0d3cb"></div><div class="a" style="left:616px;top:0;width:0;height:17px;border-left:1px dotted #d0d3cb"></div><div class="a" style="left:691px;top:0;width:0;height:17px;border-left:1px dotted #d0d3cb"></div><div class="a" style="left:750px;top:0;width:0;height:17px;border-left:1px dotted #d0d3cb"></div><div class="a" style="left:807px;top:0;width:0;height:17px;border-left:1px dotted #d0d3cb"></div><div class="a" style="left:959px;top:0;width:0;height:17px;border-left:1px dotted #d0d3cb"></div><div class="a" style="left:1018px;top:0;width:0;height:17px;border-left:1px dotted #d0d3cb"></div><div class="a" style="left:1103px;top:0;width:0;height:17px;border-left:1px dotted #d0d3cb"></div><div class="a" style="left:1194px;top:0;width:0;height:17px;border-left:1px dotted #d0d3cb"></div><div class="a" style="left:1302px;top:0;width:0;height:17px;border-left:1px dotted #d0d3cb"></div><div class="a" style="left:1391px;top:0;width:0;height:17px;border-left:1px dotted #d0d3cb"></div><div class="a" style="left:1453px;top:0;width:0;height:17px;border-left:1px dotted #d0d3cb"></div><div class="a" style="left:1515px;top:0;width:0;height:17px;border-left:1px dotted #d0d3cb"></div><div class="a" style="left:1570px;top:0;width:0;height:17px;border-left:1px dotted #d0d3cb"></div><div class="a" style="left:1629px;top:0;width:0;height:17px;border-left:1px dotted #d0d3cb"></div><div class="a" style="left:1695px;top:0;width:0;height:17px;border-left:1px dotted #d0d3cb"></div><div class="a" style="left:16px;top:0;width:0;height:17px;border-left:1px dotted #d0d3cb"></div><div class="a" style="left:0;top:0.22px;width:1696px;height:14px"><div class="cb" style="left:43.8px;top:2.9px"><svg width="8" height="8" viewBox="0 0 8 8"><path d="M1 3.6 L3.2 7.2 L7.4 1.2" fill="none" stroke="#999d93" stroke-width="1.6"/></svg></div><div class="c" style="left:82.8px;width:36.3px;padding-left:2.2px">Ж</div><div class="c" style="left:121.8px;width:101.2px;padding-left:2.2px;letter-spacing:0.5px">2289100988</div><div class="c" style="left:225.7px;width:30.3px;padding-left:2.2px;letter-spacing:0.5px">1</div><div class="c" style="left:258.7px;width:61.7px;padding-left:2.2px"></div><div class="c" style="left:323.1px;width:41.2px;padding-left:2.2px;letter-spacing:0.5px">2</div><div class="c" style="left:367.0px;width:47.4px;padding-left:2.2px;letter-spacing:0.5px">2021</div><div class="c" style="left:417.1px;width:62.9px;padding-left:2.2px">Турчинова</div><div class="c" style="left:482.7px;width:53.3px;padding-left:2.2px">Ніна</div><div class="c" style="left:538.7px;width:75.6px;padding-left:2.2px">Іллівна</div><div class="c" style="left:617.0px;width:72.3px;padding-left:2.2px"></div><div class="c" style="left:751.2px;width:53.8px;padding-left:2.2px;letter-spacing:0.5px">28</div><div class="c r" style="left:959.8px;width:59.3px;padding-right:3.8px;box-sizing:border-box;letter-spacing:0.5px">6800,00</div><div class="c r" style="left:1019.1px;width:84.9px;padding-right:3.8px;box-sizing:border-box;letter-spacing:0.5px">6800,00</div><div class="c r" style="left:1104.0px;width:90.7px;padding-right:3.8px;box-sizing:border-box"></div><div class="c r" style="left:1194.7px;width:107.9px;padding-right:3.8px;box-sizing:border-box;letter-spacing:0.5px">0,00</div><div class="c r" style="left:1302.6px;width:89.5px;padding-right:3.8px;box-sizing:border-box;letter-spacing:0.5px">1496,00</div><div class="cb" style="left:1417.2px;top:2.9px"><svg width="8" height="8" viewBox="0 0 8 8"><path d="M1 3.6 L3.2 7.2 L7.4 1.2" fill="none" stroke="#999d93" stroke-width="1.6"/></svg></div><div class="cb" style="left:1479.2px;top:2.9px"></div><div class="cb" style="left:1537.5px;top:2.9px"></div><div class="cb" style="left:1594.4px;top:2.9px"></div></div></div><div class="row" style="top:761px;height:17px;"><div class="a" style="left:0;top:0;width:16px;height:17px;background:#d6e1df;border-bottom:1px solid #c4d0ce;box-sizing:border-box"></div><div class="a" style="left:16px;top:16px;width:1680px;height:0;border-top:1px dotted #bfc3bb"></div><div class="a" style="left:82px;top:0;width:0;height:17px;border-left:1px dotted #d0d3cb"></div><div class="a" style="left:121px;top:0;width:0;height:17px;border-left:1px dotted #d0d3cb"></div><div class="a" style="left:225px;top:0;width:0;height:17px;border-left:1px dotted #d0d3cb"></div><div class="a" style="left:258px;top:0;width:0;height:17px;border-left:1px dotted #d0d3cb"></div><div class="a" style="left:322px;top:0;width:0;height:17px;border-left:1px dotted #d0d3cb"></div><div class="a" style="left:366px;top:0;width:0;height:17px;border-left:1px dotted #d0d3cb"></div><div class="a" style="left:416px;top:0;width:0;height:17px;border-left:1px dotted #d0d3cb"></div><div class="a" style="left:482px;top:0;width:0;height:17px;border-left:1px dotted #d0d3cb"></div><div class="a" style="left:538px;top:0;width:0;height:17px;border-left:1px dotted #d0d3cb"></div><div class="a" style="left:616px;top:0;width:0;height:17px;border-left:1px dotted #d0d3cb"></div><div class="a" style="left:691px;top:0;width:0;height:17px;border-left:1px dotted #d0d3cb"></div><div class="a" style="left:750px;top:0;width:0;height:17px;border-left:1px dotted #d0d3cb"></div><div class="a" style="left:807px;top:0;width:0;height:17px;border-left:1px dotted #d0d3cb"></div><div class="a" style="left:959px;top:0;width:0;height:17px;border-left:1px dotted #d0d3cb"></div><div class="a" style="left:1018px;top:0;width:0;height:17px;border-left:1px dotted #d0d3cb"></div><div class="a" style="left:1103px;top:0;width:0;height:17px;border-left:1px dotted #d0d3cb"></div><div class="a" style="left:1194px;top:0;width:0;height:17px;border-left:1px dotted #d0d3cb"></div><div class="a" style="left:1302px;top:0;width:0;height:17px;border-left:1px dotted #d0d3cb"></div><div class="a" style="left:1391px;top:0;width:0;height:17px;border-left:1px dotted #d0d3cb"></div><div class="a" style="left:1453px;top:0;width:0;height:17px;border-left:1px dotted #d0d3cb"></div><div class="a" style="left:1515px;top:0;width:0;height:17px;border-left:1px dotted #d0d3cb"></div><div class="a" style="left:1570px;top:0;width:0;height:17px;border-left:1px dotted #d0d3cb"></div><div class="a" style="left:1629px;top:0;width:0;height:17px;border-left:1px dotted #d0d3cb"></div><div class="a" style="left:1695px;top:0;width:0;height:17px;border-left:1px dotted #d0d3cb"></div><div class="a" style="left:16px;top:0;width:0;height:17px;border-left:1px dotted #d0d3cb"></div><div class="a" style="left:0;top:0.35px;width:1696px;height:14px"><div class="cb" style="left:43.8px;top:2.9px"><svg width="8" height="8" viewBox="0 0 8 8"><path d="M1 3.6 L3.2 7.2 L7.4 1.2" fill="none" stroke="#999d93" stroke-width="1.6"/></svg></div><div class="c" style="left:82.8px;width:36.3px;padding-left:2.2px">Ж</div><div class="c" style="left:121.8px;width:101.2px;padding-left:2.2px;letter-spacing:0.5px">2530616844</div><div class="c" style="left:225.7px;width:30.3px;padding-left:2.2px;letter-spacing:0.5px">1</div><div class="c" style="left:258.7px;width:61.7px;padding-left:2.2px"></div><div class="c" style="left:323.1px;width:41.2px;padding-left:2.2px;letter-spacing:0.5px">2</div><div class="c" style="left:367.0px;width:47.4px;padding-left:2.2px;letter-spacing:0.5px">2021</div><div class="c" style="left:417.1px;width:62.9px;padding-left:2.2px">Хаустова</div><div class="c" style="left:482.7px;width:53.3px;padding-left:2.2px">Єлизав...</div><div class="c" style="left:538.7px;width:75.6px;padding-left:2.2px">Іванівна</div><div class="c" style="left:617.0px;width:72.3px;padding-left:2.2px"></div><div class="c" style="left:751.2px;width:53.8px;padding-left:2.2px;letter-spacing:0.5px">28</div><div class="c r" style="left:959.8px;width:59.3px;padding-right:3.8px;box-sizing:border-box;letter-spacing:0.5px">6800,00</div><div class="c r" style="left:1019.1px;width:84.9px;padding-right:3.8px;box-sizing:border-box;letter-spacing:0.5px">6800,00</div><div class="c r" style="left:1104.0px;width:90.7px;padding-right:3.8px;box-sizing:border-box"></div><div class="c r" style="left:1194.7px;width:107.9px;padding-right:3.8px;box-sizing:border-box;letter-spacing:0.5px">0,00</div><div class="c r" style="left:1302.6px;width:89.5px;padding-right:3.8px;box-sizing:border-box;letter-spacing:0.5px">1496,00</div><div class="cb" style="left:1417.2px;top:2.9px"><svg width="8" height="8" viewBox="0 0 8 8"><path d="M1 3.6 L3.2 7.2 L7.4 1.2" fill="none" stroke="#999d93" stroke-width="1.6"/></svg></div><div class="cb" style="left:1479.2px;top:2.9px"></div><div class="cb" style="left:1537.5px;top:2.9px"></div><div class="cb" style="left:1594.4px;top:2.9px"></div></div></div><div class="row" style="top:778px;height:17px;"><div class="a" style="left:0;top:0;width:16px;height:17px;background:#d6e1df;border-bottom:1px solid #c4d0ce;box-sizing:border-box"></div><div class="a" style="left:16px;top:16px;width:1680px;height:0;border-top:1px dotted #bfc3bb"></div><div class="a" style="left:82px;top:0;width:0;height:17px;border-left:1px dotted #d0d3cb"></div><div class="a" style="left:121px;top:0;width:0;height:17px;border-left:1px dotted #d0d3cb"></div><div class="a" style="left:225px;top:0;width:0;height:17px;border-left:1px dotted #d0d3cb"></div><div class="a" style="left:258px;top:0;width:0;height:17px;border-left:1px dotted #d0d3cb"></div><div class="a" style="left:322px;top:0;width:0;height:17px;border-left:1px dotted #d0d3cb"></div><div class="a" style="left:366px;top:0;width:0;height:17px;border-left:1px dotted #d0d3cb"></div><div class="a" style="left:416px;top:0;width:0;height:17px;border-left:1px dotted #d0d3cb"></div><div class="a" style="left:482px;top:0;width:0;height:17px;border-left:1px dotted #d0d3cb"></div><div class="a" style="left:538px;top:0;width:0;height:17px;border-left:1px dotted #d0d3cb"></div><div class="a" style="left:616px;top:0;width:0;height:17px;border-left:1px dotted #d0d3cb"></div><div class="a" style="left:691px;top:0;width:0;height:17px;border-left:1px dotted #d0d3cb"></div><div class="a" style="left:750px;top:0;width:0;height:17px;border-left:1px dotted #d0d3cb"></div><div class="a" style="left:807px;top:0;width:0;height:17px;border-left:1px dotted #d0d3cb"></div><div class="a" style="left:959px;top:0;width:0;height:17px;border-left:1px dotted #d0d3cb"></div><div class="a" style="left:1018px;top:0;width:0;height:17px;border-left:1px dotted #d0d3cb"></div><div class="a" style="left:1103px;top:0;width:0;height:17px;border-left:1px dotted #d0d3cb"></div><div class="a" style="left:1194px;top:0;width:0;height:17px;border-left:1px dotted #d0d3cb"></div><div class="a" style="left:1302px;top:0;width:0;height:17px;border-left:1px dotted #d0d3cb"></div><div class="a" style="left:1391px;top:0;width:0;height:17px;border-left:1px dotted #d0d3cb"></div><div class="a" style="left:1453px;top:0;width:0;height:17px;border-left:1px dotted #d0d3cb"></div><div class="a" style="left:1515px;top:0;width:0;height:17px;border-left:1px dotted #d0d3cb"></div><div class="a" style="left:1570px;top:0;width:0;height:17px;border-left:1px dotted #d0d3cb"></div><div class="a" style="left:1629px;top:0;width:0;height:17px;border-left:1px dotted #d0d3cb"></div><div class="a" style="left:1695px;top:0;width:0;height:17px;border-left:1px dotted #d0d3cb"></div><div class="a" style="left:16px;top:0;width:0;height:17px;border-left:1px dotted #d0d3cb"></div><div class="a" style="left:0;top:0.48px;width:1696px;height:14px"><div class="cb" style="left:43.8px;top:2.9px"><svg width="8" height="8" viewBox="0 0 8 8"><path d="M1 3.6 L3.2 7.2 L7.4 1.2" fill="none" stroke="#999d93" stroke-width="1.6"/></svg></div><div class="c" style="left:82.8px;width:36.3px;padding-left:2.2px">Ч</div><div class="c" style="left:121.8px;width:101.2px;padding-left:2.2px;letter-spacing:0.5px">2978514051</div><div class="c" style="left:225.7px;width:30.3px;padding-left:2.2px;letter-spacing:0.5px">1</div><div class="c" style="left:258.7px;width:61.7px;padding-left:2.2px"></div><div class="c" style="left:323.1px;width:41.2px;padding-left:2.2px;letter-spacing:0.5px">2</div><div class="c" style="left:367.0px;width:47.4px;padding-left:2.2px;letter-spacing:0.5px">2021</div><div class="c" style="left:417.1px;width:62.9px;padding-left:2.2px">Шатійов</div><div class="c" style="left:482.7px;width:53.3px;padding-left:2.2px">Руслан</div><div class="c" style="left:538.7px;width:75.6px;padding-left:2.2px">Олександр...</div><div class="c" style="left:617.0px;width:72.3px;padding-left:2.2px"></div><div class="c" style="left:751.2px;width:53.8px;padding-left:2.2px;letter-spacing:0.5px">28</div><div class="c r" style="left:959.8px;width:59.3px;padding-right:3.8px;box-sizing:border-box;letter-spacing:0.5px">7344,00</div><div class="c r" style="left:1019.1px;width:84.9px;padding-right:3.8px;box-sizing:border-box;letter-spacing:0.5px">7344,00</div><div class="c r" style="left:1104.0px;width:90.7px;padding-right:3.8px;box-sizing:border-box"></div><div class="c r" style="left:1194.7px;width:107.9px;padding-right:3.8px;box-sizing:border-box;letter-spacing:0.5px">0,00</div><div class="c r" style="left:1302.6px;width:89.5px;padding-right:3.8px;box-sizing:border-box;letter-spacing:0.5px">1615,68</div><div class="cb" style="left:1417.2px;top:2.9px"><svg width="8" height="8" viewBox="0 0 8 8"><path d="M1 3.6 L3.2 7.2 L7.4 1.2" fill="none" stroke="#999d93" stroke-width="1.6"/></svg></div><div class="cb" style="left:1479.2px;top:2.9px"></div><div class="cb" style="left:1537.5px;top:2.9px"></div><div class="cb" style="left:1594.4px;top:2.9px"></div></div></div><div class="row" style="top:795px;height:18px;"><div class="a" style="left:0;top:0;width:16px;height:18px;background:#d6e1df;border-bottom:1px solid #c4d0ce;box-sizing:border-box"></div><div class="a" style="left:16px;top:17px;width:1680px;height:0;border-top:1px dotted #bfc3bb"></div><div class="a" style="left:82px;top:0;width:0;height:18px;border-left:1px dotted #d0d3cb"></div><div class="a" style="left:121px;top:0;width:0;height:18px;border-left:1px dotted #d0d3cb"></div><div class="a" style="left:225px;top:0;width:0;height:18px;border-left:1px dotted #d0d3cb"></div><div class="a" style="left:258px;top:0;width:0;height:18px;border-left:1px dotted #d0d3cb"></div><div class="a" style="left:322px;top:0;width:0;height:18px;border-left:1px dotted #d0d3cb"></div><div class="a" style="left:366px;top:0;width:0;height:18px;border-left:1px dotted #d0d3cb"></div><div class="a" style="left:416px;top:0;width:0;height:18px;border-left:1px dotted #d0d3cb"></div><div class="a" style="left:482px;top:0;width:0;height:18px;border-left:1px dotted #d0d3cb"></div><div class="a" style="left:538px;top:0;width:0;height:18px;border-left:1px dotted #d0d3cb"></div><div class="a" style="left:616px;top:0;width:0;height:18px;border-left:1px dotted #d0d3cb"></div><div class="a" style="left:691px;top:0;width:0;height:18px;border-left:1px dotted #d0d3cb"></div><div class="a" style="left:750px;top:0;width:0;height:18px;border-left:1px dotted #d0d3cb"></div><div class="a" style="left:807px;top:0;width:0;height:18px;border-left:1px dotted #d0d3cb"></div><div class="a" style="left:959px;top:0;width:0;height:18px;border-left:1px dotted #d0d3cb"></div><div class="a" style="left:1018px;top:0;width:0;height:18px;border-left:1px dotted #d0d3cb"></div><div class="a" style="left:1103px;top:0;width:0;height:18px;border-left:1px dotted #d0d3cb"></div><div class="a" style="left:1194px;top:0;width:0;height:18px;border-left:1px dotted #d0d3cb"></div><div class="a" style="left:1302px;top:0;width:0;height:18px;border-left:1px dotted #d0d3cb"></div><div class="a" style="left:1391px;top:0;width:0;height:18px;border-left:1px dotted #d0d3cb"></div><div class="a" style="left:1453px;top:0;width:0;height:18px;border-left:1px dotted #d0d3cb"></div><div class="a" style="left:1515px;top:0;width:0;height:18px;border-left:1px dotted #d0d3cb"></div><div class="a" style="left:1570px;top:0;width:0;height:18px;border-left:1px dotted #d0d3cb"></div><div class="a" style="left:1629px;top:0;width:0;height:18px;border-left:1px dotted #d0d3cb"></div><div class="a" style="left:1695px;top:0;width:0;height:18px;border-left:1px dotted #d0d3cb"></div><div class="a" style="left:16px;top:0;width:0;height:18px;border-left:1px dotted #d0d3cb"></div><div class="a" style="left:0;top:0.61px;width:1696px;height:14px"><div class="cb" style="left:43.8px;top:2.9px"><svg width="8" height="8" viewBox="0 0 8 8"><path d="M1 3.6 L3.2 7.2 L7.4 1.2" fill="none" stroke="#999d93" stroke-width="1.6"/></svg></div><div class="c" style="left:82.8px;width:36.3px;padding-left:2.2px">Ч</div><div class="c" style="left:121.8px;width:101.2px;padding-left:2.2px;letter-spacing:0.5px">2335000791</div><div class="c" style="left:225.7px;width:30.3px;padding-left:2.2px;letter-spacing:0.5px">1</div><div class="c" style="left:258.7px;width:61.7px;padding-left:2.2px"></div><div class="c" style="left:323.1px;width:41.2px;padding-left:2.2px;letter-spacing:0.5px">2</div><div class="c" style="left:367.0px;width:47.4px;padding-left:2.2px;letter-spacing:0.5px">2021</div><div class="c" style="left:417.1px;width:62.9px;padding-left:2.2px">Штанько</div><div class="c" style="left:482.7px;width:53.3px;padding-left:2.2px">Микола</div><div class="c" style="left:538.7px;width:75.6px;padding-left:2.2px">Володимир...</div><div class="c" style="left:617.0px;width:72.3px;padding-left:2.2px"></div><div class="c" style="left:751.2px;width:53.8px;padding-left:2.2px;letter-spacing:0.5px">28</div><div class="c r" style="left:959.8px;width:59.3px;padding-right:3.8px;box-sizing:border-box;letter-spacing:0.5px">6300,00</div><div class="c r" style="left:1019.1px;width:84.9px;padding-right:3.8px;box-sizing:border-box;letter-spacing:0.5px">6300,00</div><div class="c r" style="left:1104.0px;width:90.7px;padding-right:3.8px;box-sizing:border-box"></div><div class="c r" style="left:1194.7px;width:107.9px;padding-right:3.8px;box-sizing:border-box;letter-spacing:0.5px">0,00</div><div class="c r" style="left:1302.6px;width:89.5px;padding-right:3.8px;box-sizing:border-box;letter-spacing:0.5px">1386,00</div><div class="cb" style="left:1417.2px;top:2.9px"><svg width="8" height="8" viewBox="0 0 8 8"><path d="M1 3.6 L3.2 7.2 L7.4 1.2" fill="none" stroke="#999d93" stroke-width="1.6"/></svg></div><div class="cb" style="left:1479.2px;top:2.9px"></div><div class="cb" style="left:1537.5px;top:2.9px"></div><div class="cb" style="left:1594.4px;top:2.9px"></div></div></div><div class="row" style="top:813px;height:17px;"><div class="a" style="left:0;top:0;width:16px;height:17px;background:#d6e1df;border-bottom:1px solid #c4d0ce;box-sizing:border-box"></div><div class="a" style="left:16px;top:16px;width:1680px;height:0;border-top:1px dotted #bfc3bb"></div><div class="a" style="left:82px;top:0;width:0;height:17px;border-left:1px dotted #d0d3cb"></div><div class="a" style="left:121px;top:0;width:0;height:17px;border-left:1px dotted #d0d3cb"></div><div class="a" style="left:225px;top:0;width:0;height:17px;border-left:1px dotted #d0d3cb"></div><div class="a" style="left:258px;top:0;width:0;height:17px;border-left:1px dotted #d0d3cb"></div><div class="a" style="left:322px;top:0;width:0;height:17px;border-left:1px dotted #d0d3cb"></div><div class="a" style="left:366px;top:0;width:0;height:17px;border-left:1px dotted #d0d3cb"></div><div class="a" style="left:416px;top:0;width:0;height:17px;border-left:1px dotted #d0d3cb"></div><div class="a" style="left:482px;top:0;width:0;height:17px;border-left:1px dotted #d0d3cb"></div><div class="a" style="left:538px;top:0;width:0;height:17px;border-left:1px dotted #d0d3cb"></div><div class="a" style="left:616px;top:0;width:0;height:17px;border-left:1px dotted #d0d3cb"></div><div class="a" style="left:691px;top:0;width:0;height:17px;border-left:1px dotted #d0d3cb"></div><div class="a" style="left:750px;top:0;width:0;height:17px;border-left:1px dotted #d0d3cb"></div><div class="a" style="left:807px;top:0;width:0;height:17px;border-left:1px dotted #d0d3cb"></div><div class="a" style="left:959px;top:0;width:0;height:17px;border-left:1px dotted #d0d3cb"></div><div class="a" style="left:1018px;top:0;width:0;height:17px;border-left:1px dotted #d0d3cb"></div><div class="a" style="left:1103px;top:0;width:0;height:17px;border-left:1px dotted #d0d3cb"></div><div class="a" style="left:1194px;top:0;width:0;height:17px;border-left:1px dotted #d0d3cb"></div><div class="a" style="left:1302px;top:0;width:0;height:17px;border-left:1px dotted #d0d3cb"></div><div class="a" style="left:1391px;top:0;width:0;height:17px;border-left:1px dotted #d0d3cb"></div><div class="a" style="left:1453px;top:0;width:0;height:17px;border-left:1px dotted #d0d3cb"></div><div class="a" style="left:1515px;top:0;width:0;height:17px;border-left:1px dotted #d0d3cb"></div><div class="a" style="left:1570px;top:0;width:0;height:17px;border-left:1px dotted #d0d3cb"></div><div class="a" style="left:1629px;top:0;width:0;height:17px;border-left:1px dotted #d0d3cb"></div><div class="a" style="left:1695px;top:0;width:0;height:17px;border-left:1px dotted #d0d3cb"></div><div class="a" style="left:16px;top:0;width:0;height:17px;border-left:1px dotted #d0d3cb"></div><div class="a" style="left:0;top:-0.26px;width:1696px;height:14px"><div class="cb" style="left:43.8px;top:2.9px"><svg width="8" height="8" viewBox="0 0 8 8"><path d="M1 3.6 L3.2 7.2 L7.4 1.2" fill="none" stroke="#999d93" stroke-width="1.6"/></svg></div><div class="c" style="left:82.8px;width:36.3px;padding-left:2.2px">Ч</div><div class="c" style="left:121.8px;width:101.2px;padding-left:2.2px;letter-spacing:0.5px">2649721111</div><div class="c" style="left:225.7px;width:30.3px;padding-left:2.2px;letter-spacing:0.5px">1</div><div class="c" style="left:258.7px;width:61.7px;padding-left:2.2px"></div><div class="c" style="left:323.1px;width:41.2px;padding-left:2.2px;letter-spacing:0.5px">2</div><div class="c" style="left:367.0px;width:47.4px;padding-left:2.2px;letter-spacing:0.5px">2021</div><div class="c" style="left:417.1px;width:62.9px;padding-left:2.2px">Шульгін</div><div class="c" style="left:482.7px;width:53.3px;padding-left:2.2px">Сергій</div><div class="c" style="left:538.7px;width:75.6px;padding-left:2.2px">Олександр...</div><div class="c" style="left:617.0px;width:72.3px;padding-left:2.2px"></div><div class="c" style="left:751.2px;width:53.8px;padding-left:2.2px;letter-spacing:0.5px">28</div><div class="c r" style="left:959.8px;width:59.3px;padding-right:3.8px;box-sizing:border-box;letter-spacing:0.5px">8500,00</div><div class="c r" style="left:1019.1px;width:84.9px;padding-right:3.8px;box-sizing:border-box;letter-spacing:0.5px">8500,00</div><div class="c r" style="left:1104.0px;width:90.7px;padding-right:3.8px;box-sizing:border-box"></div><div class="c r" style="left:1194.7px;width:107.9px;padding-right:3.8px;box-sizing:border-box;letter-spacing:0.5px">0,00</div><div class="c r" style="left:1302.6px;width:89.5px;padding-right:3.8px;box-sizing:border-box;letter-spacing:0.5px">1870,00</div><div class="cb" style="left:1417.2px;top:2.9px"><svg width="8" height="8" viewBox="0 0 8 8"><path d="M1 3.6 L3.2 7.2 L7.4 1.2" fill="none" stroke="#999d93" stroke-width="1.6"/></svg></div><div class="cb" style="left:1479.2px;top:2.9px"></div><div class="cb" style="left:1537.5px;top:2.9px"></div><div class="cb" style="left:1594.4px;top:2.9px"></div></div></div><div class="row" style="top:830px;height:17px;"><div class="a" style="left:0;top:0;width:16px;height:17px;background:#d6e1df;border-bottom:1px solid #c4d0ce;box-sizing:border-box"></div><div class="a" style="left:16px;top:16px;width:1680px;height:0;border-top:1px dotted #bfc3bb"></div><div class="a" style="left:82px;top:0;width:0;height:17px;border-left:1px dotted #d0d3cb"></div><div class="a" style="left:121px;top:0;width:0;height:17px;border-left:1px dotted #d0d3cb"></div><div class="a" style="left:225px;top:0;width:0;height:17px;border-left:1px dotted #d0d3cb"></div><div class="a" style="left:258px;top:0;width:0;height:17px;border-left:1px dotted #d0d3cb"></div><div class="a" style="left:322px;top:0;width:0;height:17px;border-left:1px dotted #d0d3cb"></div><div class="a" style="left:366px;top:0;width:0;height:17px;border-left:1px dotted #d0d3cb"></div><div class="a" style="left:416px;top:0;width:0;height:17px;border-left:1px dotted #d0d3cb"></div><div class="a" style="left:482px;top:0;width:0;height:17px;border-left:1px dotted #d0d3cb"></div><div class="a" style="left:538px;top:0;width:0;height:17px;border-left:1px dotted #d0d3cb"></div><div class="a" style="left:616px;top:0;width:0;height:17px;border-left:1px dotted #d0d3cb"></div><div class="a" style="left:691px;top:0;width:0;height:17px;border-left:1px dotted #d0d3cb"></div><div class="a" style="left:750px;top:0;width:0;height:17px;border-left:1px dotted #d0d3cb"></div><div class="a" style="left:807px;top:0;width:0;height:17px;border-left:1px dotted #d0d3cb"></div><div class="a" style="left:959px;top:0;width:0;height:17px;border-left:1px dotted #d0d3cb"></div><div class="a" style="left:1018px;top:0;width:0;height:17px;border-left:1px dotted #d0d3cb"></div><div class="a" style="left:1103px;top:0;width:0;height:17px;border-left:1px dotted #d0d3cb"></div><div class="a" style="left:1194px;top:0;width:0;height:17px;border-left:1px dotted #d0d3cb"></div><div class="a" style="left:1302px;top:0;width:0;height:17px;border-left:1px dotted #d0d3cb"></div><div class="a" style="left:1391px;top:0;width:0;height:17px;border-left:1px dotted #d0d3cb"></div><div class="a" style="left:1453px;top:0;width:0;height:17px;border-left:1px dotted #d0d3cb"></div><div class="a" style="left:1515px;top:0;width:0;height:17px;border-left:1px dotted #d0d3cb"></div><div class="a" style="left:1570px;top:0;width:0;height:17px;border-left:1px dotted #d0d3cb"></div><div class="a" style="left:1629px;top:0;width:0;height:17px;border-left:1px dotted #d0d3cb"></div><div class="a" style="left:1695px;top:0;width:0;height:17px;border-left:1px dotted #d0d3cb"></div><div class="a" style="left:16px;top:0;width:0;height:17px;border-left:1px dotted #d0d3cb"></div><div class="a" style="left:0;top:-0.13px;width:1696px;height:14px"><div class="cb" style="left:43.8px;top:2.9px"><svg width="8" height="8" viewBox="0 0 8 8"><path d="M1 3.6 L3.2 7.2 L7.4 1.2" fill="none" stroke="#999d93" stroke-width="1.6"/></svg></div><div class="c" style="left:82.8px;width:36.3px;padding-left:2.2px">Ч</div><div class="c" style="left:121.8px;width:101.2px;padding-left:2.2px;letter-spacing:0.5px">2019401054</div><div class="c" style="left:225.7px;width:30.3px;padding-left:2.2px;letter-spacing:0.5px">1</div><div class="c" style="left:258.7px;width:61.7px;padding-left:2.2px;letter-spacing:0.5px">13</div><div class="c" style="left:323.1px;width:41.2px;padding-left:2.2px;letter-spacing:0.5px">1</div><div class="c" style="left:367.0px;width:47.4px;padding-left:2.2px;letter-spacing:0.5px">2021</div><div class="c" style="left:417.1px;width:62.9px;padding-left:2.2px">РАКІТІН</div><div class="c" style="left:482.7px;width:53.3px;padding-left:2.2px">СЕРГІЙ</div><div class="c" style="left:538.7px;width:75.6px;padding-left:2.2px">БОРИСОВИЧ</div><div class="c" style="left:617.0px;width:72.3px;padding-left:2.2px"></div><div class="c" style="left:751.2px;width:53.8px;padding-left:2.2px"></div><div class="c r" style="left:959.8px;width:59.3px;padding-right:3.8px;box-sizing:border-box"></div><div class="c r" style="left:1019.1px;width:84.9px;padding-right:3.8px;box-sizing:border-box"></div><div class="c r" style="left:1104.0px;width:90.7px;padding-right:3.8px;box-sizing:border-box;letter-spacing:0.5px">1784,22</div><div class="c r" style="left:1194.7px;width:107.9px;padding-right:3.8px;box-sizing:border-box"></div><div class="c r" style="left:1302.6px;width:89.5px;padding-right:3.8px;box-sizing:border-box;letter-spacing:0.5px">392,53</div><div class="cb" style="left:1417.2px;top:2.9px"><svg width="8" height="8" viewBox="0 0 8 8"><path d="M1 3.6 L3.2 7.2 L7.4 1.2" fill="none" stroke="#999d93" stroke-width="1.6"/></svg></div><div class="cb" style="left:1479.2px;top:2.9px"></div><div class="cb" style="left:1537.5px;top:2.9px"></div><div class="cb" style="left:1594.4px;top:2.9px"></div></div></div><div class="row" style="top:847px;height:17px"><div class="a" style="left:0;top:16px;width:1696px;height:0;border-top:1px dotted #bfc3bb"></div><div class="a" style="left:0;top:0;width:0;height:17px;border-left:1px dotted #d0d3cb"></div><div class="a" style="left:82px;top:0;width:0;height:17px;border-left:1px dotted #d0d3cb"></div><div class="a" style="left:121px;top:0;width:0;height:17px;border-left:1px dotted #d0d3cb"></div><div class="a" style="left:225px;top:0;width:0;height:17px;border-left:1px dotted #d0d3cb"></div><div class="a" style="left:258px;top:0;width:0;height:17px;border-left:1px dotted #d0d3cb"></div><div class="a" style="left:322px;top:0;width:0;height:17px;border-left:1px dotted #d0d3cb"></div><div class="a" style="left:366px;top:0;width:0;height:17px;border-left:1px dotted #d0d3cb"></div><div class="a" style="left:416px;top:0;width:0;height:17px;border-left:1px dotted #d0d3cb"></div><div class="a" style="left:482px;top:0;width:0;height:17px;border-left:1px dotted #d0d3cb"></div><div class="a" style="left:538px;top:0;width:0;height:17px;border-left:1px dotted #d0d3cb"></div><div class="a" style="left:616px;top:0;width:0;height:17px;border-left:1px dotted #d0d3cb"></div><div class="a" style="left:691px;top:0;width:0;height:17px;border-left:1px dotted #d0d3cb"></div><div class="a" style="left:750px;top:0;width:0;height:17px;border-left:1px dotted #d0d3cb"></div><div class="a" style="left:807px;top:0;width:0;height:17px;border-left:1px dotted #d0d3cb"></div><div class="a" style="left:959px;top:0;width:0;height:17px;border-left:1px dotted #d0d3cb"></div><div class="a" style="left:1018px;top:0;width:0;height:17px;border-left:1px dotted #d0d3cb"></div><div class="a" style="left:1103px;top:0;width:0;height:17px;border-left:1px dotted #d0d3cb"></div><div class="a" style="left:1194px;top:0;width:0;height:17px;border-left:1px dotted #d0d3cb"></div><div class="a" style="left:1302px;top:0;width:0;height:17px;border-left:1px dotted #d0d3cb"></div><div class="a" style="left:1391px;top:0;width:0;height:17px;border-left:1px dotted #d0d3cb"></div><div class="a" style="left:1453px;top:0;width:0;height:17px;border-left:1px dotted #d0d3cb"></div><div class="a" style="left:1515px;top:0;width:0;height:17px;border-left:1px dotted #d0d3cb"></div><div class="a" style="left:1570px;top:0;width:0;height:17px;border-left:1px dotted #d0d3cb"></div><div class="a" style="left:1629px;top:0;width:0;height:17px;border-left:1px dotted #d0d3cb"></div><div class="a" style="left:1695px;top:0;width:0;height:17px;border-left:1px dotted #d0d3cb"></div></div><div class="a" style="left:127px;top:863.5px;width:1px;height:18px;background:#dfe2dc"></div><div class="a" style="left:231px;top:863.5px;width:1px;height:18px;background:#dfe2dc"></div><div class="a" style="left:422px;top:863.5px;width:1px;height:18px;background:#dfe2dc"></div><div class="a" style="left:488px;top:863.5px;width:1px;height:18px;background:#dfe2dc"></div><div class="a" style="left:965px;top:863.5px;width:1px;height:18px;background:#dfe2dc"></div><div class="a" style="left:1024px;top:863.5px;width:1px;height:18px;background:#dfe2dc"></div><div class="a" style="left:1024px;top:863.5px;width:1px;height:18px;background:#dfe2dc"></div><div class="a" style="left:1109px;top:863.5px;width:1px;height:18px;background:#dfe2dc"></div><div class="a" style="left:1109px;top:863.5px;width:1px;height:18px;background:#dfe2dc"></div><div class="a" style="left:1200px;top:863.5px;width:1px;height:18px;background:#dfe2dc"></div><div class="a" style="left:1200px;top:863.5px;width:1px;height:18px;background:#dfe2dc"></div><div class="a" style="left:1308px;top:863.5px;width:1px;height:18px;background:#dfe2dc"></div><div class="a" style="left:1308px;top:863.5px;width:1px;height:18px;background:#dfe2dc"></div><div class="a" style="left:1397px;top:863.5px;width:1px;height:18px;background:#dfe2dc"></div><div class="t" style="left:131.3px;top:865.5px;width:99.9px;line-height:14px;font-weight:bold;letter-spacing:0.75px;overflow:hidden;color:#111">I Квартал 2021</div><div class="t" style="left:426.6px;top:865.5px;width:61.6px;line-height:14px;font-weight:bold;letter-spacing:0.75px;overflow:hidden;color:#111">Рядків:...</div><div class="t" style="left:965.3px;top:865.5px;width:55.8px;line-height:14px;font-weight:bold;letter-spacing:1.3px;text-align:right;overflow:hidden;color:#111">31961...</div><div class="t" style="left:1024.6px;top:865.5px;width:81.4px;line-height:14px;font-weight:bold;letter-spacing:1.3px;text-align:right;overflow:hidden;color:#111">319618,68</div><div class="t" style="left:1109.5px;top:865.5px;width:87.2px;line-height:14px;font-weight:bold;letter-spacing:1.3px;text-align:right;overflow:hidden;color:#111">2850,48</div><div class="t" style="left:1200.2px;top:865.5px;width:104.4px;line-height:14px;font-weight:bold;letter-spacing:1.3px;text-align:right;overflow:hidden;color:#111">0,00</div><div class="t" style="left:1308.1px;top:865.5px;width:86.0px;line-height:14px;font-weight:bold;letter-spacing:1.3px;text-align:right;overflow:hidden;color:#111">69203,70</div><div class="a" style="left:1702px;top:147px;width:20px;height:735px;background:#fdfdf8"></div><div class="a" style="left:1707px;top:147px;width:1px;height:735px;background:#eef4f2"></div><div class="a" style="left:1707px;top:462px;width:14px;height:404px;background:#d6e1df;border:1px solid #c8d3d1;box-sizing:border-box"></div><svg class="a" style="left:1711px;top:154px" width="7" height="4" viewBox="0 0 7 4"><path d="M3.5 0 L7 4 L0 4Z" fill="#4d5480"/></svg><svg class="a" style="left:1711px;top:872px" width="7" height="4" viewBox="0 0 7 4"><path d="M0 0 L7 0 L3.5 4Z" fill="#4d5480"/></svg><div class="a" style="left:5px;top:882px;width:1719px;height:1px;background:#8a928a"></div><div class="a" style="left:16px;top:484px;width:1442px;height:40px;border:3px solid #ff0b0b;box-sizing:border-box;border-radius:2px"></div><div class="a" style="left:85px;top:883px;width:1638px;height:3.5px;background:#d6e1df"></div><div class="a" style="left:5.0px;top:883px;width:80.0px;height:9px;background:#d6d9d0"></div><div class="t" style="left:12.5px;top:887.3px;line-height:14px;color:#4a5a8a">Новий рядок</div><div class="a" style="left:91.0px;top:886.5px;width:66.0px;height:6px;background:#fdfdf6;border-left:1px solid #e1e4de;border-right:1px solid #e1e4de;box-sizing:border-box"></div><div class="t" style="left:97.3px;top:887.3px;line-height:14px;color:#222">Прийняти</div><div class="a" style="left:162.5px;top:886.5px;width:96.3px;height:6px;background:#fdfdf6;border-left:1px solid #e1e4de;border-right:1px solid #e1e4de;box-sizing:border-box"></div><div class="t" style="left:183.3px;top:887.3px;line-height:14px;color:#222">Властивості</div><div class="a" style="left:263.0px;top:886.5px;width:146.4px;height:6px;background:#fdfdf6;border-left:1px solid #e1e4de;border-right:1px solid #e1e4de;box-sizing:border-box"></div><div class="t" style="left:284.6px;top:887.3px;line-height:14px;color:#222">Протокол перевірки</div><div class="a" style="left:415.0px;top:886.5px;width:148.4px;height:6px;background:#fdfdf6;border-left:1px solid #e1e4de;border-right:1px solid #e1e4de;box-sizing:border-box"></div><div class="t" style="left:435.8px;top:887.3px;line-height:14px;color:#222">Очистити з реєстру</div><div class="a" style="left:568.3px;top:886.5px;width:108.2px;height:6px;background:#fdfdf6;border-left:1px solid #e1e4de;border-right:1px solid #e1e4de;box-sizing:border-box"></div><div class="t" style="left:588.4px;top:887.3px;line-height:14px;color:#222">Перевизначення</div><div class="a" style="left:682.0px;top:886.5px;width:109.7px;height:6px;background:#fdfdf6;border-left:1px solid #e1e4de;border-right:1px solid #e1e4de;box-sizing:border-box"></div><div class="t" style="left:702.9px;top:887.3px;line-height:14px;color:#222">Квитанція №1</div><div class="a" style="left:797.2px;top:886.5px;width:109.6px;height:6px;background:#fdfdf6;border-left:1px solid #e1e4de;border-right:1px solid #e1e4de;box-sizing:border-box"></div><div class="t" style="left:818.0px;top:887.3px;line-height:14px;color:#222">Квитанція №2</div></body></html>
